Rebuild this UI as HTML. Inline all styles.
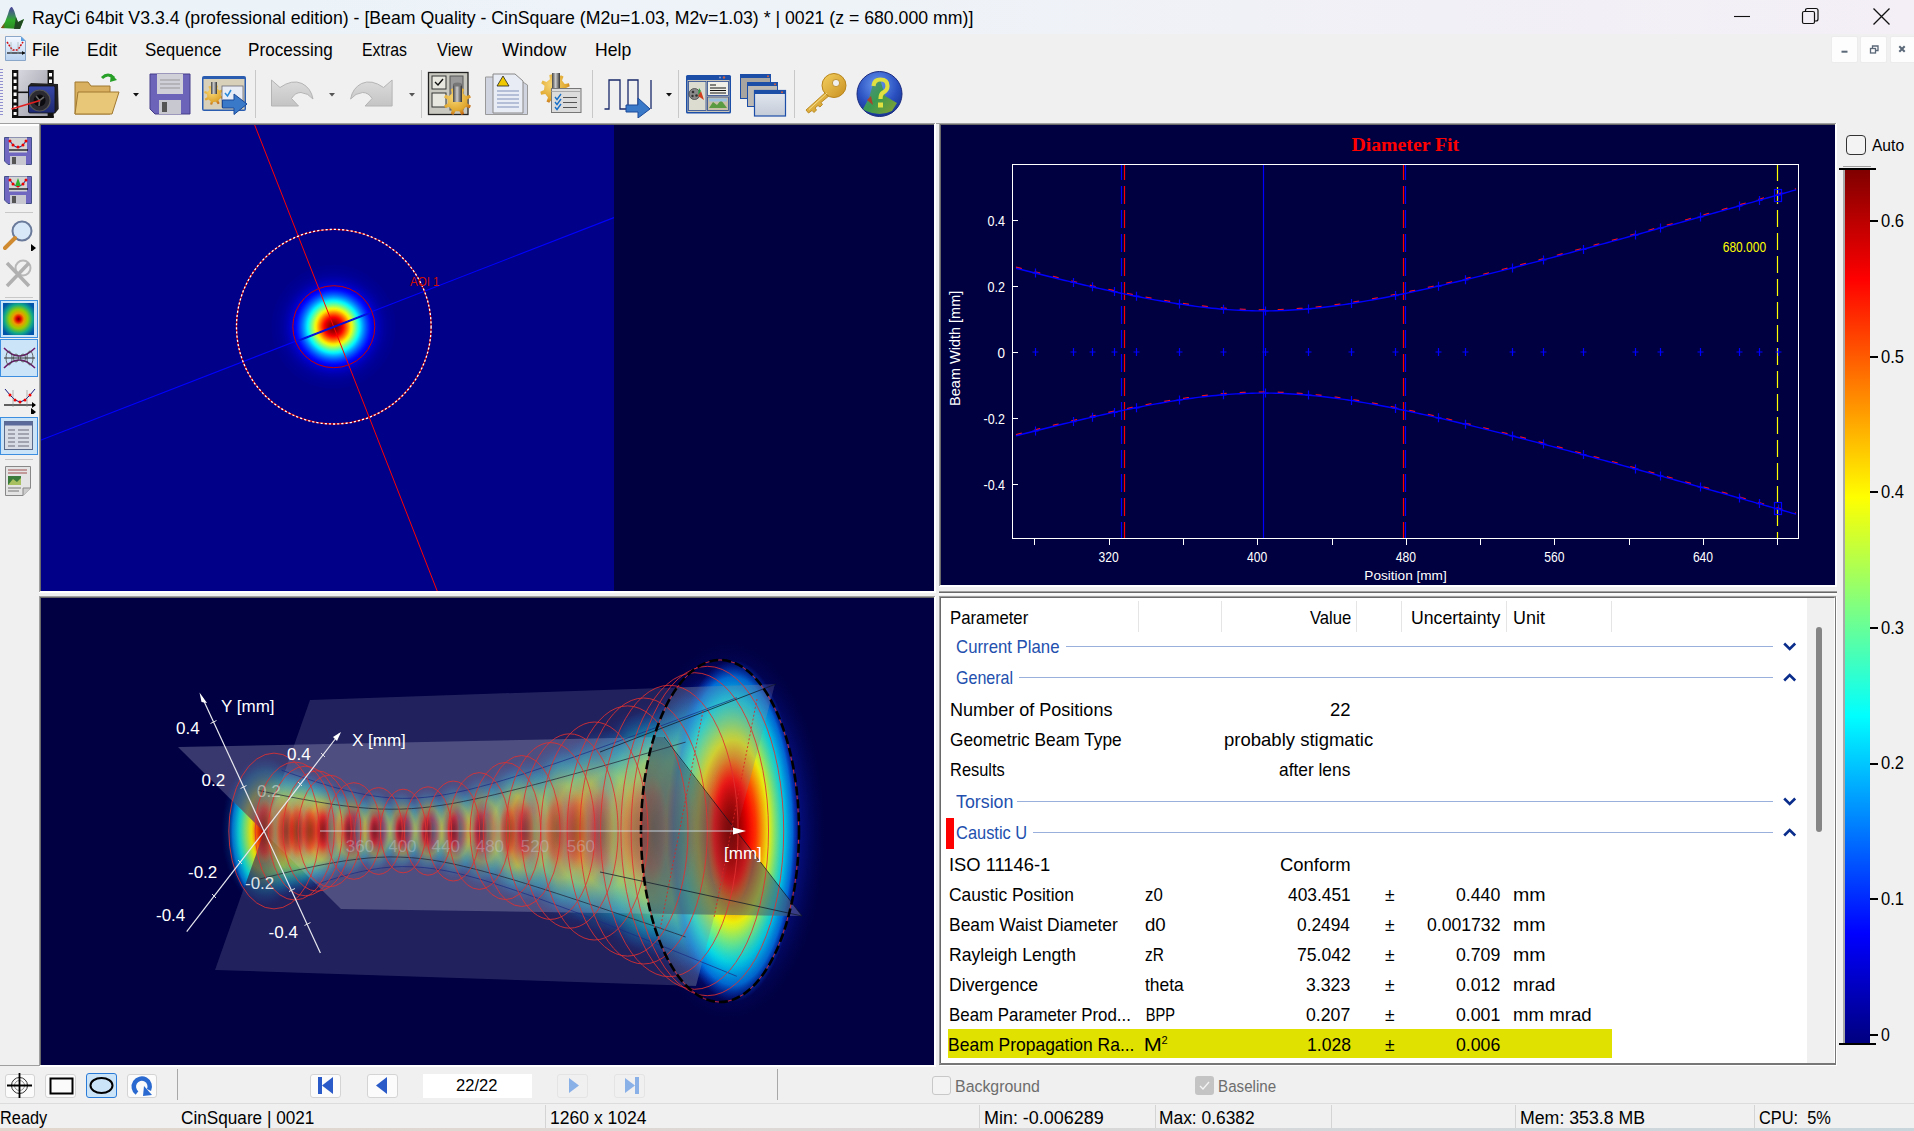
<!DOCTYPE html>
<html><head><meta charset="utf-8">
<style>
*{margin:0;padding:0;box-sizing:border-box}
html,body{width:1914px;height:1131px;overflow:hidden;background:#f0f0f0;font-family:"Liberation Sans",sans-serif;color:#000}
.a{position:absolute}
.t{position:absolute;white-space:nowrap}
svg{display:block}
</style></head><body>
<div class="a" style="left:0;top:0;width:1914px;height:34px;background:linear-gradient(90deg,#ebf3f8 0%,#eef3f8 45%,#f1f0f6 75%,#f4eff6 100%)"></div>
<svg class="a" style="left:0;top:5px" width="26" height="26" viewBox="0 0 26 26">
<defs><linearGradient id="lg1" x1="0" y1="0" x2="0" y2="1"><stop offset="0" stop-color="#4a3f9a"/><stop offset="0.35" stop-color="#3f7a6a"/><stop offset="0.6" stop-color="#2faa2a"/><stop offset="1" stop-color="#2a8a20"/></linearGradient>
<linearGradient id="lg2" x1="0" y1="0" x2="1" y2="0"><stop offset="0" stop-color="#c02010" stop-opacity="0.9"/><stop offset="0.4" stop-color="#c02010" stop-opacity="0"/></linearGradient></defs>
<path d="M1,23 L5,17 L8,9 Q10,1 12,2 Q14,4 16,12 L18,17 L24,14 L20,24 Z" fill="url(#lg1)"/>
<path d="M1,23 L5,17 L8,9 L12,20 L10,24 Z" fill="url(#lg2)"/>
<path d="M16,12 L18,17 L24,14 L20,24 L14,24 Z" fill="#1f3a20" opacity="0.85"/>
</svg>
<div class="t" style="left:32.00px;top:9.77px;font-size:17.75px;line-height:17.75px;color:#000;transform:scaleX(0.9968);transform-origin:1.00px 0;">RayCi 64bit V3.3.4 (professional edition) - [Beam Quality - CinSquare (M2u=1.03, M2v=1.03) * | 0021 (z = 680.000 mm)]</div>
<svg class="a" style="left:1720px;top:0" width="194" height="34">
<line x1="14" y1="16.5" x2="30" y2="16.5" stroke="#111" stroke-width="1.1"/>
<rect x="82.5" y="11.5" width="12" height="12" rx="1.5" fill="none" stroke="#111" stroke-width="1.2"/>
<path d="M85.5,11.5 V10.5 Q85.5,8.5 87.5,8.5 H96 Q98,8.5 98,10.5 V19 Q98,21 96,21 H94.5" fill="none" stroke="#111" stroke-width="1.2"/>
<path d="M153.5,8.5 L169.5,24.5 M169.5,8.5 L153.5,24.5" stroke="#111" stroke-width="1.3"/>
</svg>
<div class="a" style="left:0;top:34px;width:1914px;height:31px;background:#f0f0f0"></div>
<svg class="a" style="left:4px;top:35px" width="24" height="27" viewBox="0 0 24 27">
<defs><linearGradient id="dg" x1="0" y1="0" x2="0" y2="1"><stop offset="0" stop-color="#f4f8ff"/><stop offset="1" stop-color="#b9d2f0"/></linearGradient></defs>
<path d="M1.5,1.5 H17 L21.5,6 V25.5 H1.5 Z" fill="url(#dg)" stroke="#8aa6c8" stroke-width="1"/>
<path d="M17,1.5 V6 H21.5 Z" fill="#5aa0e0"/>
<path d="M3,18 H21" stroke="#111" stroke-width="1.2"/><path d="M18,16 L21,18 L18,20" fill="#111"/>
<path d="M3,7 L7,13 L9,15 L13,15 L15,13 L19,7" fill="none" stroke="#d01010" stroke-width="1.6" stroke-dasharray="2,1.2"/>
<path d="M7,7 V19 M14,7 V19" stroke="#9aa" stroke-width="0.6"/>
</svg>
<div class="t" style="left:32.00px;top:41.73px;font-size:17.8px;line-height:17.8px;color:#000;transform:scaleX(0.9519);transform-origin:1.00px 0;">File</div>
<div class="t" style="left:86.60px;top:41.73px;font-size:17.8px;line-height:17.8px;color:#000;transform:scaleX(0.9833);transform-origin:0.70px 0;">Edit</div>
<div class="t" style="left:144.79px;top:41.73px;font-size:17.8px;line-height:17.8px;color:#000;transform:scaleX(0.9532);transform-origin:0.61px 0;">Sequence</div>
<div class="t" style="left:248.39px;top:41.73px;font-size:17.8px;line-height:17.8px;color:#000;transform:scaleX(0.9632);transform-origin:0.81px 0;">Processing</div>
<div class="t" style="left:362.19px;top:41.73px;font-size:17.8px;line-height:17.8px;color:#000;transform:scaleX(0.8920);transform-origin:0.41px 0;">Extras</div>
<div class="t" style="left:436.60px;top:41.73px;font-size:17.8px;line-height:17.8px;color:#000;transform:scaleX(0.9256);transform-origin:-0.30px 0;">View</div>
<div class="t" style="left:502.00px;top:41.73px;font-size:17.8px;line-height:17.8px;color:#000;transform:scaleX(1.0188);transform-origin:-0.50px 0;">Window</div>
<div class="t" style="left:594.60px;top:41.73px;font-size:17.8px;line-height:17.8px;color:#000;transform:scaleX(0.9889);transform-origin:0.70px 0;">Help</div>
<div class="a" style="left:1831px;top:36px;width:27px;height:27px;background:#fdfdfd;border:1px solid #ececec;border-radius:2px"></div>
<div class="a" style="left:1860px;top:36px;width:27px;height:27px;background:#fdfdfd;border:1px solid #ececec;border-radius:2px"></div>
<div class="a" style="left:1890px;top:36px;width:26px;height:27px;background:#fdfdfd;border:1px solid #ececec;border-radius:2px"></div>
<svg class="a" style="left:1831px;top:36px" width="83" height="27">
<line x1="10.5" y1="15.7" x2="16.5" y2="15.7" stroke="#5a6878" stroke-width="2"/>
<rect x="39.5" y="12.5" width="5" height="4.5" fill="none" stroke="#5a6878" stroke-width="1.3"/><path d="M41.5,12.5 V10 H47 V14.5 H44.5" fill="none" stroke="#5a6878" stroke-width="1.3"/>
<path d="M68.3,10.3 L73.7,15.7 M73.7,10.3 L68.3,15.7" stroke="#5a6878" stroke-width="2"/>
</svg>
<svg class="a" style="left:0;top:68px" width="4" height="48"><rect x="0" y="1" width="3" height="1" fill="#9090d0"/><rect x="0" y="4" width="3" height="1" fill="#9090d0"/><rect x="0" y="7" width="3" height="1" fill="#9090d0"/><rect x="0" y="10" width="3" height="1" fill="#9090d0"/><rect x="0" y="13" width="3" height="1" fill="#9090d0"/><rect x="0" y="16" width="3" height="1" fill="#9090d0"/><rect x="0" y="19" width="3" height="1" fill="#9090d0"/><rect x="0" y="22" width="3" height="1" fill="#9090d0"/><rect x="0" y="25" width="3" height="1" fill="#9090d0"/><rect x="0" y="28" width="3" height="1" fill="#9090d0"/><rect x="0" y="31" width="3" height="1" fill="#9090d0"/><rect x="0" y="34" width="3" height="1" fill="#9090d0"/><rect x="0" y="37" width="3" height="1" fill="#9090d0"/><rect x="0" y="40" width="3" height="1" fill="#9090d0"/><rect x="0" y="43" width="3" height="1" fill="#9090d0"/><rect x="0" y="46" width="3" height="1" fill="#9090d0"/></svg>
<div class="a" style="left:255px;top:70px;width:1px;height:48px;background:#c8c8c8"></div>
<div class="a" style="left:421px;top:70px;width:1px;height:48px;background:#c8c8c8"></div>
<div class="a" style="left:592px;top:70px;width:1px;height:48px;background:#c8c8c8"></div>
<div class="a" style="left:678px;top:70px;width:1px;height:48px;background:#c8c8c8"></div>
<div class="a" style="left:794px;top:70px;width:1px;height:48px;background:#c8c8c8"></div>
<svg class="a" style="left:133px;top:93px" width="7" height="4"><path d="M0,0 H6 L3,3.5 Z" fill="#111"/></svg>
<svg class="a" style="left:329px;top:93px" width="7" height="4"><path d="M0,0 H6 L3,3.5 Z" fill="#555"/></svg>
<svg class="a" style="left:409px;top:93px" width="7" height="4"><path d="M0,0 H6 L3,3.5 Z" fill="#555"/></svg>
<svg class="a" style="left:666px;top:93px" width="7" height="4"><path d="M0,0 H6 L3,3.5 Z" fill="#111"/></svg>
<svg class="a" style="left:11px;top:69px" width="50" height="50" viewBox="11 69 50 50">
<defs><linearGradient id="filmg" x1="0" y1="0" x2="1" y2="1"><stop offset="0" stop-color="#d8d8e0"/><stop offset="1" stop-color="#9a9aa6"/></linearGradient>
<linearGradient id="camg" x1="0" y1="0" x2="0" y2="1"><stop offset="0" stop-color="#3848a8"/><stop offset="1" stop-color="#1c2870"/></linearGradient></defs>
<rect x="18" y="70" width="29.5" height="47.5" fill="url(#filmg)"/>
<rect x="12" y="70" width="6.3" height="47.5" fill="#111"/>
<rect x="47.5" y="70" width="6.2" height="47.5" fill="#111"/>
<rect x="12" y="116" width="41.7" height="2" fill="#111"/>
<rect x="18" y="91.5" width="16" height="1.6" fill="#111"/>
<g fill="#fff"><rect x="13.6" y="73" width="3" height="3.5"/><rect x="13.6" y="79.5" width="3" height="3.5"/><rect x="13.6" y="86" width="3" height="3.5"/><rect x="13.6" y="92.5" width="3" height="3.5"/><rect x="13.6" y="99" width="3" height="3.5"/><rect x="13.6" y="105.5" width="3" height="3.5"/><rect x="13.6" y="112" width="3" height="3"/>
<rect x="49" y="73" width="3" height="3.5"/><rect x="49" y="79.5" width="3" height="3.5"/></g>
<path d="M28,86 L31,83 L58,84 L58.7,109 L55,113.6 L28,112 Z" fill="#222"/>
<rect x="28.5" y="86" width="26.5" height="27" rx="1.5" fill="url(#camg)" stroke="#111" stroke-width="0.8"/>
<circle cx="39.6" cy="100.5" r="10.5" fill="#2a2a30" stroke="#555" stroke-width="1.2"/>
<circle cx="39.6" cy="100.5" r="6" fill="#0c0c10"/>
<path d="M36,96 L39.6,100.5 L44,97 M39.6,100.5 L39,106" stroke="#666" stroke-width="1.6"/>
<path d="M11.5,109 L40,100.5" stroke="#e02020" stroke-width="1.8"/>
</svg>
<svg class="a" style="left:74px;top:72px" width="46" height="44" viewBox="0 0 46 44">
<path d="M28,6 Q34,0 40,6" fill="none" stroke="#28a028" stroke-width="3"/><path d="M37,2 L43,8 L36,10 Z" fill="#28a028"/>
<path d="M1,10 H14 L17,14 H36 V42 H1 Z" fill="#d9b060" stroke="#a07830" stroke-width="1"/>
<path d="M4,20 H45 L38,42 H1 Z" fill="#e8c878" stroke="#a07830" stroke-width="1"/>
</svg>
<svg class="a" style="left:149px;top:73px" width="42" height="42" viewBox="0 0 42 42">
<path d="M1,1 H41 V41 H6 L1,36 Z" fill="#6c64b8" stroke="#443c88" stroke-width="1"/>
<rect x="8" y="1" width="26" height="20" fill="#d0d0d8"/>
<path d="M11,7 H31 M11,11 H31 M11,15 H31" stroke="#999" stroke-width="1"/>
<rect x="10" y="27" width="22" height="14" fill="#c8c8d0"/><rect x="13" y="29" width="5" height="10" fill="#555"/>
</svg>
<svg class="a" style="left:200px;top:73px" width="52" height="48" viewBox="200 73 52 48">
<rect x="202" y="76" width="44" height="35" rx="2" fill="#2a5cb0"/>
<rect x="203.5" y="79" width="41" height="30.5" fill="#d8d0b8"/>
<path d="M221.0,95.7 L223.8,96.9 L223.2,98.9 L220.2,98.3 L218.4,100.4 L219.6,103.3 L217.8,104.3 L216.0,101.7 L213.3,102.0 L212.1,104.8 L210.1,104.2 L210.7,101.2 L208.6,99.4 L205.7,100.6 L204.7,98.8 L207.3,97.0 L207.0,94.3 L204.2,93.1 L204.8,91.1 L207.8,91.7 L209.6,89.6 L208.4,86.7 L210.2,85.7 L212.0,88.3 L214.7,88.0 L215.9,85.2 L217.9,85.8 L217.3,88.8 L219.4,90.6 L222.3,89.4 L223.3,91.2 L220.7,93.0 Z" fill="url(#gearg)"/>
<rect x="211" y="82" width="6" height="12" fill="url(#cyl)"/>
<rect x="222" y="86" width="21" height="21" fill="#e8ecf4" stroke="#667" stroke-width="0.8"/>
<path d="M225,93 L227.5,96 L231,90" fill="none" stroke="#2a8ad8" stroke-width="1.5"/>
<path d="M222.5,100 H234 V94 L247,104 L234,114.5 V108 H222.5 Z" fill="#3a78c8" stroke="#1a4a98" stroke-width="1"/>
</svg>
<svg class="a" style="left:260px;top:70px" width="160" height="48" viewBox="260 70 160 48">
<defs><linearGradient id="ug" x1="0" y1="0" x2="0" y2="1"><stop offset="0" stop-color="#dcdcdc"/><stop offset="1" stop-color="#c4c4c4"/></linearGradient></defs>
<path d="M271.5,80 L280.0,87.5 Q292.0,79 302.0,83.5 Q311.0,88 313.0,99 Q308.0,93 301.0,92.5 Q295.0,92.5 291.5,98.5 L298.5,106 L271.5,106 Z" fill="url(#ug)" stroke="#b4b4b4" stroke-width="1"/>
<path d="M392.1,80 L383.6,87.5 Q371.6,79 361.6,83.5 Q352.6,88 350.6,99 Q355.6,93 362.6,92.5 Q368.6,92.5 372.1,98.5 L365.1,106 L392.1,106 Z" fill="url(#ug)" stroke="#b4b4b4" stroke-width="1"/>
</svg>
<svg class="a" style="left:426px;top:70px" width="52" height="50" viewBox="426 70 52 50">
<defs><linearGradient id="cyl" x1="0" y1="0" x2="1" y2="0"><stop offset="0" stop-color="#444"/><stop offset="0.45" stop-color="#ccc"/><stop offset="1" stop-color="#333"/></linearGradient>
<radialGradient id="gearg" cx="0.4" cy="0.35" r="0.7"><stop offset="0" stop-color="#f8d878"/><stop offset="0.7" stop-color="#e0a830"/><stop offset="1" stop-color="#c06010"/></radialGradient></defs>
<rect x="428.5" y="72.5" width="39.5" height="42" fill="#c8c8c0" stroke="#222" stroke-width="1.3"/>
<rect x="432" y="76" width="14" height="13" fill="#e8e8e0" stroke="#333" stroke-width="1"/><path d="M435,82 L438,85 L443,79" fill="none" stroke="#111" stroke-width="1.4"/>
<rect x="432" y="93" width="14" height="14" fill="#e8e8e0" stroke="#333" stroke-width="1"/>
<rect x="450" y="76" width="13" height="34" fill="#999" stroke="#555" stroke-width="1"/>
<path d="M467.3,103.5 L470.9,105.6 L469.8,108.2 L465.8,107.1 L463.0,109.8 L464.1,113.8 L461.5,114.9 L459.4,111.3 L455.5,111.3 L453.4,114.9 L450.8,113.8 L451.9,109.8 L449.2,107.0 L445.2,108.1 L444.1,105.5 L447.7,103.4 L447.7,99.5 L444.1,97.4 L445.2,94.8 L449.2,95.9 L452.0,93.2 L450.9,89.2 L453.5,88.1 L455.6,91.7 L459.5,91.7 L461.6,88.1 L464.2,89.2 L463.1,93.2 L465.8,96.0 L469.8,94.9 L470.9,97.5 L467.3,99.6 Z" fill="url(#gearg)"/>
<rect x="453" y="84" width="9" height="18" fill="url(#cyl)"/><ellipse cx="457.5" cy="84.5" rx="4.5" ry="2" fill="#777"/>
</svg>
<svg class="a" style="left:485px;top:73px" width="43" height="42" viewBox="0 0 43 42">
<path d="M0.5,4 H30 L42.5,12 V41.5 H0.5 Z" fill="#d0d4e0" stroke="#999" stroke-width="1"/>
<path d="M8,1 H30 L38,8 V40 H8 Z" fill="#e8ecf4" stroke="#888" stroke-width="1"/>
<path d="M18,3 L24,13 H12 Z" fill="#f0c800" stroke="#222" stroke-width="0.8"/>
<path d="M12,18 H34 M12,22 H34 M12,26 H34 M12,30 H34 M12,34 H34" stroke="#8090b8" stroke-width="1"/>
</svg>
<svg class="a" style="left:537px;top:71px" width="46" height="44" viewBox="537 71 46 44">
<path d="M565.5,92.3 L568.8,94.8 L567.4,97.5 L563.5,96.0 L560.1,98.7 L560.7,102.9 L557.8,103.7 L556.0,100.0 L551.7,99.5 L549.2,102.8 L546.5,101.4 L548.0,97.5 L545.3,94.1 L541.1,94.7 L540.3,91.8 L544.0,90.0 L544.5,85.7 L541.2,83.2 L542.6,80.5 L546.5,82.0 L549.9,79.3 L549.3,75.1 L552.2,74.3 L554.0,78.0 L558.3,78.5 L560.8,75.2 L563.5,76.6 L562.0,80.5 L564.7,83.9 L568.9,83.3 L569.7,86.2 L566.0,88.0 Z" fill="url(#gearg)"/>
<rect x="552" y="73" width="8" height="16" fill="url(#cyl)"/>
<rect x="551.5" y="88.5" width="29.5" height="24" fill="#dcdcdc" stroke="#777" stroke-width="1"/>
<path d="M551.5,91.5 H581" stroke="#aaa" stroke-width="1"/>
<path d="M555,97 L557,99.5 L561,94 M555,102 L557,104.5 L561,99 M555,107 L557,109.5 L561,104" fill="none" stroke="#1a70c8" stroke-width="1.4"/>
<path d="M563,97.5 H577 M563,102.5 H577 M563,107.5 H577" stroke="#555" stroke-width="1"/>
</svg>
<svg class="a" style="left:604px;top:77px" width="49" height="41" viewBox="0 0 49 41">
<path d="M0.5,32 H5 V3 H16 V32 H24 V3 H34 V32 M47,3 V32" fill="none" stroke="#1a2a6a" stroke-width="1.3"/>
<path d="M22,28 H34 V21 L46,32 L34,41 V35 H22 Z" fill="#3a78c8" stroke="#1a4a98" stroke-width="1"/>
</svg>
<svg class="a" style="left:685px;top:74px" width="48" height="41" viewBox="685 74 48 41">
<rect x="686" y="75" width="45" height="38.5" rx="1.5" fill="#1c4ea8"/>
<rect x="687.5" y="80" width="42" height="32" fill="#c8c4b8"/>
<circle cx="724" cy="77.5" r="1.2" fill="#d06040"/><circle cx="720" cy="77.5" r="1" fill="#8aa0d0"/>
<rect x="688.5" y="81.5" width="17.5" height="29" fill="#dcdcd0" stroke="#2a4a90" stroke-width="0.8"/>
<circle cx="694.5" cy="94" r="5.5" fill="#8a8a8a" stroke="#444" stroke-width="0.8"/>
<circle cx="693" cy="92" r="1.3" fill="#333"/><circle cx="696.5" cy="95.5" r="1.3" fill="#333"/><circle cx="692.5" cy="96" r="1.2" fill="#333"/>
<path d="M698,96 L704,100 L701,91 Z" fill="#d04020"/><path d="M698,95 L701,91 L699,88 Z" fill="#30a040"/>
<rect x="707.5" y="81.5" width="21" height="14" fill="#f0f0e8" stroke="#2a4a90" stroke-width="0.8"/>
<path d="M710,85 H716 M710,88 H726 M710,90.5 H726 M710,93 H726" stroke="#111" stroke-width="1.1"/>
<rect x="707.5" y="97" width="21" height="13.5" fill="#c8c0a8" stroke="#2a4a90" stroke-width="0.8"/>
<path d="M709,108 L713,102 L717,105 L721,100 L727,108 Z" fill="#5a9a40"/><rect x="709" y="98.5" width="18" height="3" fill="#9ac0e0"/>
</svg>
<svg class="a" style="left:739px;top:73px" width="50" height="45" viewBox="739 73 50 45">
<defs><linearGradient id="wg" x1="0" y1="0" x2="0" y2="1"><stop offset="0" stop-color="#e4e8f0"/><stop offset="1" stop-color="#c4ccd8"/></linearGradient></defs>
<rect x="740.5" y="74.5" width="30" height="24" fill="#a8a4a0" stroke="#1c4ea8" stroke-width="1"/><rect x="740.5" y="74.5" width="30" height="3.5" fill="#1c4ea8"/>
<rect x="747.5" y="82.5" width="30" height="24" fill="#bcb8b4" stroke="#1c4ea8" stroke-width="1"/><rect x="747.5" y="82.5" width="30" height="3.5" fill="#1c4ea8"/>
<rect x="754.5" y="90.5" width="31" height="25.5" fill="url(#wg)" stroke="#1c4ea8" stroke-width="1.2"/><rect x="754.5" y="90.5" width="31" height="3.5" fill="#1c4ea8"/>
<circle cx="782" cy="92.2" r="1" fill="#d06040"/><circle cx="775" cy="84.2" r="1" fill="#d06040"/><circle cx="768" cy="76.2" r="1" fill="#d06040"/>
</svg>
<svg class="a" style="left:802px;top:71px" width="46" height="44" viewBox="802 71 46 44">
<defs><linearGradient id="keyg" x1="0" y1="0" x2="1" y2="1"><stop offset="0" stop-color="#f4d060"/><stop offset="1" stop-color="#c89020"/></linearGradient></defs>
<path d="M826,92 L806,110 L808.5,113 L812,110.5 L814,112.5 L816.5,110 L815,108 L818,105.5 L820,107 L822.5,104.5 L821,102.5 L830,95 Z" fill="url(#keyg)" stroke="#b8841c" stroke-width="0.9"/>
<circle cx="834" cy="85.5" r="12" fill="url(#keyg)" stroke="#b8841c" stroke-width="1"/>
<circle cx="836" cy="83" r="3.6" fill="#f0f0f0" stroke="#b8841c" stroke-width="0.8"/>
<path d="M809,109.5 L827,93" stroke="#f8e8a0" stroke-width="1" opacity="0.8"/>
</svg>
<svg class="a" style="left:855px;top:70px" width="50" height="48" viewBox="855 70 50 48">
<defs><radialGradient id="hg" cx="0.45" cy="0.3" r="0.75"><stop offset="0" stop-color="#6a9af0"/><stop offset="0.6" stop-color="#2a50c0"/><stop offset="1" stop-color="#14308a"/></radialGradient>
<linearGradient id="mg" x1="0" y1="0" x2="1" y2="1"><stop offset="0" stop-color="#5a8aa0"/><stop offset="0.5" stop-color="#3a9a50"/><stop offset="1" stop-color="#8aa030"/></linearGradient></defs>
<circle cx="879.5" cy="94" r="22.5" fill="url(#hg)" stroke="#1a2a80" stroke-width="1"/>
<path d="M863,109 L869,98 L873,84 L877,77 L881,82 L885,96 L897,103 L892,111 Q880,117 866,111 Z" fill="url(#mg)"/>
<path d="M867,100 L871,96 L873,105 Z" fill="#c03020" opacity="0.8"/>
<path d="M873.5,86 Q874,79.5 880.5,79.5 Q887.5,79.5 887.5,86 Q887.5,90.5 882.5,93 Q880.5,94.5 880.5,99" fill="none" stroke="#e0e040" stroke-width="4.2"/>
<rect x="878" y="102.5" width="5" height="5" fill="#e0e040"/>
</svg>
<div class="a" style="left:0;top:123px;width:1837px;height:1px;background:#a0a0a0"></div>
<div class="a" style="left:0;top:124px;width:39px;height:2px;background:#fff"></div>
<div class="a" style="left:5px;top:212px;width:28px;height:1px;background:#c8c8c8"></div>
<div class="a" style="left:5px;top:297px;width:28px;height:1px;background:#c8c8c8"></div>
<div class="a" style="left:5px;top:459px;width:28px;height:1px;background:#c8c8c8"></div>
<div class="a" style="left:0;top:300px;width:38px;height:38px;background:#cce4f7;border:1px solid #3c8ee0"></div>
<div class="a" style="left:0;top:339px;width:38px;height:38px;background:#cce4f7;border:1px solid #3c8ee0"></div>
<div class="a" style="left:0;top:417px;width:38px;height:38px;background:#cce4f7;border:1px solid #3c8ee0"></div>
<svg class="a" style="left:4px;top:137px" width="28" height="28" viewBox="0 0 28 28">
<path d="M0.5,0.5 H27.5 V27.5 H4 L0.5,24 Z" fill="#7068c0" stroke="#44508a" stroke-width="1"/>
<rect x="5" y="0.5" width="18" height="15" fill="#d4d4d4"/>
<path d="M6,4 L9,8 L12,10 L16,10 L19,8 L22,4" fill="none" stroke="#1a1a80" stroke-width="1"/>
<circle cx="6" cy="4" r="1.5" fill="#e00"/><circle cx="9" cy="8" r="1.5" fill="#e00"/><circle cx="14" cy="10" r="1.5" fill="#e00"/><circle cx="19" cy="8" r="1.5" fill="#e00"/><circle cx="22" cy="4" r="1.5" fill="#e00"/>
<path d="M5,13 H24" stroke="#000" stroke-width="1.2"/>
<rect x="6" y="19" width="16" height="9" fill="#c8c8d0"/><rect x="8" y="20" width="4" height="7" fill="#555"/>
</svg>
<svg class="a" style="left:4px;top:176px" width="28" height="28" viewBox="0 0 28 28">
<path d="M0.5,0.5 H27.5 V27.5 H4 L0.5,24 Z" fill="#7068c0" stroke="#44508a" stroke-width="1"/>
<rect x="5" y="0.5" width="18" height="15" fill="#d4d4d4"/>
<path d="M6,4 L9,8 L12,10 L16,10 L19,8 L22,4" fill="none" stroke="#1a1a80" stroke-width="1"/>
<circle cx="6" cy="4" r="1.5" fill="#e00"/><circle cx="9" cy="8" r="1.5" fill="#e00"/><circle cx="14" cy="10" r="1.5" fill="#e00"/><circle cx="19" cy="8" r="1.5" fill="#e00"/><circle cx="22" cy="4" r="1.5" fill="#e00"/>
<path d="M5,13 H24" stroke="#000" stroke-width="1.2"/><path d="M14,2 L17,10 L11,10 Z" fill="#30b030"/>
<rect x="6" y="19" width="16" height="9" fill="#c8c8d0"/><rect x="8" y="20" width="4" height="7" fill="#555"/>
</svg>
<svg class="a" style="left:3px;top:219px" width="34" height="32" viewBox="0 0 34 32">
<circle cx="19" cy="12" r="9.5" fill="#d8e8f8" stroke="#6a7a9a" stroke-width="2"/>
<path d="M12,19 L2,29" stroke="#d08a30" stroke-width="4" stroke-linecap="round"/>
<path d="M28,25 L33,29 L28,33 Z" fill="#000"/>
</svg>
<svg class="a" style="left:3px;top:259px" width="32" height="30" viewBox="0 0 32 30">
<circle cx="20" cy="9" r="7.5" fill="none" stroke="#b8b8b8" stroke-width="2"/>
<path d="M4,4 L26,27 M26,4 L4,27" stroke="#b0b0b0" stroke-width="3.5"/>
</svg>
<svg class="a" style="left:3px;top:303px" width="31" height="32" viewBox="0 0 31 32">
<defs><radialGradient id="bi" cx="0.5" cy="0.5" r="0.6"><stop offset="0" stop-color="#700"/><stop offset="0.12" stop-color="#d00"/><stop offset="0.3" stop-color="#e90"/><stop offset="0.5" stop-color="#9c0"/><stop offset="0.75" stop-color="#1a8"/><stop offset="1" stop-color="#05a"/></radialGradient></defs>
<rect x="0" y="0" width="31" height="32" fill="url(#bi)"/>
</svg>
<svg class="a" style="left:3px;top:342px" width="33" height="32" viewBox="0 0 33 32">
<path d="M1,6 Q16,22 32,6 M1,26 Q16,10 32,26" fill="none" stroke="#6a1a6a" stroke-width="1.5"/>
<path d="M1,16 H32" stroke="#333" stroke-width="1"/>
<ellipse cx="6" cy="16" rx="3" ry="7" fill="none" stroke="#444" stroke-width="0.8"/><ellipse cx="13" cy="16" rx="2.5" ry="4" fill="none" stroke="#444" stroke-width="0.8"/><ellipse cx="20" cy="16" rx="2.5" ry="4" fill="none" stroke="#444" stroke-width="0.8"/><ellipse cx="27" cy="16" rx="3" ry="7" fill="none" stroke="#444" stroke-width="0.8"/>
</svg>
<svg class="a" style="left:3px;top:386px" width="34" height="28" viewBox="0 0 34 28">
<path d="M2,3 L7,9 L12,14 L17,16 L22,14 L27,9 L32,3" fill="none" stroke="#1a1a80" stroke-width="1"/>
<circle cx="7" cy="9" r="1.5" fill="#e00"/><circle cx="12" cy="14" r="1.5" fill="#e00"/><circle cx="17" cy="16" r="1.5" fill="#e00"/><circle cx="22" cy="14" r="1.5" fill="#e00"/><circle cx="27" cy="9" r="1.5" fill="#e00"/>
<path d="M1,19 H32" stroke="#000" stroke-width="1.2"/><path d="M29,16 L33,19 L29,22" fill="#000"/>
<path d="M10,4 V21 M24,4 V21" stroke="#888" stroke-width="0.6"/>
<path d="M28,22 L33,26 L28,30 Z" fill="#000"/>
</svg>
<svg class="a" style="left:4px;top:421px" width="29" height="29" viewBox="0 0 29 29">
<rect x="0.5" y="0.5" width="28" height="28" fill="#d8dce4" stroke="#5a6a8a" stroke-width="1"/>
<rect x="0.5" y="0.5" width="28" height="4" fill="#5a6a9a"/>
<path d="M4,9 H11 M14,9 H25 M4,13 H11 M14,13 H25 M4,17 H11 M14,17 H25 M4,21 H11 M14,21 H25 M4,25 H11 M14,25 H25" stroke="#6a6a7a" stroke-width="1.2"/>
</svg>
<svg class="a" style="left:5px;top:466px" width="26" height="30" viewBox="0 0 26 30">
<path d="M0.5,0.5 H25.5 V22 L18,29.5 H0.5 Z" fill="#e4e4e4" stroke="#888" stroke-width="1"/>
<path d="M18,29.5 V22 H25.5" fill="#ccc" stroke="#888" stroke-width="1"/>
<path d="M3,4 H22 M3,7 H22" stroke="#a05050" stroke-width="1"/>
<rect x="3" y="10" width="13" height="9" fill="#3a7a3a"/><path d="M3,19 L8,13 L12,16 L16,12 V19 Z" fill="#a8c060"/>
<path d="M3,22 H16 M3,25 H14" stroke="#777" stroke-width="1"/>
</svg>
<div class="a" style="left:0px;top:1065px;width:39px;height:1px;background:#a0a0a0"></div>
<div class="a" style="left:39px;top:123px;width:897px;height:470px;background:#fff"></div>
<div class="a" style="left:39px;top:123px;width:896px;height:1px;background:#a0a0a0"></div>
<div class="a" style="left:39px;top:123px;width:1px;height:469px;background:#a0a0a0"></div>
<div class="a" style="left:40px;top:124px;width:894px;height:1px;background:#696969"></div>
<div class="a" style="left:40px;top:124px;width:1px;height:467px;background:#696969"></div>
<div class="a" style="left:41px;top:125px;width:893px;height:466px;background:#000040"></div>
<div class="a" style="left:939px;top:123px;width:898px;height:464px;background:#fff"></div>
<div class="a" style="left:939px;top:123px;width:897px;height:1px;background:#a0a0a0"></div>
<div class="a" style="left:939px;top:123px;width:1px;height:463px;background:#a0a0a0"></div>
<div class="a" style="left:940px;top:124px;width:895px;height:1px;background:#696969"></div>
<div class="a" style="left:940px;top:124px;width:1px;height:461px;background:#696969"></div>
<div class="a" style="left:941px;top:125px;width:894px;height:460px;background:#000040"></div>
<div class="a" style="left:939px;top:591px;width:898px;height:1px;background:#a0a0a0"></div>
<div class="a" style="left:939px;top:592px;width:898px;height:1px;background:#696969"></div>
<div class="a" style="left:939px;top:593px;width:898px;height:2px;background:#fbfbfb"></div>
<div class="a" style="left:39px;top:596px;width:897px;height:471px;background:#fff"></div>
<div class="a" style="left:39px;top:596px;width:896px;height:1px;background:#a0a0a0"></div>
<div class="a" style="left:39px;top:596px;width:1px;height:470px;background:#a0a0a0"></div>
<div class="a" style="left:40px;top:597px;width:894px;height:1px;background:#696969"></div>
<div class="a" style="left:40px;top:597px;width:1px;height:468px;background:#696969"></div>
<div class="a" style="left:41px;top:598px;width:893px;height:467px;background:#000042"></div>
<svg class="a" style="left:41px;top:125px" width="893" height="466" viewBox="41 125 893 466">
<defs><radialGradient id="beam" gradientUnits="userSpaceOnUse" cx="333.5" cy="326.8" r="62.0"><stop offset="0.000" stop-color="#800000"/><stop offset="0.025" stop-color="#830000"/><stop offset="0.050" stop-color="#8e0000"/><stop offset="0.075" stop-color="#a00000"/><stop offset="0.100" stop-color="#b80000"/><stop offset="0.125" stop-color="#d70000"/><stop offset="0.150" stop-color="#fa0000"/><stop offset="0.175" stop-color="#ff2400"/><stop offset="0.200" stop-color="#ff5100"/><stop offset="0.225" stop-color="#ff8000"/><stop offset="0.250" stop-color="#ffb200"/><stop offset="0.275" stop-color="#ffe600"/><stop offset="0.300" stop-color="#e4ff1b"/><stop offset="0.325" stop-color="#b0ff4f"/><stop offset="0.350" stop-color="#7eff81"/><stop offset="0.375" stop-color="#4cffb3"/><stop offset="0.400" stop-color="#1dffe2"/><stop offset="0.425" stop-color="#00efff"/><stop offset="0.450" stop-color="#00c4ff"/><stop offset="0.475" stop-color="#009dff"/><stop offset="0.500" stop-color="#0079ff"/><stop offset="0.525" stop-color="#0058ff"/><stop offset="0.550" stop-color="#003bff"/><stop offset="0.575" stop-color="#0020ff"/><stop offset="0.600" stop-color="#0009ff"/><stop offset="0.625" stop-color="#0000f3"/><stop offset="0.650" stop-color="#0000e2"/><stop offset="0.675" stop-color="#0000d2"/><stop offset="0.700" stop-color="#0000c5"/><stop offset="0.725" stop-color="#0000ba"/><stop offset="0.750" stop-color="#0000b1"/><stop offset="0.775" stop-color="#0000a9"/><stop offset="0.800" stop-color="#0000a3"/><stop offset="0.825" stop-color="#00009d"/><stop offset="0.850" stop-color="#000099"/><stop offset="0.875" stop-color="#000096"/><stop offset="0.900" stop-color="#000093"/><stop offset="0.925" stop-color="#000091"/><stop offset="0.950" stop-color="#00008f"/><stop offset="0.975" stop-color="#00008e"/><stop offset="1.000" stop-color="#00008d"/></radialGradient>
<clipPath id="imgclip"><rect x="41" y="125" width="573" height="466"/></clipPath></defs>
<rect x="41" y="125" width="573" height="466" fill="#000089"/>
<circle cx="333.5" cy="326.8" r="62.0" fill="url(#beam)"/>
<g clip-path="url(#imgclip)">
<line x1="254.7" y1="125" x2="437.2" y2="591" stroke="#ff0000" stroke-width="1"/>
<line x1="41" y1="440" x2="614" y2="217.6" stroke="#0000ff" stroke-width="1.1"/>
<line x1="295.5" y1="342.1" x2="371.5" y2="312.6" stroke="#0018d0" stroke-width="1.3"/>
</g>
<circle cx="333.8" cy="326.7" r="41" fill="none" stroke="#c80000" stroke-width="1"/>
<circle cx="333.8" cy="326.7" r="97.3" fill="none" stroke="#d00000" stroke-width="1.3"/>
<circle cx="333.8" cy="326.7" r="97.3" fill="none" stroke="#ffffff" stroke-width="1.3" stroke-dasharray="2.2,2"/>
<text x="410" y="286" font-family="Liberation Sans" font-size="13.5" fill="#d01000" textLength="29.5" lengthAdjust="spacingAndGlyphs">AOI 1</text>
</svg>
<svg class="a" style="left:941px;top:125px" width="894" height="460" viewBox="941 125 894 460">
<rect x="941" y="125" width="894" height="460" fill="#000040"/>
<text x="1405.3" y="151" text-anchor="middle" font-family="Liberation Serif" font-weight="bold" font-size="19.8" fill="#ff0000">Diameter Fit</text>
<rect x="1012.5" y="164.5" width="786" height="374" fill="none" stroke="#ffffff" stroke-width="1"/>
<line x1="1012" y1="220.5" x2="1018" y2="220.5" stroke="#fff" stroke-width="1"/>
<text x="1005" y="226.0" text-anchor="end" font-family="Liberation Sans" font-size="14" fill="#fff" textLength="17.5" lengthAdjust="spacingAndGlyphs">0.4</text>
<line x1="1012" y1="286.5" x2="1018" y2="286.5" stroke="#fff" stroke-width="1"/>
<text x="1005" y="291.9" text-anchor="end" font-family="Liberation Sans" font-size="14" fill="#fff" textLength="17.5" lengthAdjust="spacingAndGlyphs">0.2</text>
<line x1="1012" y1="352.5" x2="1018" y2="352.5" stroke="#fff" stroke-width="1"/>
<text x="1005" y="357.8" text-anchor="end" font-family="Liberation Sans" font-size="14" fill="#fff" textLength="7.5" lengthAdjust="spacingAndGlyphs">0</text>
<line x1="1012" y1="418.5" x2="1018" y2="418.5" stroke="#fff" stroke-width="1"/>
<text x="1005" y="423.7" text-anchor="end" font-family="Liberation Sans" font-size="14" fill="#fff" textLength="21.5" lengthAdjust="spacingAndGlyphs">-0.2</text>
<line x1="1012" y1="484.5" x2="1018" y2="484.5" stroke="#fff" stroke-width="1"/>
<text x="1005" y="489.6" text-anchor="end" font-family="Liberation Sans" font-size="14" fill="#fff" textLength="21.5" lengthAdjust="spacingAndGlyphs">-0.4</text>
<line x1="1034.5" y1="538" x2="1034.5" y2="545" stroke="#fff" stroke-width="1"/>
<line x1="1109.5" y1="538" x2="1109.5" y2="545" stroke="#fff" stroke-width="1"/>
<line x1="1183.5" y1="538" x2="1183.5" y2="545" stroke="#fff" stroke-width="1"/>
<line x1="1257.5" y1="538" x2="1257.5" y2="545" stroke="#fff" stroke-width="1"/>
<line x1="1332.5" y1="538" x2="1332.5" y2="545" stroke="#fff" stroke-width="1"/>
<line x1="1406.5" y1="538" x2="1406.5" y2="545" stroke="#fff" stroke-width="1"/>
<line x1="1480.5" y1="538" x2="1480.5" y2="545" stroke="#fff" stroke-width="1"/>
<line x1="1554.5" y1="538" x2="1554.5" y2="545" stroke="#fff" stroke-width="1"/>
<line x1="1629.5" y1="538" x2="1629.5" y2="545" stroke="#fff" stroke-width="1"/>
<line x1="1703.5" y1="538" x2="1703.5" y2="545" stroke="#fff" stroke-width="1"/>
<line x1="1777.5" y1="538" x2="1777.5" y2="545" stroke="#fff" stroke-width="1"/>
<text x="1098.5" y="562" font-family="Liberation Sans" font-size="14" fill="#fff" textLength="20.2" lengthAdjust="spacingAndGlyphs">320</text>
<text x="1247.1" y="562" font-family="Liberation Sans" font-size="14" fill="#fff" textLength="20.2" lengthAdjust="spacingAndGlyphs">400</text>
<text x="1395.7" y="562" font-family="Liberation Sans" font-size="14" fill="#fff" textLength="20.2" lengthAdjust="spacingAndGlyphs">480</text>
<text x="1544.3" y="562" font-family="Liberation Sans" font-size="14" fill="#fff" textLength="20.2" lengthAdjust="spacingAndGlyphs">560</text>
<text x="1692.9" y="562" font-family="Liberation Sans" font-size="14" fill="#fff" textLength="20.2" lengthAdjust="spacingAndGlyphs">640</text>
<text x="1405.5" y="580" text-anchor="middle" font-family="Liberation Sans" font-size="13.6" fill="#fff">Position [mm]</text>
<text transform="translate(959.5,348.3) rotate(-90)" text-anchor="middle" font-family="Liberation Sans" font-size="14.5" fill="#fff">Beam Width [mm]</text>
<line x1="1121.5" y1="165" x2="1121.5" y2="538" stroke="#0000ff" stroke-width="1.2" stroke-dasharray="18,6" stroke-dashoffset="3"/>
<line x1="1124.5" y1="165" x2="1124.5" y2="538" stroke="#ff0000" stroke-width="1.2" stroke-dasharray="18,6" stroke-dashoffset="3"/>
<line x1="1403.5" y1="165" x2="1403.5" y2="538" stroke="#ff0000" stroke-width="1.2" stroke-dasharray="18,6" stroke-dashoffset="3"/>
<line x1="1405.5" y1="165" x2="1405.5" y2="538" stroke="#0000ff" stroke-width="1.2" stroke-dasharray="18,6" stroke-dashoffset="3"/>
<line x1="1263.5" y1="165" x2="1263.5" y2="538" stroke="#0000ff" stroke-width="1.2"/>
<line x1="1777.5" y1="165" x2="1777.5" y2="538" stroke="#ffff00" stroke-width="1.2" stroke-dasharray="17,6" stroke-dashoffset="1"/>
<text x="1722.8" y="252" font-family="Liberation Sans" font-size="14" fill="#ffff00" textLength="43.3" lengthAdjust="spacingAndGlyphs">680.000</text>
<polyline points="1016.0,268.21 1020.0,269.24 1024.0,270.26 1028.0,271.28 1032.0,272.29 1036.0,273.30 1040.0,274.30 1044.0,275.30 1048.0,276.29 1052.0,277.28 1056.0,278.26 1060.0,279.24 1064.0,280.21 1068.0,281.17 1072.0,282.13 1076.0,283.08 1080.0,284.02 1084.0,284.96 1088.0,285.89 1092.0,286.81 1096.0,287.72 1100.0,288.62 1104.0,289.51 1108.0,290.40 1112.0,291.27 1116.0,292.13 1120.0,292.98 1124.0,293.83 1128.0,294.65 1132.0,295.47 1136.0,296.27 1140.0,297.06 1144.0,297.84 1148.0,298.60 1152.0,299.34 1156.0,300.07 1160.0,300.79 1164.0,301.48 1168.0,302.16 1172.0,302.82 1176.0,303.45 1180.0,304.07 1184.0,304.67 1188.0,305.24 1192.0,305.79 1196.0,306.32 1200.0,306.82 1204.0,307.30 1208.0,307.75 1212.0,308.18 1216.0,308.57 1220.0,308.94 1224.0,309.28 1228.0,309.58 1232.0,309.86 1236.0,310.11 1240.0,310.32 1244.0,310.50 1248.0,310.65 1252.0,310.77 1256.0,310.85 1260.0,310.90 1264.0,310.91 1268.0,310.89 1272.0,310.84 1276.0,310.75 1280.0,310.63 1284.0,310.48 1288.0,310.29 1292.0,310.07 1296.0,309.82 1300.0,309.54 1304.0,309.23 1308.0,308.89 1312.0,308.52 1316.0,308.12 1320.0,307.69 1324.0,307.23 1328.0,306.75 1332.0,306.25 1336.0,305.71 1340.0,305.16 1344.0,304.58 1348.0,303.98 1352.0,303.36 1356.0,302.72 1360.0,302.06 1364.0,301.38 1368.0,300.68 1372.0,299.97 1376.0,299.24 1380.0,298.49 1384.0,297.73 1388.0,296.95 1392.0,296.16 1396.0,295.35 1400.0,294.53 1404.0,293.70 1408.0,292.86 1412.0,292.01 1416.0,291.14 1420.0,290.27 1424.0,289.38 1428.0,288.49 1432.0,287.59 1436.0,286.67 1440.0,285.75 1444.0,284.82 1448.0,283.89 1452.0,282.94 1456.0,281.99 1460.0,281.03 1464.0,280.07 1468.0,279.10 1472.0,278.12 1476.0,277.14 1480.0,276.15 1484.0,275.16 1488.0,274.16 1492.0,273.15 1496.0,272.15 1500.0,271.13 1504.0,270.11 1508.0,269.09 1512.0,268.07 1516.0,267.04 1520.0,266.00 1524.0,264.96 1528.0,263.92 1532.0,262.88 1536.0,261.83 1540.0,260.78 1544.0,259.72 1548.0,258.67 1552.0,257.61 1556.0,256.54 1560.0,255.48 1564.0,254.41 1568.0,253.34 1572.0,252.27 1576.0,251.19 1580.0,250.11 1584.0,249.03 1588.0,247.95 1592.0,246.87 1596.0,245.78 1600.0,244.69 1604.0,243.60 1608.0,242.51 1612.0,241.42 1616.0,240.32 1620.0,239.22 1624.0,238.12 1628.0,237.02 1632.0,235.92 1636.0,234.82 1640.0,233.71 1644.0,232.61 1648.0,231.50 1652.0,230.39 1656.0,229.28 1660.0,228.17 1664.0,227.06 1668.0,225.94 1672.0,224.83 1676.0,223.71 1680.0,222.59 1684.0,221.47 1688.0,220.35 1692.0,219.23 1696.0,218.11 1700.0,216.99 1704.0,215.87 1708.0,214.74 1712.0,213.62 1716.0,212.49 1720.0,211.36 1724.0,210.23 1728.0,209.10 1732.0,207.98 1736.0,206.84 1740.0,205.71 1744.0,204.58 1748.0,203.45 1752.0,202.32 1756.0,201.18 1760.0,200.05 1764.0,198.91 1768.0,197.77 1772.0,196.64 1776.0,195.50 1780.0,194.36 1784.0,193.22 1788.0,192.08 1792.0,190.94 1796.0,189.80" fill="none" stroke="#ff1010" stroke-width="1.4" stroke-dasharray="6,13" transform="translate(0,-1)"/>
<polyline points="1016.0,268.21 1020.0,269.24 1024.0,270.26 1028.0,271.28 1032.0,272.29 1036.0,273.30 1040.0,274.30 1044.0,275.30 1048.0,276.29 1052.0,277.28 1056.0,278.26 1060.0,279.24 1064.0,280.21 1068.0,281.17 1072.0,282.13 1076.0,283.08 1080.0,284.02 1084.0,284.96 1088.0,285.89 1092.0,286.81 1096.0,287.72 1100.0,288.62 1104.0,289.51 1108.0,290.40 1112.0,291.27 1116.0,292.13 1120.0,292.98 1124.0,293.83 1128.0,294.65 1132.0,295.47 1136.0,296.27 1140.0,297.06 1144.0,297.84 1148.0,298.60 1152.0,299.34 1156.0,300.07 1160.0,300.79 1164.0,301.48 1168.0,302.16 1172.0,302.82 1176.0,303.45 1180.0,304.07 1184.0,304.67 1188.0,305.24 1192.0,305.79 1196.0,306.32 1200.0,306.82 1204.0,307.30 1208.0,307.75 1212.0,308.18 1216.0,308.57 1220.0,308.94 1224.0,309.28 1228.0,309.58 1232.0,309.86 1236.0,310.11 1240.0,310.32 1244.0,310.50 1248.0,310.65 1252.0,310.77 1256.0,310.85 1260.0,310.90 1264.0,310.91 1268.0,310.89 1272.0,310.84 1276.0,310.75 1280.0,310.63 1284.0,310.48 1288.0,310.29 1292.0,310.07 1296.0,309.82 1300.0,309.54 1304.0,309.23 1308.0,308.89 1312.0,308.52 1316.0,308.12 1320.0,307.69 1324.0,307.23 1328.0,306.75 1332.0,306.25 1336.0,305.71 1340.0,305.16 1344.0,304.58 1348.0,303.98 1352.0,303.36 1356.0,302.72 1360.0,302.06 1364.0,301.38 1368.0,300.68 1372.0,299.97 1376.0,299.24 1380.0,298.49 1384.0,297.73 1388.0,296.95 1392.0,296.16 1396.0,295.35 1400.0,294.53 1404.0,293.70 1408.0,292.86 1412.0,292.01 1416.0,291.14 1420.0,290.27 1424.0,289.38 1428.0,288.49 1432.0,287.59 1436.0,286.67 1440.0,285.75 1444.0,284.82 1448.0,283.89 1452.0,282.94 1456.0,281.99 1460.0,281.03 1464.0,280.07 1468.0,279.10 1472.0,278.12 1476.0,277.14 1480.0,276.15 1484.0,275.16 1488.0,274.16 1492.0,273.15 1496.0,272.15 1500.0,271.13 1504.0,270.11 1508.0,269.09 1512.0,268.07 1516.0,267.04 1520.0,266.00 1524.0,264.96 1528.0,263.92 1532.0,262.88 1536.0,261.83 1540.0,260.78 1544.0,259.72 1548.0,258.67 1552.0,257.61 1556.0,256.54 1560.0,255.48 1564.0,254.41 1568.0,253.34 1572.0,252.27 1576.0,251.19 1580.0,250.11 1584.0,249.03 1588.0,247.95 1592.0,246.87 1596.0,245.78 1600.0,244.69 1604.0,243.60 1608.0,242.51 1612.0,241.42 1616.0,240.32 1620.0,239.22 1624.0,238.12 1628.0,237.02 1632.0,235.92 1636.0,234.82 1640.0,233.71 1644.0,232.61 1648.0,231.50 1652.0,230.39 1656.0,229.28 1660.0,228.17 1664.0,227.06 1668.0,225.94 1672.0,224.83 1676.0,223.71 1680.0,222.59 1684.0,221.47 1688.0,220.35 1692.0,219.23 1696.0,218.11 1700.0,216.99 1704.0,215.87 1708.0,214.74 1712.0,213.62 1716.0,212.49 1720.0,211.36 1724.0,210.23 1728.0,209.10 1732.0,207.98 1736.0,206.84 1740.0,205.71 1744.0,204.58 1748.0,203.45 1752.0,202.32 1756.0,201.18 1760.0,200.05 1764.0,198.91 1768.0,197.77 1772.0,196.64 1776.0,195.50 1780.0,194.36 1784.0,193.22 1788.0,192.08 1792.0,190.94 1796.0,189.80" fill="none" stroke="#0000ff" stroke-width="1.4"/>
<polyline points="1016.0,435.79 1020.0,434.76 1024.0,433.74 1028.0,432.72 1032.0,431.71 1036.0,430.70 1040.0,429.70 1044.0,428.70 1048.0,427.71 1052.0,426.72 1056.0,425.74 1060.0,424.76 1064.0,423.79 1068.0,422.83 1072.0,421.87 1076.0,420.92 1080.0,419.98 1084.0,419.04 1088.0,418.11 1092.0,417.19 1096.0,416.28 1100.0,415.38 1104.0,414.49 1108.0,413.60 1112.0,412.73 1116.0,411.87 1120.0,411.02 1124.0,410.17 1128.0,409.35 1132.0,408.53 1136.0,407.73 1140.0,406.94 1144.0,406.16 1148.0,405.40 1152.0,404.66 1156.0,403.93 1160.0,403.21 1164.0,402.52 1168.0,401.84 1172.0,401.18 1176.0,400.55 1180.0,399.93 1184.0,399.33 1188.0,398.76 1192.0,398.21 1196.0,397.68 1200.0,397.18 1204.0,396.70 1208.0,396.25 1212.0,395.82 1216.0,395.43 1220.0,395.06 1224.0,394.72 1228.0,394.42 1232.0,394.14 1236.0,393.89 1240.0,393.68 1244.0,393.50 1248.0,393.35 1252.0,393.23 1256.0,393.15 1260.0,393.10 1264.0,393.09 1268.0,393.11 1272.0,393.16 1276.0,393.25 1280.0,393.37 1284.0,393.52 1288.0,393.71 1292.0,393.93 1296.0,394.18 1300.0,394.46 1304.0,394.77 1308.0,395.11 1312.0,395.48 1316.0,395.88 1320.0,396.31 1324.0,396.77 1328.0,397.25 1332.0,397.75 1336.0,398.29 1340.0,398.84 1344.0,399.42 1348.0,400.02 1352.0,400.64 1356.0,401.28 1360.0,401.94 1364.0,402.62 1368.0,403.32 1372.0,404.03 1376.0,404.76 1380.0,405.51 1384.0,406.27 1388.0,407.05 1392.0,407.84 1396.0,408.65 1400.0,409.47 1404.0,410.30 1408.0,411.14 1412.0,411.99 1416.0,412.86 1420.0,413.73 1424.0,414.62 1428.0,415.51 1432.0,416.41 1436.0,417.33 1440.0,418.25 1444.0,419.18 1448.0,420.11 1452.0,421.06 1456.0,422.01 1460.0,422.97 1464.0,423.93 1468.0,424.90 1472.0,425.88 1476.0,426.86 1480.0,427.85 1484.0,428.84 1488.0,429.84 1492.0,430.85 1496.0,431.85 1500.0,432.87 1504.0,433.89 1508.0,434.91 1512.0,435.93 1516.0,436.96 1520.0,438.00 1524.0,439.04 1528.0,440.08 1532.0,441.12 1536.0,442.17 1540.0,443.22 1544.0,444.28 1548.0,445.33 1552.0,446.39 1556.0,447.46 1560.0,448.52 1564.0,449.59 1568.0,450.66 1572.0,451.73 1576.0,452.81 1580.0,453.89 1584.0,454.97 1588.0,456.05 1592.0,457.13 1596.0,458.22 1600.0,459.31 1604.0,460.40 1608.0,461.49 1612.0,462.58 1616.0,463.68 1620.0,464.78 1624.0,465.88 1628.0,466.98 1632.0,468.08 1636.0,469.18 1640.0,470.29 1644.0,471.39 1648.0,472.50 1652.0,473.61 1656.0,474.72 1660.0,475.83 1664.0,476.94 1668.0,478.06 1672.0,479.17 1676.0,480.29 1680.0,481.41 1684.0,482.53 1688.0,483.65 1692.0,484.77 1696.0,485.89 1700.0,487.01 1704.0,488.13 1708.0,489.26 1712.0,490.38 1716.0,491.51 1720.0,492.64 1724.0,493.77 1728.0,494.90 1732.0,496.02 1736.0,497.16 1740.0,498.29 1744.0,499.42 1748.0,500.55 1752.0,501.68 1756.0,502.82 1760.0,503.95 1764.0,505.09 1768.0,506.23 1772.0,507.36 1776.0,508.50 1780.0,509.64 1784.0,510.78 1788.0,511.92 1792.0,513.06 1796.0,514.20" fill="none" stroke="#ff1010" stroke-width="1.4" stroke-dasharray="6,13" transform="translate(0,-1)"/>
<polyline points="1016.0,435.79 1020.0,434.76 1024.0,433.74 1028.0,432.72 1032.0,431.71 1036.0,430.70 1040.0,429.70 1044.0,428.70 1048.0,427.71 1052.0,426.72 1056.0,425.74 1060.0,424.76 1064.0,423.79 1068.0,422.83 1072.0,421.87 1076.0,420.92 1080.0,419.98 1084.0,419.04 1088.0,418.11 1092.0,417.19 1096.0,416.28 1100.0,415.38 1104.0,414.49 1108.0,413.60 1112.0,412.73 1116.0,411.87 1120.0,411.02 1124.0,410.17 1128.0,409.35 1132.0,408.53 1136.0,407.73 1140.0,406.94 1144.0,406.16 1148.0,405.40 1152.0,404.66 1156.0,403.93 1160.0,403.21 1164.0,402.52 1168.0,401.84 1172.0,401.18 1176.0,400.55 1180.0,399.93 1184.0,399.33 1188.0,398.76 1192.0,398.21 1196.0,397.68 1200.0,397.18 1204.0,396.70 1208.0,396.25 1212.0,395.82 1216.0,395.43 1220.0,395.06 1224.0,394.72 1228.0,394.42 1232.0,394.14 1236.0,393.89 1240.0,393.68 1244.0,393.50 1248.0,393.35 1252.0,393.23 1256.0,393.15 1260.0,393.10 1264.0,393.09 1268.0,393.11 1272.0,393.16 1276.0,393.25 1280.0,393.37 1284.0,393.52 1288.0,393.71 1292.0,393.93 1296.0,394.18 1300.0,394.46 1304.0,394.77 1308.0,395.11 1312.0,395.48 1316.0,395.88 1320.0,396.31 1324.0,396.77 1328.0,397.25 1332.0,397.75 1336.0,398.29 1340.0,398.84 1344.0,399.42 1348.0,400.02 1352.0,400.64 1356.0,401.28 1360.0,401.94 1364.0,402.62 1368.0,403.32 1372.0,404.03 1376.0,404.76 1380.0,405.51 1384.0,406.27 1388.0,407.05 1392.0,407.84 1396.0,408.65 1400.0,409.47 1404.0,410.30 1408.0,411.14 1412.0,411.99 1416.0,412.86 1420.0,413.73 1424.0,414.62 1428.0,415.51 1432.0,416.41 1436.0,417.33 1440.0,418.25 1444.0,419.18 1448.0,420.11 1452.0,421.06 1456.0,422.01 1460.0,422.97 1464.0,423.93 1468.0,424.90 1472.0,425.88 1476.0,426.86 1480.0,427.85 1484.0,428.84 1488.0,429.84 1492.0,430.85 1496.0,431.85 1500.0,432.87 1504.0,433.89 1508.0,434.91 1512.0,435.93 1516.0,436.96 1520.0,438.00 1524.0,439.04 1528.0,440.08 1532.0,441.12 1536.0,442.17 1540.0,443.22 1544.0,444.28 1548.0,445.33 1552.0,446.39 1556.0,447.46 1560.0,448.52 1564.0,449.59 1568.0,450.66 1572.0,451.73 1576.0,452.81 1580.0,453.89 1584.0,454.97 1588.0,456.05 1592.0,457.13 1596.0,458.22 1600.0,459.31 1604.0,460.40 1608.0,461.49 1612.0,462.58 1616.0,463.68 1620.0,464.78 1624.0,465.88 1628.0,466.98 1632.0,468.08 1636.0,469.18 1640.0,470.29 1644.0,471.39 1648.0,472.50 1652.0,473.61 1656.0,474.72 1660.0,475.83 1664.0,476.94 1668.0,478.06 1672.0,479.17 1676.0,480.29 1680.0,481.41 1684.0,482.53 1688.0,483.65 1692.0,484.77 1696.0,485.89 1700.0,487.01 1704.0,488.13 1708.0,489.26 1712.0,490.38 1716.0,491.51 1720.0,492.64 1724.0,493.77 1728.0,494.90 1732.0,496.02 1736.0,497.16 1740.0,498.29 1744.0,499.42 1748.0,500.55 1752.0,501.68 1756.0,502.82 1760.0,503.95 1764.0,505.09 1768.0,506.23 1772.0,507.36 1776.0,508.50 1780.0,509.64 1784.0,510.78 1788.0,511.92 1792.0,513.06 1796.0,514.20" fill="none" stroke="#0000ff" stroke-width="1.4"/>
<path d="M1032.5,273.0 H1038.5 M1035.5,268.5 V277.5" stroke="#0000ff" stroke-width="1.2"/>
<path d="M1032.5,431.0 H1038.5 M1035.5,426.5 V435.5" stroke="#0000ff" stroke-width="1.2"/>
<path d="M1032.5,352.0 H1038.5 M1035.5,348.0 V356.0" stroke="#0000ff" stroke-width="1.2"/>
<path d="M1070.5,282.4 H1076.5 M1073.5,277.9 V286.9" stroke="#0000ff" stroke-width="1.2"/>
<path d="M1070.5,421.6 H1076.5 M1073.5,417.1 V426.1" stroke="#0000ff" stroke-width="1.2"/>
<path d="M1070.5,352.0 H1076.5 M1073.5,348.0 V356.0" stroke="#0000ff" stroke-width="1.2"/>
<path d="M1089.5,286.8 H1095.5 M1092.5,282.3 V291.3" stroke="#0000ff" stroke-width="1.2"/>
<path d="M1089.5,417.2 H1095.5 M1092.5,412.7 V421.7" stroke="#0000ff" stroke-width="1.2"/>
<path d="M1089.5,352.0 H1095.5 M1092.5,348.0 V356.0" stroke="#0000ff" stroke-width="1.2"/>
<path d="M1111.5,291.6 H1117.5 M1114.5,287.1 V296.1" stroke="#0000ff" stroke-width="1.2"/>
<path d="M1111.5,412.4 H1117.5 M1114.5,407.9 V416.9" stroke="#0000ff" stroke-width="1.2"/>
<path d="M1111.5,352.0 H1117.5 M1114.5,348.0 V356.0" stroke="#0000ff" stroke-width="1.2"/>
<path d="M1133.5,296.2 H1139.5 M1136.5,291.7 V300.7" stroke="#0000ff" stroke-width="1.2"/>
<path d="M1133.5,407.8 H1139.5 M1136.5,403.3 V412.3" stroke="#0000ff" stroke-width="1.2"/>
<path d="M1133.5,352.0 H1139.5 M1136.5,348.0 V356.0" stroke="#0000ff" stroke-width="1.2"/>
<path d="M1176.5,304.0 H1182.5 M1179.5,299.5 V308.5" stroke="#0000ff" stroke-width="1.2"/>
<path d="M1176.5,400.0 H1182.5 M1179.5,395.5 V404.5" stroke="#0000ff" stroke-width="1.2"/>
<path d="M1176.5,352.0 H1182.5 M1179.5,348.0 V356.0" stroke="#0000ff" stroke-width="1.2"/>
<path d="M1220.5,309.2 H1226.5 M1223.5,304.7 V313.7" stroke="#0000ff" stroke-width="1.2"/>
<path d="M1220.5,394.8 H1226.5 M1223.5,390.3 V399.3" stroke="#0000ff" stroke-width="1.2"/>
<path d="M1220.5,352.0 H1226.5 M1223.5,348.0 V356.0" stroke="#0000ff" stroke-width="1.2"/>
<path d="M1262.5,310.9 H1268.5 M1265.5,306.4 V315.4" stroke="#0000ff" stroke-width="1.2"/>
<path d="M1262.5,393.1 H1268.5 M1265.5,388.6 V397.6" stroke="#0000ff" stroke-width="1.2"/>
<path d="M1262.5,352.0 H1268.5 M1265.5,348.0 V356.0" stroke="#0000ff" stroke-width="1.2"/>
<path d="M1305.5,308.9 H1311.5 M1308.5,304.4 V313.4" stroke="#0000ff" stroke-width="1.2"/>
<path d="M1305.5,395.1 H1311.5 M1308.5,390.6 V399.6" stroke="#0000ff" stroke-width="1.2"/>
<path d="M1305.5,352.0 H1311.5 M1308.5,348.0 V356.0" stroke="#0000ff" stroke-width="1.2"/>
<path d="M1348.5,303.5 H1354.5 M1351.5,299.0 V308.0" stroke="#0000ff" stroke-width="1.2"/>
<path d="M1348.5,400.5 H1354.5 M1351.5,396.0 V405.0" stroke="#0000ff" stroke-width="1.2"/>
<path d="M1348.5,352.0 H1354.5 M1351.5,348.0 V356.0" stroke="#0000ff" stroke-width="1.2"/>
<path d="M1392.5,295.6 H1398.5 M1395.5,291.1 V300.1" stroke="#0000ff" stroke-width="1.2"/>
<path d="M1392.5,408.4 H1398.5 M1395.5,403.9 V412.9" stroke="#0000ff" stroke-width="1.2"/>
<path d="M1392.5,352.0 H1398.5 M1395.5,348.0 V356.0" stroke="#0000ff" stroke-width="1.2"/>
<path d="M1435.5,286.2 H1441.5 M1438.5,281.7 V290.7" stroke="#0000ff" stroke-width="1.2"/>
<path d="M1435.5,417.8 H1441.5 M1438.5,413.3 V422.3" stroke="#0000ff" stroke-width="1.2"/>
<path d="M1435.5,352.0 H1441.5 M1438.5,348.0 V356.0" stroke="#0000ff" stroke-width="1.2"/>
<path d="M1462.5,279.8 H1468.5 M1465.5,275.3 V284.3" stroke="#0000ff" stroke-width="1.2"/>
<path d="M1462.5,424.2 H1468.5 M1465.5,419.7 V428.7" stroke="#0000ff" stroke-width="1.2"/>
<path d="M1462.5,352.0 H1468.5 M1465.5,348.0 V356.0" stroke="#0000ff" stroke-width="1.2"/>
<path d="M1509.5,268.0 H1515.5 M1512.5,263.5 V272.5" stroke="#0000ff" stroke-width="1.2"/>
<path d="M1509.5,436.0 H1515.5 M1512.5,431.5 V440.5" stroke="#0000ff" stroke-width="1.2"/>
<path d="M1509.5,352.0 H1515.5 M1512.5,348.0 V356.0" stroke="#0000ff" stroke-width="1.2"/>
<path d="M1540.5,260.0 H1546.5 M1543.5,255.5 V264.5" stroke="#0000ff" stroke-width="1.2"/>
<path d="M1540.5,444.0 H1546.5 M1543.5,439.5 V448.5" stroke="#0000ff" stroke-width="1.2"/>
<path d="M1540.5,352.0 H1546.5 M1543.5,348.0 V356.0" stroke="#0000ff" stroke-width="1.2"/>
<path d="M1580.5,249.4 H1586.5 M1583.5,244.9 V253.9" stroke="#0000ff" stroke-width="1.2"/>
<path d="M1580.5,454.6 H1586.5 M1583.5,450.1 V459.1" stroke="#0000ff" stroke-width="1.2"/>
<path d="M1580.5,352.0 H1586.5 M1583.5,348.0 V356.0" stroke="#0000ff" stroke-width="1.2"/>
<path d="M1632.5,235.1 H1638.5 M1635.5,230.6 V239.6" stroke="#0000ff" stroke-width="1.2"/>
<path d="M1632.5,468.9 H1638.5 M1635.5,464.4 V473.4" stroke="#0000ff" stroke-width="1.2"/>
<path d="M1632.5,352.0 H1638.5 M1635.5,348.0 V356.0" stroke="#0000ff" stroke-width="1.2"/>
<path d="M1657.5,228.1 H1663.5 M1660.5,223.6 V232.6" stroke="#0000ff" stroke-width="1.2"/>
<path d="M1657.5,475.9 H1663.5 M1660.5,471.4 V480.4" stroke="#0000ff" stroke-width="1.2"/>
<path d="M1657.5,352.0 H1663.5 M1660.5,348.0 V356.0" stroke="#0000ff" stroke-width="1.2"/>
<path d="M1697.5,217.0 H1703.5 M1700.5,212.5 V221.5" stroke="#0000ff" stroke-width="1.2"/>
<path d="M1697.5,487.0 H1703.5 M1700.5,482.5 V491.5" stroke="#0000ff" stroke-width="1.2"/>
<path d="M1697.5,352.0 H1703.5 M1700.5,348.0 V356.0" stroke="#0000ff" stroke-width="1.2"/>
<path d="M1736.5,206.0 H1742.5 M1739.5,201.5 V210.5" stroke="#0000ff" stroke-width="1.2"/>
<path d="M1736.5,498.0 H1742.5 M1739.5,493.5 V502.5" stroke="#0000ff" stroke-width="1.2"/>
<path d="M1736.5,352.0 H1742.5 M1739.5,348.0 V356.0" stroke="#0000ff" stroke-width="1.2"/>
<path d="M1756.5,200.4 H1762.5 M1759.5,195.9 V204.9" stroke="#0000ff" stroke-width="1.2"/>
<path d="M1756.5,503.6 H1762.5 M1759.5,499.1 V508.1" stroke="#0000ff" stroke-width="1.2"/>
<path d="M1756.5,352.0 H1762.5 M1759.5,348.0 V356.0" stroke="#0000ff" stroke-width="1.2"/>
<path d="M1775.5,195.0 H1781.5 M1778.5,190.5 V199.5" stroke="#0000ff" stroke-width="1.2"/>
<path d="M1775.5,509.0 H1781.5 M1778.5,504.5 V513.5" stroke="#0000ff" stroke-width="1.2"/>
<path d="M1775.5,352.0 H1781.5 M1778.5,348.0 V356.0" stroke="#0000ff" stroke-width="1.2"/>
<rect x="1774.5" y="189.5" width="7" height="12" fill="none" stroke="#0000ff" stroke-width="1.2"/>
<rect x="1774.5" y="502.5" width="7" height="12" fill="none" stroke="#0000ff" stroke-width="1.2"/>
</svg>
<svg class="a" style="left:41px;top:598px" width="893" height="467" viewBox="41 598 893 467">
<defs>
<radialGradient id="pg0" cx="0.5" cy="0.5" r="0.5" fx="0.62" fy="0.5"><stop offset="0.000" stop-color="#800000" stop-opacity="0.576"/><stop offset="0.033" stop-color="#810000" stop-opacity="0.576"/><stop offset="0.067" stop-color="#870000" stop-opacity="0.576"/><stop offset="0.100" stop-color="#900000" stop-opacity="0.576"/><stop offset="0.133" stop-color="#9c0000" stop-opacity="0.576"/><stop offset="0.167" stop-color="#ac0000" stop-opacity="0.573"/><stop offset="0.200" stop-color="#c00000" stop-opacity="0.561"/><stop offset="0.233" stop-color="#d60000" stop-opacity="0.547"/><stop offset="0.267" stop-color="#ee0000" stop-opacity="0.532"/><stop offset="0.300" stop-color="#ff0b00" stop-opacity="0.515"/><stop offset="0.333" stop-color="#ff2900" stop-opacity="0.496"/><stop offset="0.367" stop-color="#ff4800" stop-opacity="0.476"/><stop offset="0.400" stop-color="#ff6900" stop-opacity="0.455"/><stop offset="0.433" stop-color="#ff8c00" stop-opacity="0.432"/><stop offset="0.467" stop-color="#ffb000" stop-opacity="0.409"/><stop offset="0.500" stop-color="#ffd400" stop-opacity="0.384"/><stop offset="0.533" stop-color="#fff900" stop-opacity="0.359"/><stop offset="0.567" stop-color="#e0ff1f" stop-opacity="0.334"/><stop offset="0.600" stop-color="#bbff44" stop-opacity="0.307"/><stop offset="0.633" stop-color="#96ff69" stop-opacity="0.281"/><stop offset="0.667" stop-color="#72ff8d" stop-opacity="0.254"/><stop offset="0.700" stop-color="#4fffb0" stop-opacity="0.228"/><stop offset="0.733" stop-color="#2cffd3" stop-opacity="0.201"/><stop offset="0.767" stop-color="#0bfff4" stop-opacity="0.174"/><stop offset="0.800" stop-color="#00eaff" stop-opacity="0.147"/><stop offset="0.833" stop-color="#00ccff" stop-opacity="0.120"/><stop offset="0.867" stop-color="#00afff" stop-opacity="0.093"/><stop offset="0.900" stop-color="#0093ff" stop-opacity="0.066"/><stop offset="0.933" stop-color="#0079ff" stop-opacity="0.025"/><stop offset="0.967" stop-color="#0061ff" stop-opacity="0.000"/><stop offset="1.000" stop-color="#004aff" stop-opacity="0.000"/></radialGradient>
<radialGradient id="pg1" cx="0.5" cy="0.5" r="0.5" fx="0.62" fy="0.5"><stop offset="0.000" stop-color="#800000" stop-opacity="0.577"/><stop offset="0.033" stop-color="#810000" stop-opacity="0.577"/><stop offset="0.067" stop-color="#870000" stop-opacity="0.577"/><stop offset="0.100" stop-color="#900000" stop-opacity="0.577"/><stop offset="0.133" stop-color="#9c0000" stop-opacity="0.577"/><stop offset="0.167" stop-color="#ac0000" stop-opacity="0.573"/><stop offset="0.200" stop-color="#c00000" stop-opacity="0.562"/><stop offset="0.233" stop-color="#d60000" stop-opacity="0.548"/><stop offset="0.267" stop-color="#ee0000" stop-opacity="0.533"/><stop offset="0.300" stop-color="#ff0b00" stop-opacity="0.516"/><stop offset="0.333" stop-color="#ff2900" stop-opacity="0.497"/><stop offset="0.367" stop-color="#ff4800" stop-opacity="0.477"/><stop offset="0.400" stop-color="#ff6900" stop-opacity="0.455"/><stop offset="0.433" stop-color="#ff8c00" stop-opacity="0.433"/><stop offset="0.467" stop-color="#ffb000" stop-opacity="0.409"/><stop offset="0.500" stop-color="#ffd400" stop-opacity="0.385"/><stop offset="0.533" stop-color="#fff900" stop-opacity="0.360"/><stop offset="0.567" stop-color="#e0ff1f" stop-opacity="0.334"/><stop offset="0.600" stop-color="#bbff44" stop-opacity="0.308"/><stop offset="0.633" stop-color="#96ff69" stop-opacity="0.281"/><stop offset="0.667" stop-color="#72ff8d" stop-opacity="0.255"/><stop offset="0.700" stop-color="#4fffb0" stop-opacity="0.228"/><stop offset="0.733" stop-color="#2cffd3" stop-opacity="0.201"/><stop offset="0.767" stop-color="#0bfff4" stop-opacity="0.174"/><stop offset="0.800" stop-color="#00eaff" stop-opacity="0.147"/><stop offset="0.833" stop-color="#00ccff" stop-opacity="0.120"/><stop offset="0.867" stop-color="#00afff" stop-opacity="0.093"/><stop offset="0.900" stop-color="#0093ff" stop-opacity="0.066"/><stop offset="0.933" stop-color="#0079ff" stop-opacity="0.025"/><stop offset="0.967" stop-color="#0061ff" stop-opacity="0.000"/><stop offset="1.000" stop-color="#004aff" stop-opacity="0.000"/></radialGradient>
<radialGradient id="pg2" cx="0.5" cy="0.5" r="0.5" fx="0.62" fy="0.5"><stop offset="0.000" stop-color="#800000" stop-opacity="0.577"/><stop offset="0.033" stop-color="#810000" stop-opacity="0.577"/><stop offset="0.067" stop-color="#870000" stop-opacity="0.577"/><stop offset="0.100" stop-color="#900000" stop-opacity="0.577"/><stop offset="0.133" stop-color="#9c0000" stop-opacity="0.577"/><stop offset="0.167" stop-color="#ac0000" stop-opacity="0.574"/><stop offset="0.200" stop-color="#c00000" stop-opacity="0.562"/><stop offset="0.233" stop-color="#d60000" stop-opacity="0.549"/><stop offset="0.267" stop-color="#ee0000" stop-opacity="0.533"/><stop offset="0.300" stop-color="#ff0b00" stop-opacity="0.516"/><stop offset="0.333" stop-color="#ff2900" stop-opacity="0.498"/><stop offset="0.367" stop-color="#ff4800" stop-opacity="0.477"/><stop offset="0.400" stop-color="#ff6900" stop-opacity="0.456"/><stop offset="0.433" stop-color="#ff8c00" stop-opacity="0.433"/><stop offset="0.467" stop-color="#ffb000" stop-opacity="0.410"/><stop offset="0.500" stop-color="#ffd400" stop-opacity="0.385"/><stop offset="0.533" stop-color="#fff900" stop-opacity="0.360"/><stop offset="0.567" stop-color="#e0ff1f" stop-opacity="0.334"/><stop offset="0.600" stop-color="#bbff44" stop-opacity="0.308"/><stop offset="0.633" stop-color="#96ff69" stop-opacity="0.282"/><stop offset="0.667" stop-color="#72ff8d" stop-opacity="0.255"/><stop offset="0.700" stop-color="#4fffb0" stop-opacity="0.228"/><stop offset="0.733" stop-color="#2cffd3" stop-opacity="0.201"/><stop offset="0.767" stop-color="#0bfff4" stop-opacity="0.174"/><stop offset="0.800" stop-color="#00eaff" stop-opacity="0.147"/><stop offset="0.833" stop-color="#00ccff" stop-opacity="0.121"/><stop offset="0.867" stop-color="#00afff" stop-opacity="0.094"/><stop offset="0.900" stop-color="#0093ff" stop-opacity="0.066"/><stop offset="0.933" stop-color="#0079ff" stop-opacity="0.025"/><stop offset="0.967" stop-color="#0061ff" stop-opacity="0.000"/><stop offset="1.000" stop-color="#004aff" stop-opacity="0.000"/></radialGradient>
<radialGradient id="pg3" cx="0.5" cy="0.5" r="0.5" fx="0.62" fy="0.5"><stop offset="0.000" stop-color="#800000" stop-opacity="0.579"/><stop offset="0.033" stop-color="#810000" stop-opacity="0.579"/><stop offset="0.067" stop-color="#870000" stop-opacity="0.579"/><stop offset="0.100" stop-color="#900000" stop-opacity="0.579"/><stop offset="0.133" stop-color="#9c0000" stop-opacity="0.579"/><stop offset="0.167" stop-color="#ac0000" stop-opacity="0.575"/><stop offset="0.200" stop-color="#c00000" stop-opacity="0.564"/><stop offset="0.233" stop-color="#d60000" stop-opacity="0.550"/><stop offset="0.267" stop-color="#ee0000" stop-opacity="0.535"/><stop offset="0.300" stop-color="#ff0b00" stop-opacity="0.517"/><stop offset="0.333" stop-color="#ff2900" stop-opacity="0.499"/><stop offset="0.367" stop-color="#ff4800" stop-opacity="0.478"/><stop offset="0.400" stop-color="#ff6900" stop-opacity="0.457"/><stop offset="0.433" stop-color="#ff8c00" stop-opacity="0.434"/><stop offset="0.467" stop-color="#ffb000" stop-opacity="0.411"/><stop offset="0.500" stop-color="#ffd400" stop-opacity="0.386"/><stop offset="0.533" stop-color="#fff900" stop-opacity="0.361"/><stop offset="0.567" stop-color="#e0ff1f" stop-opacity="0.335"/><stop offset="0.600" stop-color="#bbff44" stop-opacity="0.309"/><stop offset="0.633" stop-color="#96ff69" stop-opacity="0.282"/><stop offset="0.667" stop-color="#72ff8d" stop-opacity="0.256"/><stop offset="0.700" stop-color="#4fffb0" stop-opacity="0.229"/><stop offset="0.733" stop-color="#2cffd3" stop-opacity="0.202"/><stop offset="0.767" stop-color="#0bfff4" stop-opacity="0.175"/><stop offset="0.800" stop-color="#00eaff" stop-opacity="0.148"/><stop offset="0.833" stop-color="#00ccff" stop-opacity="0.121"/><stop offset="0.867" stop-color="#00afff" stop-opacity="0.094"/><stop offset="0.900" stop-color="#0093ff" stop-opacity="0.066"/><stop offset="0.933" stop-color="#0079ff" stop-opacity="0.025"/><stop offset="0.967" stop-color="#0061ff" stop-opacity="0.000"/><stop offset="1.000" stop-color="#004aff" stop-opacity="0.000"/></radialGradient>
<radialGradient id="pg4" cx="0.5" cy="0.5" r="0.5" fx="0.62" fy="0.5"><stop offset="0.000" stop-color="#800000" stop-opacity="0.580"/><stop offset="0.033" stop-color="#810000" stop-opacity="0.580"/><stop offset="0.067" stop-color="#870000" stop-opacity="0.580"/><stop offset="0.100" stop-color="#900000" stop-opacity="0.580"/><stop offset="0.133" stop-color="#9c0000" stop-opacity="0.580"/><stop offset="0.167" stop-color="#ac0000" stop-opacity="0.577"/><stop offset="0.200" stop-color="#c00000" stop-opacity="0.565"/><stop offset="0.233" stop-color="#d60000" stop-opacity="0.552"/><stop offset="0.267" stop-color="#ee0000" stop-opacity="0.536"/><stop offset="0.300" stop-color="#ff0b00" stop-opacity="0.519"/><stop offset="0.333" stop-color="#ff2900" stop-opacity="0.500"/><stop offset="0.367" stop-color="#ff4800" stop-opacity="0.480"/><stop offset="0.400" stop-color="#ff6900" stop-opacity="0.458"/><stop offset="0.433" stop-color="#ff8c00" stop-opacity="0.436"/><stop offset="0.467" stop-color="#ffb000" stop-opacity="0.412"/><stop offset="0.500" stop-color="#ffd400" stop-opacity="0.387"/><stop offset="0.533" stop-color="#fff900" stop-opacity="0.362"/><stop offset="0.567" stop-color="#e0ff1f" stop-opacity="0.336"/><stop offset="0.600" stop-color="#bbff44" stop-opacity="0.310"/><stop offset="0.633" stop-color="#96ff69" stop-opacity="0.283"/><stop offset="0.667" stop-color="#72ff8d" stop-opacity="0.256"/><stop offset="0.700" stop-color="#4fffb0" stop-opacity="0.229"/><stop offset="0.733" stop-color="#2cffd3" stop-opacity="0.202"/><stop offset="0.767" stop-color="#0bfff4" stop-opacity="0.175"/><stop offset="0.800" stop-color="#00eaff" stop-opacity="0.148"/><stop offset="0.833" stop-color="#00ccff" stop-opacity="0.121"/><stop offset="0.867" stop-color="#00afff" stop-opacity="0.094"/><stop offset="0.900" stop-color="#0093ff" stop-opacity="0.066"/><stop offset="0.933" stop-color="#0079ff" stop-opacity="0.025"/><stop offset="0.967" stop-color="#0061ff" stop-opacity="0.000"/><stop offset="1.000" stop-color="#004aff" stop-opacity="0.000"/></radialGradient>
<radialGradient id="pg5" cx="0.5" cy="0.5" r="0.5" fx="0.62" fy="0.5"><stop offset="0.000" stop-color="#800000" stop-opacity="0.585"/><stop offset="0.033" stop-color="#810000" stop-opacity="0.585"/><stop offset="0.067" stop-color="#870000" stop-opacity="0.585"/><stop offset="0.100" stop-color="#900000" stop-opacity="0.585"/><stop offset="0.133" stop-color="#9c0000" stop-opacity="0.585"/><stop offset="0.167" stop-color="#ac0000" stop-opacity="0.582"/><stop offset="0.200" stop-color="#c00000" stop-opacity="0.570"/><stop offset="0.233" stop-color="#d60000" stop-opacity="0.556"/><stop offset="0.267" stop-color="#ee0000" stop-opacity="0.540"/><stop offset="0.300" stop-color="#ff0b00" stop-opacity="0.523"/><stop offset="0.333" stop-color="#ff2900" stop-opacity="0.504"/><stop offset="0.367" stop-color="#ff4800" stop-opacity="0.484"/><stop offset="0.400" stop-color="#ff6900" stop-opacity="0.462"/><stop offset="0.433" stop-color="#ff8c00" stop-opacity="0.439"/><stop offset="0.467" stop-color="#ffb000" stop-opacity="0.415"/><stop offset="0.500" stop-color="#ffd400" stop-opacity="0.390"/><stop offset="0.533" stop-color="#fff900" stop-opacity="0.365"/><stop offset="0.567" stop-color="#e0ff1f" stop-opacity="0.339"/><stop offset="0.600" stop-color="#bbff44" stop-opacity="0.312"/><stop offset="0.633" stop-color="#96ff69" stop-opacity="0.285"/><stop offset="0.667" stop-color="#72ff8d" stop-opacity="0.258"/><stop offset="0.700" stop-color="#4fffb0" stop-opacity="0.231"/><stop offset="0.733" stop-color="#2cffd3" stop-opacity="0.204"/><stop offset="0.767" stop-color="#0bfff4" stop-opacity="0.177"/><stop offset="0.800" stop-color="#00eaff" stop-opacity="0.149"/><stop offset="0.833" stop-color="#00ccff" stop-opacity="0.122"/><stop offset="0.867" stop-color="#00afff" stop-opacity="0.095"/><stop offset="0.900" stop-color="#0093ff" stop-opacity="0.067"/><stop offset="0.933" stop-color="#0079ff" stop-opacity="0.025"/><stop offset="0.967" stop-color="#0061ff" stop-opacity="0.000"/><stop offset="1.000" stop-color="#004aff" stop-opacity="0.000"/></radialGradient>
<radialGradient id="pg6" cx="0.5" cy="0.5" r="0.5" fx="0.62" fy="0.5"><stop offset="0.000" stop-color="#800000" stop-opacity="0.591"/><stop offset="0.033" stop-color="#810000" stop-opacity="0.591"/><stop offset="0.067" stop-color="#870000" stop-opacity="0.591"/><stop offset="0.100" stop-color="#900000" stop-opacity="0.591"/><stop offset="0.133" stop-color="#9c0000" stop-opacity="0.591"/><stop offset="0.167" stop-color="#ac0000" stop-opacity="0.588"/><stop offset="0.200" stop-color="#c00000" stop-opacity="0.576"/><stop offset="0.233" stop-color="#d60000" stop-opacity="0.562"/><stop offset="0.267" stop-color="#ee0000" stop-opacity="0.546"/><stop offset="0.300" stop-color="#ff0b00" stop-opacity="0.529"/><stop offset="0.333" stop-color="#ff2900" stop-opacity="0.510"/><stop offset="0.367" stop-color="#ff4800" stop-opacity="0.489"/><stop offset="0.400" stop-color="#ff6900" stop-opacity="0.467"/><stop offset="0.433" stop-color="#ff8c00" stop-opacity="0.444"/><stop offset="0.467" stop-color="#ffb000" stop-opacity="0.420"/><stop offset="0.500" stop-color="#ffd400" stop-opacity="0.395"/><stop offset="0.533" stop-color="#fff900" stop-opacity="0.369"/><stop offset="0.567" stop-color="#e0ff1f" stop-opacity="0.342"/><stop offset="0.600" stop-color="#bbff44" stop-opacity="0.316"/><stop offset="0.633" stop-color="#96ff69" stop-opacity="0.288"/><stop offset="0.667" stop-color="#72ff8d" stop-opacity="0.261"/><stop offset="0.700" stop-color="#4fffb0" stop-opacity="0.234"/><stop offset="0.733" stop-color="#2cffd3" stop-opacity="0.206"/><stop offset="0.767" stop-color="#0bfff4" stop-opacity="0.179"/><stop offset="0.800" stop-color="#00eaff" stop-opacity="0.151"/><stop offset="0.833" stop-color="#00ccff" stop-opacity="0.124"/><stop offset="0.867" stop-color="#00afff" stop-opacity="0.096"/><stop offset="0.900" stop-color="#0093ff" stop-opacity="0.068"/><stop offset="0.933" stop-color="#0079ff" stop-opacity="0.025"/><stop offset="0.967" stop-color="#0061ff" stop-opacity="0.000"/><stop offset="1.000" stop-color="#004aff" stop-opacity="0.000"/></radialGradient>
<radialGradient id="pg7" cx="0.5" cy="0.5" r="0.5" fx="0.62" fy="0.5"><stop offset="0.000" stop-color="#800000" stop-opacity="0.599"/><stop offset="0.033" stop-color="#810000" stop-opacity="0.599"/><stop offset="0.067" stop-color="#870000" stop-opacity="0.599"/><stop offset="0.100" stop-color="#900000" stop-opacity="0.599"/><stop offset="0.133" stop-color="#9c0000" stop-opacity="0.599"/><stop offset="0.167" stop-color="#ac0000" stop-opacity="0.596"/><stop offset="0.200" stop-color="#c00000" stop-opacity="0.584"/><stop offset="0.233" stop-color="#d60000" stop-opacity="0.570"/><stop offset="0.267" stop-color="#ee0000" stop-opacity="0.553"/><stop offset="0.300" stop-color="#ff0b00" stop-opacity="0.536"/><stop offset="0.333" stop-color="#ff2900" stop-opacity="0.516"/><stop offset="0.367" stop-color="#ff4800" stop-opacity="0.495"/><stop offset="0.400" stop-color="#ff6900" stop-opacity="0.473"/><stop offset="0.433" stop-color="#ff8c00" stop-opacity="0.450"/><stop offset="0.467" stop-color="#ffb000" stop-opacity="0.425"/><stop offset="0.500" stop-color="#ffd400" stop-opacity="0.400"/><stop offset="0.533" stop-color="#fff900" stop-opacity="0.374"/><stop offset="0.567" stop-color="#e0ff1f" stop-opacity="0.347"/><stop offset="0.600" stop-color="#bbff44" stop-opacity="0.320"/><stop offset="0.633" stop-color="#96ff69" stop-opacity="0.292"/><stop offset="0.667" stop-color="#72ff8d" stop-opacity="0.265"/><stop offset="0.700" stop-color="#4fffb0" stop-opacity="0.237"/><stop offset="0.733" stop-color="#2cffd3" stop-opacity="0.209"/><stop offset="0.767" stop-color="#0bfff4" stop-opacity="0.181"/><stop offset="0.800" stop-color="#00eaff" stop-opacity="0.153"/><stop offset="0.833" stop-color="#00ccff" stop-opacity="0.125"/><stop offset="0.867" stop-color="#00afff" stop-opacity="0.097"/><stop offset="0.900" stop-color="#0093ff" stop-opacity="0.068"/><stop offset="0.933" stop-color="#0079ff" stop-opacity="0.026"/><stop offset="0.967" stop-color="#0061ff" stop-opacity="0.000"/><stop offset="1.000" stop-color="#004aff" stop-opacity="0.000"/></radialGradient>
<radialGradient id="pg8" cx="0.5" cy="0.5" r="0.5" fx="0.62" fy="0.5"><stop offset="0.000" stop-color="#800000" stop-opacity="0.608"/><stop offset="0.033" stop-color="#810000" stop-opacity="0.608"/><stop offset="0.067" stop-color="#870000" stop-opacity="0.608"/><stop offset="0.100" stop-color="#900000" stop-opacity="0.608"/><stop offset="0.133" stop-color="#9c0000" stop-opacity="0.608"/><stop offset="0.167" stop-color="#ac0000" stop-opacity="0.605"/><stop offset="0.200" stop-color="#c00000" stop-opacity="0.593"/><stop offset="0.233" stop-color="#d60000" stop-opacity="0.578"/><stop offset="0.267" stop-color="#ee0000" stop-opacity="0.562"/><stop offset="0.300" stop-color="#ff0b00" stop-opacity="0.544"/><stop offset="0.333" stop-color="#ff2900" stop-opacity="0.524"/><stop offset="0.367" stop-color="#ff4800" stop-opacity="0.503"/><stop offset="0.400" stop-color="#ff6900" stop-opacity="0.481"/><stop offset="0.433" stop-color="#ff8c00" stop-opacity="0.457"/><stop offset="0.467" stop-color="#ffb000" stop-opacity="0.432"/><stop offset="0.500" stop-color="#ffd400" stop-opacity="0.406"/><stop offset="0.533" stop-color="#fff900" stop-opacity="0.380"/><stop offset="0.567" stop-color="#e0ff1f" stop-opacity="0.352"/><stop offset="0.600" stop-color="#bbff44" stop-opacity="0.325"/><stop offset="0.633" stop-color="#96ff69" stop-opacity="0.297"/><stop offset="0.667" stop-color="#72ff8d" stop-opacity="0.269"/><stop offset="0.700" stop-color="#4fffb0" stop-opacity="0.240"/><stop offset="0.733" stop-color="#2cffd3" stop-opacity="0.212"/><stop offset="0.767" stop-color="#0bfff4" stop-opacity="0.184"/><stop offset="0.800" stop-color="#00eaff" stop-opacity="0.155"/><stop offset="0.833" stop-color="#00ccff" stop-opacity="0.127"/><stop offset="0.867" stop-color="#00afff" stop-opacity="0.099"/><stop offset="0.900" stop-color="#0093ff" stop-opacity="0.070"/><stop offset="0.933" stop-color="#0079ff" stop-opacity="0.026"/><stop offset="0.967" stop-color="#0061ff" stop-opacity="0.000"/><stop offset="1.000" stop-color="#004aff" stop-opacity="0.000"/></radialGradient>
<radialGradient id="pg9" cx="0.5" cy="0.5" r="0.5" fx="0.62" fy="0.5"><stop offset="0.000" stop-color="#800000" stop-opacity="0.619"/><stop offset="0.033" stop-color="#810000" stop-opacity="0.619"/><stop offset="0.067" stop-color="#870000" stop-opacity="0.619"/><stop offset="0.100" stop-color="#900000" stop-opacity="0.619"/><stop offset="0.133" stop-color="#9c0000" stop-opacity="0.619"/><stop offset="0.167" stop-color="#ac0000" stop-opacity="0.616"/><stop offset="0.200" stop-color="#c00000" stop-opacity="0.604"/><stop offset="0.233" stop-color="#d60000" stop-opacity="0.589"/><stop offset="0.267" stop-color="#ee0000" stop-opacity="0.572"/><stop offset="0.300" stop-color="#ff0b00" stop-opacity="0.554"/><stop offset="0.333" stop-color="#ff2900" stop-opacity="0.534"/><stop offset="0.367" stop-color="#ff4800" stop-opacity="0.512"/><stop offset="0.400" stop-color="#ff6900" stop-opacity="0.489"/><stop offset="0.433" stop-color="#ff8c00" stop-opacity="0.465"/><stop offset="0.467" stop-color="#ffb000" stop-opacity="0.440"/><stop offset="0.500" stop-color="#ffd400" stop-opacity="0.413"/><stop offset="0.533" stop-color="#fff900" stop-opacity="0.386"/><stop offset="0.567" stop-color="#e0ff1f" stop-opacity="0.359"/><stop offset="0.600" stop-color="#bbff44" stop-opacity="0.331"/><stop offset="0.633" stop-color="#96ff69" stop-opacity="0.302"/><stop offset="0.667" stop-color="#72ff8d" stop-opacity="0.274"/><stop offset="0.700" stop-color="#4fffb0" stop-opacity="0.245"/><stop offset="0.733" stop-color="#2cffd3" stop-opacity="0.216"/><stop offset="0.767" stop-color="#0bfff4" stop-opacity="0.187"/><stop offset="0.800" stop-color="#00eaff" stop-opacity="0.158"/><stop offset="0.833" stop-color="#00ccff" stop-opacity="0.129"/><stop offset="0.867" stop-color="#00afff" stop-opacity="0.100"/><stop offset="0.900" stop-color="#0093ff" stop-opacity="0.071"/><stop offset="0.933" stop-color="#0079ff" stop-opacity="0.026"/><stop offset="0.967" stop-color="#0061ff" stop-opacity="0.000"/><stop offset="1.000" stop-color="#004aff" stop-opacity="0.000"/></radialGradient>
<radialGradient id="pg10" cx="0.5" cy="0.5" r="0.5" fx="0.62" fy="0.5"><stop offset="0.000" stop-color="#800000" stop-opacity="0.632"/><stop offset="0.033" stop-color="#810000" stop-opacity="0.632"/><stop offset="0.067" stop-color="#870000" stop-opacity="0.632"/><stop offset="0.100" stop-color="#900000" stop-opacity="0.632"/><stop offset="0.133" stop-color="#9c0000" stop-opacity="0.632"/><stop offset="0.167" stop-color="#ac0000" stop-opacity="0.629"/><stop offset="0.200" stop-color="#c00000" stop-opacity="0.616"/><stop offset="0.233" stop-color="#d60000" stop-opacity="0.601"/><stop offset="0.267" stop-color="#ee0000" stop-opacity="0.584"/><stop offset="0.300" stop-color="#ff0b00" stop-opacity="0.565"/><stop offset="0.333" stop-color="#ff2900" stop-opacity="0.545"/><stop offset="0.367" stop-color="#ff4800" stop-opacity="0.523"/><stop offset="0.400" stop-color="#ff6900" stop-opacity="0.499"/><stop offset="0.433" stop-color="#ff8c00" stop-opacity="0.475"/><stop offset="0.467" stop-color="#ffb000" stop-opacity="0.449"/><stop offset="0.500" stop-color="#ffd400" stop-opacity="0.422"/><stop offset="0.533" stop-color="#fff900" stop-opacity="0.394"/><stop offset="0.567" stop-color="#e0ff1f" stop-opacity="0.366"/><stop offset="0.600" stop-color="#bbff44" stop-opacity="0.338"/><stop offset="0.633" stop-color="#96ff69" stop-opacity="0.309"/><stop offset="0.667" stop-color="#72ff8d" stop-opacity="0.279"/><stop offset="0.700" stop-color="#4fffb0" stop-opacity="0.250"/><stop offset="0.733" stop-color="#2cffd3" stop-opacity="0.220"/><stop offset="0.767" stop-color="#0bfff4" stop-opacity="0.191"/><stop offset="0.800" stop-color="#00eaff" stop-opacity="0.162"/><stop offset="0.833" stop-color="#00ccff" stop-opacity="0.132"/><stop offset="0.867" stop-color="#00afff" stop-opacity="0.102"/><stop offset="0.900" stop-color="#0093ff" stop-opacity="0.072"/><stop offset="0.933" stop-color="#0079ff" stop-opacity="0.027"/><stop offset="0.967" stop-color="#0061ff" stop-opacity="0.000"/><stop offset="1.000" stop-color="#004aff" stop-opacity="0.000"/></radialGradient>
<radialGradient id="pg11" cx="0.5" cy="0.5" r="0.5" fx="0.62" fy="0.5"><stop offset="0.000" stop-color="#800000" stop-opacity="0.647"/><stop offset="0.033" stop-color="#810000" stop-opacity="0.647"/><stop offset="0.067" stop-color="#870000" stop-opacity="0.647"/><stop offset="0.100" stop-color="#900000" stop-opacity="0.647"/><stop offset="0.133" stop-color="#9c0000" stop-opacity="0.647"/><stop offset="0.167" stop-color="#ac0000" stop-opacity="0.643"/><stop offset="0.200" stop-color="#c00000" stop-opacity="0.630"/><stop offset="0.233" stop-color="#d60000" stop-opacity="0.615"/><stop offset="0.267" stop-color="#ee0000" stop-opacity="0.598"/><stop offset="0.300" stop-color="#ff0b00" stop-opacity="0.578"/><stop offset="0.333" stop-color="#ff2900" stop-opacity="0.557"/><stop offset="0.367" stop-color="#ff4800" stop-opacity="0.535"/><stop offset="0.400" stop-color="#ff6900" stop-opacity="0.511"/><stop offset="0.433" stop-color="#ff8c00" stop-opacity="0.485"/><stop offset="0.467" stop-color="#ffb000" stop-opacity="0.459"/><stop offset="0.500" stop-color="#ffd400" stop-opacity="0.432"/><stop offset="0.533" stop-color="#fff900" stop-opacity="0.403"/><stop offset="0.567" stop-color="#e0ff1f" stop-opacity="0.375"/><stop offset="0.600" stop-color="#bbff44" stop-opacity="0.345"/><stop offset="0.633" stop-color="#96ff69" stop-opacity="0.316"/><stop offset="0.667" stop-color="#72ff8d" stop-opacity="0.286"/><stop offset="0.700" stop-color="#4fffb0" stop-opacity="0.256"/><stop offset="0.733" stop-color="#2cffd3" stop-opacity="0.225"/><stop offset="0.767" stop-color="#0bfff4" stop-opacity="0.195"/><stop offset="0.800" stop-color="#00eaff" stop-opacity="0.165"/><stop offset="0.833" stop-color="#00ccff" stop-opacity="0.135"/><stop offset="0.867" stop-color="#00afff" stop-opacity="0.105"/><stop offset="0.900" stop-color="#0093ff" stop-opacity="0.074"/><stop offset="0.933" stop-color="#0079ff" stop-opacity="0.028"/><stop offset="0.967" stop-color="#0061ff" stop-opacity="0.000"/><stop offset="1.000" stop-color="#004aff" stop-opacity="0.000"/></radialGradient>
<radialGradient id="pg12" cx="0.5" cy="0.5" r="0.5" fx="0.62" fy="0.5"><stop offset="0.000" stop-color="#800000" stop-opacity="0.656"/><stop offset="0.033" stop-color="#810000" stop-opacity="0.656"/><stop offset="0.067" stop-color="#870000" stop-opacity="0.656"/><stop offset="0.100" stop-color="#900000" stop-opacity="0.656"/><stop offset="0.133" stop-color="#9c0000" stop-opacity="0.656"/><stop offset="0.167" stop-color="#ac0000" stop-opacity="0.653"/><stop offset="0.200" stop-color="#c00000" stop-opacity="0.640"/><stop offset="0.233" stop-color="#d60000" stop-opacity="0.624"/><stop offset="0.267" stop-color="#ee0000" stop-opacity="0.606"/><stop offset="0.300" stop-color="#ff0b00" stop-opacity="0.587"/><stop offset="0.333" stop-color="#ff2900" stop-opacity="0.566"/><stop offset="0.367" stop-color="#ff4800" stop-opacity="0.543"/><stop offset="0.400" stop-color="#ff6900" stop-opacity="0.518"/><stop offset="0.433" stop-color="#ff8c00" stop-opacity="0.493"/><stop offset="0.467" stop-color="#ffb000" stop-opacity="0.466"/><stop offset="0.500" stop-color="#ffd400" stop-opacity="0.438"/><stop offset="0.533" stop-color="#fff900" stop-opacity="0.409"/><stop offset="0.567" stop-color="#e0ff1f" stop-opacity="0.380"/><stop offset="0.600" stop-color="#bbff44" stop-opacity="0.350"/><stop offset="0.633" stop-color="#96ff69" stop-opacity="0.320"/><stop offset="0.667" stop-color="#72ff8d" stop-opacity="0.290"/><stop offset="0.700" stop-color="#4fffb0" stop-opacity="0.259"/><stop offset="0.733" stop-color="#2cffd3" stop-opacity="0.229"/><stop offset="0.767" stop-color="#0bfff4" stop-opacity="0.198"/><stop offset="0.800" stop-color="#00eaff" stop-opacity="0.168"/><stop offset="0.833" stop-color="#00ccff" stop-opacity="0.137"/><stop offset="0.867" stop-color="#00afff" stop-opacity="0.106"/><stop offset="0.900" stop-color="#0093ff" stop-opacity="0.075"/><stop offset="0.933" stop-color="#0079ff" stop-opacity="0.028"/><stop offset="0.967" stop-color="#0061ff" stop-opacity="0.000"/><stop offset="1.000" stop-color="#004aff" stop-opacity="0.000"/></radialGradient>
<radialGradient id="pg13" cx="0.5" cy="0.5" r="0.5" fx="0.62" fy="0.5"><stop offset="0.000" stop-color="#800000" stop-opacity="0.675"/><stop offset="0.033" stop-color="#810000" stop-opacity="0.675"/><stop offset="0.067" stop-color="#870000" stop-opacity="0.675"/><stop offset="0.100" stop-color="#900000" stop-opacity="0.675"/><stop offset="0.133" stop-color="#9c0000" stop-opacity="0.675"/><stop offset="0.167" stop-color="#ac0000" stop-opacity="0.671"/><stop offset="0.200" stop-color="#c00000" stop-opacity="0.658"/><stop offset="0.233" stop-color="#d60000" stop-opacity="0.642"/><stop offset="0.267" stop-color="#ee0000" stop-opacity="0.624"/><stop offset="0.300" stop-color="#ff0b00" stop-opacity="0.604"/><stop offset="0.333" stop-color="#ff2900" stop-opacity="0.582"/><stop offset="0.367" stop-color="#ff4800" stop-opacity="0.558"/><stop offset="0.400" stop-color="#ff6900" stop-opacity="0.533"/><stop offset="0.433" stop-color="#ff8c00" stop-opacity="0.507"/><stop offset="0.467" stop-color="#ffb000" stop-opacity="0.479"/><stop offset="0.500" stop-color="#ffd400" stop-opacity="0.451"/><stop offset="0.533" stop-color="#fff900" stop-opacity="0.421"/><stop offset="0.567" stop-color="#e0ff1f" stop-opacity="0.391"/><stop offset="0.600" stop-color="#bbff44" stop-opacity="0.360"/><stop offset="0.633" stop-color="#96ff69" stop-opacity="0.329"/><stop offset="0.667" stop-color="#72ff8d" stop-opacity="0.298"/><stop offset="0.700" stop-color="#4fffb0" stop-opacity="0.267"/><stop offset="0.733" stop-color="#2cffd3" stop-opacity="0.235"/><stop offset="0.767" stop-color="#0bfff4" stop-opacity="0.204"/><stop offset="0.800" stop-color="#00eaff" stop-opacity="0.172"/><stop offset="0.833" stop-color="#00ccff" stop-opacity="0.141"/><stop offset="0.867" stop-color="#00afff" stop-opacity="0.109"/><stop offset="0.900" stop-color="#0093ff" stop-opacity="0.077"/><stop offset="0.933" stop-color="#0079ff" stop-opacity="0.029"/><stop offset="0.967" stop-color="#0061ff" stop-opacity="0.000"/><stop offset="1.000" stop-color="#004aff" stop-opacity="0.000"/></radialGradient>
<radialGradient id="pg14" cx="0.5" cy="0.5" r="0.5" fx="0.62" fy="0.5"><stop offset="0.000" stop-color="#800000" stop-opacity="0.688"/><stop offset="0.033" stop-color="#810000" stop-opacity="0.688"/><stop offset="0.067" stop-color="#870000" stop-opacity="0.688"/><stop offset="0.100" stop-color="#900000" stop-opacity="0.688"/><stop offset="0.133" stop-color="#9c0000" stop-opacity="0.688"/><stop offset="0.167" stop-color="#ac0000" stop-opacity="0.685"/><stop offset="0.200" stop-color="#c00000" stop-opacity="0.671"/><stop offset="0.233" stop-color="#d60000" stop-opacity="0.654"/><stop offset="0.267" stop-color="#ee0000" stop-opacity="0.636"/><stop offset="0.300" stop-color="#ff0b00" stop-opacity="0.615"/><stop offset="0.333" stop-color="#ff2900" stop-opacity="0.593"/><stop offset="0.367" stop-color="#ff4800" stop-opacity="0.569"/><stop offset="0.400" stop-color="#ff6900" stop-opacity="0.544"/><stop offset="0.433" stop-color="#ff8c00" stop-opacity="0.517"/><stop offset="0.467" stop-color="#ffb000" stop-opacity="0.489"/><stop offset="0.500" stop-color="#ffd400" stop-opacity="0.459"/><stop offset="0.533" stop-color="#fff900" stop-opacity="0.429"/><stop offset="0.567" stop-color="#e0ff1f" stop-opacity="0.399"/><stop offset="0.600" stop-color="#bbff44" stop-opacity="0.367"/><stop offset="0.633" stop-color="#96ff69" stop-opacity="0.336"/><stop offset="0.667" stop-color="#72ff8d" stop-opacity="0.304"/><stop offset="0.700" stop-color="#4fffb0" stop-opacity="0.272"/><stop offset="0.733" stop-color="#2cffd3" stop-opacity="0.240"/><stop offset="0.767" stop-color="#0bfff4" stop-opacity="0.208"/><stop offset="0.800" stop-color="#00eaff" stop-opacity="0.176"/><stop offset="0.833" stop-color="#00ccff" stop-opacity="0.144"/><stop offset="0.867" stop-color="#00afff" stop-opacity="0.112"/><stop offset="0.900" stop-color="#0093ff" stop-opacity="0.079"/><stop offset="0.933" stop-color="#0079ff" stop-opacity="0.029"/><stop offset="0.967" stop-color="#0061ff" stop-opacity="0.000"/><stop offset="1.000" stop-color="#004aff" stop-opacity="0.000"/></radialGradient>
<radialGradient id="pg15" cx="0.5" cy="0.5" r="0.5" fx="0.62" fy="0.5"><stop offset="0.000" stop-color="#800000" stop-opacity="0.706"/><stop offset="0.033" stop-color="#810000" stop-opacity="0.706"/><stop offset="0.067" stop-color="#870000" stop-opacity="0.706"/><stop offset="0.100" stop-color="#900000" stop-opacity="0.706"/><stop offset="0.133" stop-color="#9c0000" stop-opacity="0.706"/><stop offset="0.167" stop-color="#ac0000" stop-opacity="0.703"/><stop offset="0.200" stop-color="#c00000" stop-opacity="0.688"/><stop offset="0.233" stop-color="#d60000" stop-opacity="0.672"/><stop offset="0.267" stop-color="#ee0000" stop-opacity="0.653"/><stop offset="0.300" stop-color="#ff0b00" stop-opacity="0.632"/><stop offset="0.333" stop-color="#ff2900" stop-opacity="0.609"/><stop offset="0.367" stop-color="#ff4800" stop-opacity="0.584"/><stop offset="0.400" stop-color="#ff6900" stop-opacity="0.558"/><stop offset="0.433" stop-color="#ff8c00" stop-opacity="0.530"/><stop offset="0.467" stop-color="#ffb000" stop-opacity="0.501"/><stop offset="0.500" stop-color="#ffd400" stop-opacity="0.471"/><stop offset="0.533" stop-color="#fff900" stop-opacity="0.441"/><stop offset="0.567" stop-color="#e0ff1f" stop-opacity="0.409"/><stop offset="0.600" stop-color="#bbff44" stop-opacity="0.377"/><stop offset="0.633" stop-color="#96ff69" stop-opacity="0.345"/><stop offset="0.667" stop-color="#72ff8d" stop-opacity="0.312"/><stop offset="0.700" stop-color="#4fffb0" stop-opacity="0.279"/><stop offset="0.733" stop-color="#2cffd3" stop-opacity="0.246"/><stop offset="0.767" stop-color="#0bfff4" stop-opacity="0.213"/><stop offset="0.800" stop-color="#00eaff" stop-opacity="0.180"/><stop offset="0.833" stop-color="#00ccff" stop-opacity="0.148"/><stop offset="0.867" stop-color="#00afff" stop-opacity="0.114"/><stop offset="0.900" stop-color="#0093ff" stop-opacity="0.081"/><stop offset="0.933" stop-color="#0079ff" stop-opacity="0.030"/><stop offset="0.967" stop-color="#0061ff" stop-opacity="0.000"/><stop offset="1.000" stop-color="#004aff" stop-opacity="0.000"/></radialGradient>
<radialGradient id="pg16" cx="0.5" cy="0.5" r="0.5" fx="0.62" fy="0.5"><stop offset="0.000" stop-color="#800000" stop-opacity="0.733"/><stop offset="0.033" stop-color="#810000" stop-opacity="0.733"/><stop offset="0.067" stop-color="#870000" stop-opacity="0.733"/><stop offset="0.100" stop-color="#900000" stop-opacity="0.733"/><stop offset="0.133" stop-color="#9c0000" stop-opacity="0.733"/><stop offset="0.167" stop-color="#ac0000" stop-opacity="0.729"/><stop offset="0.200" stop-color="#c00000" stop-opacity="0.714"/><stop offset="0.233" stop-color="#d60000" stop-opacity="0.697"/><stop offset="0.267" stop-color="#ee0000" stop-opacity="0.677"/><stop offset="0.300" stop-color="#ff0b00" stop-opacity="0.655"/><stop offset="0.333" stop-color="#ff2900" stop-opacity="0.631"/><stop offset="0.367" stop-color="#ff4800" stop-opacity="0.606"/><stop offset="0.400" stop-color="#ff6900" stop-opacity="0.579"/><stop offset="0.433" stop-color="#ff8c00" stop-opacity="0.550"/><stop offset="0.467" stop-color="#ffb000" stop-opacity="0.520"/><stop offset="0.500" stop-color="#ffd400" stop-opacity="0.489"/><stop offset="0.533" stop-color="#fff900" stop-opacity="0.457"/><stop offset="0.567" stop-color="#e0ff1f" stop-opacity="0.424"/><stop offset="0.600" stop-color="#bbff44" stop-opacity="0.391"/><stop offset="0.633" stop-color="#96ff69" stop-opacity="0.357"/><stop offset="0.667" stop-color="#72ff8d" stop-opacity="0.324"/><stop offset="0.700" stop-color="#4fffb0" stop-opacity="0.290"/><stop offset="0.733" stop-color="#2cffd3" stop-opacity="0.255"/><stop offset="0.767" stop-color="#0bfff4" stop-opacity="0.221"/><stop offset="0.800" stop-color="#00eaff" stop-opacity="0.187"/><stop offset="0.833" stop-color="#00ccff" stop-opacity="0.153"/><stop offset="0.867" stop-color="#00afff" stop-opacity="0.119"/><stop offset="0.900" stop-color="#0093ff" stop-opacity="0.084"/><stop offset="0.933" stop-color="#0079ff" stop-opacity="0.031"/><stop offset="0.967" stop-color="#0061ff" stop-opacity="0.000"/><stop offset="1.000" stop-color="#004aff" stop-opacity="0.000"/></radialGradient>
<radialGradient id="pg17" cx="0.5" cy="0.5" r="0.5" fx="0.62" fy="0.5"><stop offset="0.000" stop-color="#800000" stop-opacity="0.746"/><stop offset="0.033" stop-color="#810000" stop-opacity="0.746"/><stop offset="0.067" stop-color="#870000" stop-opacity="0.746"/><stop offset="0.100" stop-color="#900000" stop-opacity="0.746"/><stop offset="0.133" stop-color="#9c0000" stop-opacity="0.746"/><stop offset="0.167" stop-color="#ac0000" stop-opacity="0.742"/><stop offset="0.200" stop-color="#c00000" stop-opacity="0.727"/><stop offset="0.233" stop-color="#d60000" stop-opacity="0.709"/><stop offset="0.267" stop-color="#ee0000" stop-opacity="0.689"/><stop offset="0.300" stop-color="#ff0b00" stop-opacity="0.667"/><stop offset="0.333" stop-color="#ff2900" stop-opacity="0.643"/><stop offset="0.367" stop-color="#ff4800" stop-opacity="0.617"/><stop offset="0.400" stop-color="#ff6900" stop-opacity="0.589"/><stop offset="0.433" stop-color="#ff8c00" stop-opacity="0.560"/><stop offset="0.467" stop-color="#ffb000" stop-opacity="0.530"/><stop offset="0.500" stop-color="#ffd400" stop-opacity="0.498"/><stop offset="0.533" stop-color="#fff900" stop-opacity="0.465"/><stop offset="0.567" stop-color="#e0ff1f" stop-opacity="0.432"/><stop offset="0.600" stop-color="#bbff44" stop-opacity="0.398"/><stop offset="0.633" stop-color="#96ff69" stop-opacity="0.364"/><stop offset="0.667" stop-color="#72ff8d" stop-opacity="0.329"/><stop offset="0.700" stop-color="#4fffb0" stop-opacity="0.295"/><stop offset="0.733" stop-color="#2cffd3" stop-opacity="0.260"/><stop offset="0.767" stop-color="#0bfff4" stop-opacity="0.225"/><stop offset="0.800" stop-color="#00eaff" stop-opacity="0.191"/><stop offset="0.833" stop-color="#00ccff" stop-opacity="0.156"/><stop offset="0.867" stop-color="#00afff" stop-opacity="0.121"/><stop offset="0.900" stop-color="#0093ff" stop-opacity="0.085"/><stop offset="0.933" stop-color="#0079ff" stop-opacity="0.032"/><stop offset="0.967" stop-color="#0061ff" stop-opacity="0.000"/><stop offset="1.000" stop-color="#004aff" stop-opacity="0.000"/></radialGradient>
<radialGradient id="pg18" cx="0.5" cy="0.5" r="0.5" fx="0.62" fy="0.5"><stop offset="0.000" stop-color="#800000" stop-opacity="0.769"/><stop offset="0.033" stop-color="#810000" stop-opacity="0.769"/><stop offset="0.067" stop-color="#870000" stop-opacity="0.769"/><stop offset="0.100" stop-color="#900000" stop-opacity="0.769"/><stop offset="0.133" stop-color="#9c0000" stop-opacity="0.769"/><stop offset="0.167" stop-color="#ac0000" stop-opacity="0.764"/><stop offset="0.200" stop-color="#c00000" stop-opacity="0.749"/><stop offset="0.233" stop-color="#d60000" stop-opacity="0.731"/><stop offset="0.267" stop-color="#ee0000" stop-opacity="0.710"/><stop offset="0.300" stop-color="#ff0b00" stop-opacity="0.687"/><stop offset="0.333" stop-color="#ff2900" stop-opacity="0.662"/><stop offset="0.367" stop-color="#ff4800" stop-opacity="0.635"/><stop offset="0.400" stop-color="#ff6900" stop-opacity="0.607"/><stop offset="0.433" stop-color="#ff8c00" stop-opacity="0.577"/><stop offset="0.467" stop-color="#ffb000" stop-opacity="0.545"/><stop offset="0.500" stop-color="#ffd400" stop-opacity="0.513"/><stop offset="0.533" stop-color="#fff900" stop-opacity="0.479"/><stop offset="0.567" stop-color="#e0ff1f" stop-opacity="0.445"/><stop offset="0.600" stop-color="#bbff44" stop-opacity="0.410"/><stop offset="0.633" stop-color="#96ff69" stop-opacity="0.375"/><stop offset="0.667" stop-color="#72ff8d" stop-opacity="0.339"/><stop offset="0.700" stop-color="#4fffb0" stop-opacity="0.304"/><stop offset="0.733" stop-color="#2cffd3" stop-opacity="0.268"/><stop offset="0.767" stop-color="#0bfff4" stop-opacity="0.232"/><stop offset="0.800" stop-color="#00eaff" stop-opacity="0.196"/><stop offset="0.833" stop-color="#00ccff" stop-opacity="0.161"/><stop offset="0.867" stop-color="#00afff" stop-opacity="0.125"/><stop offset="0.900" stop-color="#0093ff" stop-opacity="0.088"/><stop offset="0.933" stop-color="#0079ff" stop-opacity="0.033"/><stop offset="0.967" stop-color="#0061ff" stop-opacity="0.000"/><stop offset="1.000" stop-color="#004aff" stop-opacity="0.000"/></radialGradient>
<radialGradient id="pg19" cx="0.5" cy="0.5" r="0.5" fx="0.62" fy="0.5"><stop offset="0.000" stop-color="#800000" stop-opacity="0.792"/><stop offset="0.033" stop-color="#810000" stop-opacity="0.792"/><stop offset="0.067" stop-color="#870000" stop-opacity="0.792"/><stop offset="0.100" stop-color="#900000" stop-opacity="0.792"/><stop offset="0.133" stop-color="#9c0000" stop-opacity="0.792"/><stop offset="0.167" stop-color="#ac0000" stop-opacity="0.787"/><stop offset="0.200" stop-color="#c00000" stop-opacity="0.771"/><stop offset="0.233" stop-color="#d60000" stop-opacity="0.753"/><stop offset="0.267" stop-color="#ee0000" stop-opacity="0.731"/><stop offset="0.300" stop-color="#ff0b00" stop-opacity="0.708"/><stop offset="0.333" stop-color="#ff2900" stop-opacity="0.682"/><stop offset="0.367" stop-color="#ff4800" stop-opacity="0.655"/><stop offset="0.400" stop-color="#ff6900" stop-opacity="0.625"/><stop offset="0.433" stop-color="#ff8c00" stop-opacity="0.594"/><stop offset="0.467" stop-color="#ffb000" stop-opacity="0.562"/><stop offset="0.500" stop-color="#ffd400" stop-opacity="0.528"/><stop offset="0.533" stop-color="#fff900" stop-opacity="0.494"/><stop offset="0.567" stop-color="#e0ff1f" stop-opacity="0.459"/><stop offset="0.600" stop-color="#bbff44" stop-opacity="0.423"/><stop offset="0.633" stop-color="#96ff69" stop-opacity="0.386"/><stop offset="0.667" stop-color="#72ff8d" stop-opacity="0.350"/><stop offset="0.700" stop-color="#4fffb0" stop-opacity="0.313"/><stop offset="0.733" stop-color="#2cffd3" stop-opacity="0.276"/><stop offset="0.767" stop-color="#0bfff4" stop-opacity="0.239"/><stop offset="0.800" stop-color="#00eaff" stop-opacity="0.202"/><stop offset="0.833" stop-color="#00ccff" stop-opacity="0.165"/><stop offset="0.867" stop-color="#00afff" stop-opacity="0.128"/><stop offset="0.900" stop-color="#0093ff" stop-opacity="0.090"/><stop offset="0.933" stop-color="#0079ff" stop-opacity="0.034"/><stop offset="0.967" stop-color="#0061ff" stop-opacity="0.000"/><stop offset="1.000" stop-color="#004aff" stop-opacity="0.000"/></radialGradient>
<radialGradient id="pg20" cx="0.5" cy="0.5" r="0.5" fx="0.62" fy="0.5"><stop offset="0.000" stop-color="#800000" stop-opacity="0.804"/><stop offset="0.033" stop-color="#810000" stop-opacity="0.804"/><stop offset="0.067" stop-color="#870000" stop-opacity="0.804"/><stop offset="0.100" stop-color="#900000" stop-opacity="0.804"/><stop offset="0.133" stop-color="#9c0000" stop-opacity="0.804"/><stop offset="0.167" stop-color="#ac0000" stop-opacity="0.800"/><stop offset="0.200" stop-color="#c00000" stop-opacity="0.783"/><stop offset="0.233" stop-color="#d60000" stop-opacity="0.764"/><stop offset="0.267" stop-color="#ee0000" stop-opacity="0.743"/><stop offset="0.300" stop-color="#ff0b00" stop-opacity="0.719"/><stop offset="0.333" stop-color="#ff2900" stop-opacity="0.693"/><stop offset="0.367" stop-color="#ff4800" stop-opacity="0.665"/><stop offset="0.400" stop-color="#ff6900" stop-opacity="0.635"/><stop offset="0.433" stop-color="#ff8c00" stop-opacity="0.603"/><stop offset="0.467" stop-color="#ffb000" stop-opacity="0.571"/><stop offset="0.500" stop-color="#ffd400" stop-opacity="0.536"/><stop offset="0.533" stop-color="#fff900" stop-opacity="0.501"/><stop offset="0.567" stop-color="#e0ff1f" stop-opacity="0.466"/><stop offset="0.600" stop-color="#bbff44" stop-opacity="0.429"/><stop offset="0.633" stop-color="#96ff69" stop-opacity="0.392"/><stop offset="0.667" stop-color="#72ff8d" stop-opacity="0.355"/><stop offset="0.700" stop-color="#4fffb0" stop-opacity="0.318"/><stop offset="0.733" stop-color="#2cffd3" stop-opacity="0.280"/><stop offset="0.767" stop-color="#0bfff4" stop-opacity="0.243"/><stop offset="0.800" stop-color="#00eaff" stop-opacity="0.205"/><stop offset="0.833" stop-color="#00ccff" stop-opacity="0.168"/><stop offset="0.867" stop-color="#00afff" stop-opacity="0.130"/><stop offset="0.900" stop-color="#0093ff" stop-opacity="0.092"/><stop offset="0.933" stop-color="#0079ff" stop-opacity="0.034"/><stop offset="0.967" stop-color="#0061ff" stop-opacity="0.000"/><stop offset="1.000" stop-color="#004aff" stop-opacity="0.000"/></radialGradient>
<radialGradient id="pg21" cx="0.5" cy="0.5" r="0.5" fx="0.5" fy="0.5"><stop offset="0.000" stop-color="#800000" stop-opacity="1.000"/><stop offset="0.033" stop-color="#810000" stop-opacity="0.999"/><stop offset="0.067" stop-color="#870000" stop-opacity="0.997"/><stop offset="0.100" stop-color="#900000" stop-opacity="0.993"/><stop offset="0.133" stop-color="#9c0000" stop-opacity="0.987"/><stop offset="0.167" stop-color="#ac0000" stop-opacity="0.980"/><stop offset="0.200" stop-color="#c00000" stop-opacity="0.972"/><stop offset="0.233" stop-color="#d60000" stop-opacity="0.962"/><stop offset="0.267" stop-color="#ee0000" stop-opacity="0.951"/><stop offset="0.300" stop-color="#ff0b00" stop-opacity="0.939"/><stop offset="0.333" stop-color="#ff2900" stop-opacity="0.926"/><stop offset="0.367" stop-color="#ff4800" stop-opacity="0.912"/><stop offset="0.400" stop-color="#ff6900" stop-opacity="0.897"/><stop offset="0.433" stop-color="#ff8c00" stop-opacity="0.882"/><stop offset="0.467" stop-color="#ffb000" stop-opacity="0.866"/><stop offset="0.500" stop-color="#ffd400" stop-opacity="0.850"/><stop offset="0.533" stop-color="#fff900" stop-opacity="0.834"/><stop offset="0.567" stop-color="#e0ff1f" stop-opacity="0.817"/><stop offset="0.600" stop-color="#bbff44" stop-opacity="0.801"/><stop offset="0.633" stop-color="#96ff69" stop-opacity="0.785"/><stop offset="0.667" stop-color="#72ff8d" stop-opacity="0.769"/><stop offset="0.700" stop-color="#4fffb0" stop-opacity="0.753"/><stop offset="0.733" stop-color="#2cffd3" stop-opacity="0.738"/><stop offset="0.767" stop-color="#0bfff4" stop-opacity="0.724"/><stop offset="0.800" stop-color="#00eaff" stop-opacity="0.710"/><stop offset="0.833" stop-color="#00ccff" stop-opacity="0.696"/><stop offset="0.867" stop-color="#00afff" stop-opacity="0.683"/><stop offset="0.900" stop-color="#0093ff" stop-opacity="0.671"/><stop offset="0.933" stop-color="#0079ff" stop-opacity="0.440"/><stop offset="0.967" stop-color="#0061ff" stop-opacity="0.216"/><stop offset="1.000" stop-color="#004aff" stop-opacity="0.000"/></radialGradient>
<radialGradient id="pgL" cx="0.5" cy="0.5" r="0.5" fx="0.62" fy="0.5"><stop offset="0.000" stop-color="#800000" stop-opacity="1.000"/><stop offset="0.033" stop-color="#810000" stop-opacity="0.999"/><stop offset="0.067" stop-color="#870000" stop-opacity="0.997"/><stop offset="0.100" stop-color="#900000" stop-opacity="0.993"/><stop offset="0.133" stop-color="#9c0000" stop-opacity="0.987"/><stop offset="0.167" stop-color="#ac0000" stop-opacity="0.980"/><stop offset="0.200" stop-color="#c00000" stop-opacity="0.972"/><stop offset="0.233" stop-color="#d60000" stop-opacity="0.962"/><stop offset="0.267" stop-color="#ee0000" stop-opacity="0.951"/><stop offset="0.300" stop-color="#ff0b00" stop-opacity="0.939"/><stop offset="0.333" stop-color="#ff2900" stop-opacity="0.926"/><stop offset="0.367" stop-color="#ff4800" stop-opacity="0.912"/><stop offset="0.400" stop-color="#ff6900" stop-opacity="0.897"/><stop offset="0.433" stop-color="#ff8c00" stop-opacity="0.882"/><stop offset="0.467" stop-color="#ffb000" stop-opacity="0.866"/><stop offset="0.500" stop-color="#ffd400" stop-opacity="0.850"/><stop offset="0.533" stop-color="#fff900" stop-opacity="0.834"/><stop offset="0.567" stop-color="#e0ff1f" stop-opacity="0.817"/><stop offset="0.600" stop-color="#bbff44" stop-opacity="0.801"/><stop offset="0.633" stop-color="#96ff69" stop-opacity="0.785"/><stop offset="0.667" stop-color="#72ff8d" stop-opacity="0.769"/><stop offset="0.700" stop-color="#4fffb0" stop-opacity="0.753"/><stop offset="0.733" stop-color="#2cffd3" stop-opacity="0.738"/><stop offset="0.767" stop-color="#0bfff4" stop-opacity="0.724"/><stop offset="0.800" stop-color="#00eaff" stop-opacity="0.710"/><stop offset="0.833" stop-color="#00ccff" stop-opacity="0.696"/><stop offset="0.867" stop-color="#00afff" stop-opacity="0.683"/><stop offset="0.900" stop-color="#0093ff" stop-opacity="0.671"/><stop offset="0.933" stop-color="#0079ff" stop-opacity="0.440"/><stop offset="0.967" stop-color="#0061ff" stop-opacity="0.216"/><stop offset="1.000" stop-color="#004aff" stop-opacity="0.000"/></radialGradient>
<radialGradient id="core0" cx="0.5" cy="0.5" r="0.5"><stop offset="0.000" stop-color="#800000" stop-opacity="0.500"/><stop offset="0.030" stop-color="#810000" stop-opacity="0.498"/><stop offset="0.060" stop-color="#850000" stop-opacity="0.491"/><stop offset="0.090" stop-color="#8d0000" stop-opacity="0.481"/><stop offset="0.120" stop-color="#970000" stop-opacity="0.466"/><stop offset="0.150" stop-color="#a40000" stop-opacity="0.447"/><stop offset="0.180" stop-color="#b40000" stop-opacity="0.423"/><stop offset="0.210" stop-color="#c60000" stop-opacity="0.394"/><stop offset="0.240" stop-color="#da0000" stop-opacity="0.361"/><stop offset="0.270" stop-color="#f10000" stop-opacity="0.323"/><stop offset="0.300" stop-color="#ff0b00" stop-opacity="0.279"/><stop offset="0.330" stop-color="#ff2500" stop-opacity="0.228"/><stop offset="0.360" stop-color="#ff4200" stop-opacity="0.168"/><stop offset="0.390" stop-color="#ff5f00" stop-opacity="0.093"/><stop offset="0.420" stop-color="#ff7e00" stop-opacity="0.000"/><stop offset="0.450" stop-color="#ff9e00" stop-opacity="0.000"/><stop offset="0.480" stop-color="#ffbe00" stop-opacity="0.000"/><stop offset="0.510" stop-color="#ffdf00" stop-opacity="0.000"/><stop offset="0.540" stop-color="#fdff02" stop-opacity="0.000"/><stop offset="0.570" stop-color="#dcff23" stop-opacity="0.000"/><stop offset="0.600" stop-color="#bbff44" stop-opacity="0.000"/><stop offset="1" stop-color="#000" stop-opacity="0"/></radialGradient>
<radialGradient id="core1" cx="0.5" cy="0.5" r="0.5"><stop offset="0.000" stop-color="#800000" stop-opacity="0.500"/><stop offset="0.030" stop-color="#810000" stop-opacity="0.498"/><stop offset="0.060" stop-color="#850000" stop-opacity="0.491"/><stop offset="0.090" stop-color="#8d0000" stop-opacity="0.481"/><stop offset="0.120" stop-color="#970000" stop-opacity="0.466"/><stop offset="0.150" stop-color="#a40000" stop-opacity="0.446"/><stop offset="0.180" stop-color="#b40000" stop-opacity="0.423"/><stop offset="0.210" stop-color="#c60000" stop-opacity="0.394"/><stop offset="0.240" stop-color="#da0000" stop-opacity="0.361"/><stop offset="0.270" stop-color="#f10000" stop-opacity="0.323"/><stop offset="0.300" stop-color="#ff0b00" stop-opacity="0.279"/><stop offset="0.330" stop-color="#ff2500" stop-opacity="0.228"/><stop offset="0.360" stop-color="#ff4200" stop-opacity="0.168"/><stop offset="0.390" stop-color="#ff5f00" stop-opacity="0.093"/><stop offset="0.420" stop-color="#ff7e00" stop-opacity="0.000"/><stop offset="0.450" stop-color="#ff9e00" stop-opacity="0.000"/><stop offset="0.480" stop-color="#ffbe00" stop-opacity="0.000"/><stop offset="0.510" stop-color="#ffdf00" stop-opacity="0.000"/><stop offset="0.540" stop-color="#fdff02" stop-opacity="0.000"/><stop offset="0.570" stop-color="#dcff23" stop-opacity="0.000"/><stop offset="0.600" stop-color="#bbff44" stop-opacity="0.000"/><stop offset="1" stop-color="#000" stop-opacity="0"/></radialGradient>
<radialGradient id="core2" cx="0.5" cy="0.5" r="0.5"><stop offset="0.000" stop-color="#800000" stop-opacity="0.499"/><stop offset="0.030" stop-color="#810000" stop-opacity="0.497"/><stop offset="0.060" stop-color="#850000" stop-opacity="0.491"/><stop offset="0.090" stop-color="#8d0000" stop-opacity="0.480"/><stop offset="0.120" stop-color="#970000" stop-opacity="0.465"/><stop offset="0.150" stop-color="#a40000" stop-opacity="0.446"/><stop offset="0.180" stop-color="#b40000" stop-opacity="0.422"/><stop offset="0.210" stop-color="#c60000" stop-opacity="0.394"/><stop offset="0.240" stop-color="#da0000" stop-opacity="0.361"/><stop offset="0.270" stop-color="#f10000" stop-opacity="0.323"/><stop offset="0.300" stop-color="#ff0b00" stop-opacity="0.279"/><stop offset="0.330" stop-color="#ff2500" stop-opacity="0.228"/><stop offset="0.360" stop-color="#ff4200" stop-opacity="0.168"/><stop offset="0.390" stop-color="#ff5f00" stop-opacity="0.093"/><stop offset="0.420" stop-color="#ff7e00" stop-opacity="0.000"/><stop offset="0.450" stop-color="#ff9e00" stop-opacity="0.000"/><stop offset="0.480" stop-color="#ffbe00" stop-opacity="0.000"/><stop offset="0.510" stop-color="#ffdf00" stop-opacity="0.000"/><stop offset="0.540" stop-color="#fdff02" stop-opacity="0.000"/><stop offset="0.570" stop-color="#dcff23" stop-opacity="0.000"/><stop offset="0.600" stop-color="#bbff44" stop-opacity="0.000"/><stop offset="1" stop-color="#000" stop-opacity="0"/></radialGradient>
<radialGradient id="core3" cx="0.5" cy="0.5" r="0.5"><stop offset="0.000" stop-color="#800000" stop-opacity="0.498"/><stop offset="0.030" stop-color="#810000" stop-opacity="0.496"/><stop offset="0.060" stop-color="#850000" stop-opacity="0.490"/><stop offset="0.090" stop-color="#8d0000" stop-opacity="0.479"/><stop offset="0.120" stop-color="#970000" stop-opacity="0.464"/><stop offset="0.150" stop-color="#a40000" stop-opacity="0.445"/><stop offset="0.180" stop-color="#b40000" stop-opacity="0.421"/><stop offset="0.210" stop-color="#c60000" stop-opacity="0.393"/><stop offset="0.240" stop-color="#da0000" stop-opacity="0.360"/><stop offset="0.270" stop-color="#f10000" stop-opacity="0.322"/><stop offset="0.300" stop-color="#ff0b00" stop-opacity="0.278"/><stop offset="0.330" stop-color="#ff2500" stop-opacity="0.227"/><stop offset="0.360" stop-color="#ff4200" stop-opacity="0.168"/><stop offset="0.390" stop-color="#ff5f00" stop-opacity="0.092"/><stop offset="0.420" stop-color="#ff7e00" stop-opacity="0.000"/><stop offset="0.450" stop-color="#ff9e00" stop-opacity="0.000"/><stop offset="0.480" stop-color="#ffbe00" stop-opacity="0.000"/><stop offset="0.510" stop-color="#ffdf00" stop-opacity="0.000"/><stop offset="0.540" stop-color="#fdff02" stop-opacity="0.000"/><stop offset="0.570" stop-color="#dcff23" stop-opacity="0.000"/><stop offset="0.600" stop-color="#bbff44" stop-opacity="0.000"/><stop offset="1" stop-color="#000" stop-opacity="0"/></radialGradient>
<radialGradient id="core4" cx="0.5" cy="0.5" r="0.5"><stop offset="0.000" stop-color="#800000" stop-opacity="0.497"/><stop offset="0.030" stop-color="#810000" stop-opacity="0.494"/><stop offset="0.060" stop-color="#850000" stop-opacity="0.488"/><stop offset="0.090" stop-color="#8d0000" stop-opacity="0.478"/><stop offset="0.120" stop-color="#970000" stop-opacity="0.463"/><stop offset="0.150" stop-color="#a40000" stop-opacity="0.443"/><stop offset="0.180" stop-color="#b40000" stop-opacity="0.420"/><stop offset="0.210" stop-color="#c60000" stop-opacity="0.392"/><stop offset="0.240" stop-color="#da0000" stop-opacity="0.359"/><stop offset="0.270" stop-color="#f10000" stop-opacity="0.321"/><stop offset="0.300" stop-color="#ff0b00" stop-opacity="0.277"/><stop offset="0.330" stop-color="#ff2500" stop-opacity="0.227"/><stop offset="0.360" stop-color="#ff4200" stop-opacity="0.167"/><stop offset="0.390" stop-color="#ff5f00" stop-opacity="0.092"/><stop offset="0.420" stop-color="#ff7e00" stop-opacity="0.000"/><stop offset="0.450" stop-color="#ff9e00" stop-opacity="0.000"/><stop offset="0.480" stop-color="#ffbe00" stop-opacity="0.000"/><stop offset="0.510" stop-color="#ffdf00" stop-opacity="0.000"/><stop offset="0.540" stop-color="#fdff02" stop-opacity="0.000"/><stop offset="0.570" stop-color="#dcff23" stop-opacity="0.000"/><stop offset="0.600" stop-color="#bbff44" stop-opacity="0.000"/><stop offset="1" stop-color="#000" stop-opacity="0"/></radialGradient>
<radialGradient id="core5" cx="0.5" cy="0.5" r="0.5"><stop offset="0.000" stop-color="#800000" stop-opacity="0.492"/><stop offset="0.030" stop-color="#810000" stop-opacity="0.490"/><stop offset="0.060" stop-color="#850000" stop-opacity="0.483"/><stop offset="0.090" stop-color="#8d0000" stop-opacity="0.473"/><stop offset="0.120" stop-color="#970000" stop-opacity="0.458"/><stop offset="0.150" stop-color="#a40000" stop-opacity="0.439"/><stop offset="0.180" stop-color="#b40000" stop-opacity="0.416"/><stop offset="0.210" stop-color="#c60000" stop-opacity="0.388"/><stop offset="0.240" stop-color="#da0000" stop-opacity="0.355"/><stop offset="0.270" stop-color="#f10000" stop-opacity="0.318"/><stop offset="0.300" stop-color="#ff0b00" stop-opacity="0.274"/><stop offset="0.330" stop-color="#ff2500" stop-opacity="0.224"/><stop offset="0.360" stop-color="#ff4200" stop-opacity="0.165"/><stop offset="0.390" stop-color="#ff5f00" stop-opacity="0.091"/><stop offset="0.420" stop-color="#ff7e00" stop-opacity="0.000"/><stop offset="0.450" stop-color="#ff9e00" stop-opacity="0.000"/><stop offset="0.480" stop-color="#ffbe00" stop-opacity="0.000"/><stop offset="0.510" stop-color="#ffdf00" stop-opacity="0.000"/><stop offset="0.540" stop-color="#fdff02" stop-opacity="0.000"/><stop offset="0.570" stop-color="#dcff23" stop-opacity="0.000"/><stop offset="0.600" stop-color="#bbff44" stop-opacity="0.000"/><stop offset="1" stop-color="#000" stop-opacity="0"/></radialGradient>
<radialGradient id="core6" cx="0.5" cy="0.5" r="0.5"><stop offset="0.000" stop-color="#800000" stop-opacity="0.484"/><stop offset="0.030" stop-color="#810000" stop-opacity="0.482"/><stop offset="0.060" stop-color="#850000" stop-opacity="0.476"/><stop offset="0.090" stop-color="#8d0000" stop-opacity="0.465"/><stop offset="0.120" stop-color="#970000" stop-opacity="0.451"/><stop offset="0.150" stop-color="#a40000" stop-opacity="0.432"/><stop offset="0.180" stop-color="#b40000" stop-opacity="0.409"/><stop offset="0.210" stop-color="#c60000" stop-opacity="0.382"/><stop offset="0.240" stop-color="#da0000" stop-opacity="0.350"/><stop offset="0.270" stop-color="#f10000" stop-opacity="0.313"/><stop offset="0.300" stop-color="#ff0b00" stop-opacity="0.270"/><stop offset="0.330" stop-color="#ff2500" stop-opacity="0.221"/><stop offset="0.360" stop-color="#ff4200" stop-opacity="0.163"/><stop offset="0.390" stop-color="#ff5f00" stop-opacity="0.090"/><stop offset="0.420" stop-color="#ff7e00" stop-opacity="0.000"/><stop offset="0.450" stop-color="#ff9e00" stop-opacity="0.000"/><stop offset="0.480" stop-color="#ffbe00" stop-opacity="0.000"/><stop offset="0.510" stop-color="#ffdf00" stop-opacity="0.000"/><stop offset="0.540" stop-color="#fdff02" stop-opacity="0.000"/><stop offset="0.570" stop-color="#dcff23" stop-opacity="0.000"/><stop offset="0.600" stop-color="#bbff44" stop-opacity="0.000"/><stop offset="1" stop-color="#000" stop-opacity="0"/></radialGradient>
<radialGradient id="core7" cx="0.5" cy="0.5" r="0.5"><stop offset="0.000" stop-color="#800000" stop-opacity="0.473"/><stop offset="0.030" stop-color="#810000" stop-opacity="0.471"/><stop offset="0.060" stop-color="#850000" stop-opacity="0.465"/><stop offset="0.090" stop-color="#8d0000" stop-opacity="0.455"/><stop offset="0.120" stop-color="#970000" stop-opacity="0.441"/><stop offset="0.150" stop-color="#a40000" stop-opacity="0.422"/><stop offset="0.180" stop-color="#b40000" stop-opacity="0.400"/><stop offset="0.210" stop-color="#c60000" stop-opacity="0.373"/><stop offset="0.240" stop-color="#da0000" stop-opacity="0.342"/><stop offset="0.270" stop-color="#f10000" stop-opacity="0.306"/><stop offset="0.300" stop-color="#ff0b00" stop-opacity="0.264"/><stop offset="0.330" stop-color="#ff2500" stop-opacity="0.216"/><stop offset="0.360" stop-color="#ff4200" stop-opacity="0.159"/><stop offset="0.390" stop-color="#ff5f00" stop-opacity="0.088"/><stop offset="0.420" stop-color="#ff7e00" stop-opacity="0.000"/><stop offset="0.450" stop-color="#ff9e00" stop-opacity="0.000"/><stop offset="0.480" stop-color="#ffbe00" stop-opacity="0.000"/><stop offset="0.510" stop-color="#ffdf00" stop-opacity="0.000"/><stop offset="0.540" stop-color="#fdff02" stop-opacity="0.000"/><stop offset="0.570" stop-color="#dcff23" stop-opacity="0.000"/><stop offset="0.600" stop-color="#bbff44" stop-opacity="0.000"/><stop offset="1" stop-color="#000" stop-opacity="0"/></radialGradient>
<radialGradient id="core8" cx="0.5" cy="0.5" r="0.5"><stop offset="0.000" stop-color="#800000" stop-opacity="0.459"/><stop offset="0.030" stop-color="#810000" stop-opacity="0.457"/><stop offset="0.060" stop-color="#850000" stop-opacity="0.451"/><stop offset="0.090" stop-color="#8d0000" stop-opacity="0.441"/><stop offset="0.120" stop-color="#970000" stop-opacity="0.427"/><stop offset="0.150" stop-color="#a40000" stop-opacity="0.410"/><stop offset="0.180" stop-color="#b40000" stop-opacity="0.388"/><stop offset="0.210" stop-color="#c60000" stop-opacity="0.362"/><stop offset="0.240" stop-color="#da0000" stop-opacity="0.332"/><stop offset="0.270" stop-color="#f10000" stop-opacity="0.296"/><stop offset="0.300" stop-color="#ff0b00" stop-opacity="0.256"/><stop offset="0.330" stop-color="#ff2500" stop-opacity="0.209"/><stop offset="0.360" stop-color="#ff4200" stop-opacity="0.154"/><stop offset="0.390" stop-color="#ff5f00" stop-opacity="0.085"/><stop offset="0.420" stop-color="#ff7e00" stop-opacity="0.000"/><stop offset="0.450" stop-color="#ff9e00" stop-opacity="0.000"/><stop offset="0.480" stop-color="#ffbe00" stop-opacity="0.000"/><stop offset="0.510" stop-color="#ffdf00" stop-opacity="0.000"/><stop offset="0.540" stop-color="#fdff02" stop-opacity="0.000"/><stop offset="0.570" stop-color="#dcff23" stop-opacity="0.000"/><stop offset="0.600" stop-color="#bbff44" stop-opacity="0.000"/><stop offset="1" stop-color="#000" stop-opacity="0"/></radialGradient>
<radialGradient id="core9" cx="0.5" cy="0.5" r="0.5"><stop offset="0.000" stop-color="#800000" stop-opacity="0.441"/><stop offset="0.030" stop-color="#810000" stop-opacity="0.439"/><stop offset="0.060" stop-color="#850000" stop-opacity="0.433"/><stop offset="0.090" stop-color="#8d0000" stop-opacity="0.424"/><stop offset="0.120" stop-color="#970000" stop-opacity="0.411"/><stop offset="0.150" stop-color="#a40000" stop-opacity="0.394"/><stop offset="0.180" stop-color="#b40000" stop-opacity="0.373"/><stop offset="0.210" stop-color="#c60000" stop-opacity="0.348"/><stop offset="0.240" stop-color="#da0000" stop-opacity="0.318"/><stop offset="0.270" stop-color="#f10000" stop-opacity="0.285"/><stop offset="0.300" stop-color="#ff0b00" stop-opacity="0.246"/><stop offset="0.330" stop-color="#ff2500" stop-opacity="0.201"/><stop offset="0.360" stop-color="#ff4200" stop-opacity="0.148"/><stop offset="0.390" stop-color="#ff5f00" stop-opacity="0.082"/><stop offset="0.420" stop-color="#ff7e00" stop-opacity="0.000"/><stop offset="0.450" stop-color="#ff9e00" stop-opacity="0.000"/><stop offset="0.480" stop-color="#ffbe00" stop-opacity="0.000"/><stop offset="0.510" stop-color="#ffdf00" stop-opacity="0.000"/><stop offset="0.540" stop-color="#fdff02" stop-opacity="0.000"/><stop offset="0.570" stop-color="#dcff23" stop-opacity="0.000"/><stop offset="0.600" stop-color="#bbff44" stop-opacity="0.000"/><stop offset="1" stop-color="#000" stop-opacity="0"/></radialGradient>
<radialGradient id="core10" cx="0.5" cy="0.5" r="0.5"><stop offset="0.000" stop-color="#800000" stop-opacity="0.418"/><stop offset="0.030" stop-color="#810000" stop-opacity="0.416"/><stop offset="0.060" stop-color="#850000" stop-opacity="0.411"/><stop offset="0.090" stop-color="#8d0000" stop-opacity="0.402"/><stop offset="0.120" stop-color="#970000" stop-opacity="0.390"/><stop offset="0.150" stop-color="#a40000" stop-opacity="0.373"/><stop offset="0.180" stop-color="#b40000" stop-opacity="0.354"/><stop offset="0.210" stop-color="#c60000" stop-opacity="0.330"/><stop offset="0.240" stop-color="#da0000" stop-opacity="0.302"/><stop offset="0.270" stop-color="#f10000" stop-opacity="0.270"/><stop offset="0.300" stop-color="#ff0b00" stop-opacity="0.233"/><stop offset="0.330" stop-color="#ff2500" stop-opacity="0.191"/><stop offset="0.360" stop-color="#ff4200" stop-opacity="0.141"/><stop offset="0.390" stop-color="#ff5f00" stop-opacity="0.078"/><stop offset="0.420" stop-color="#ff7e00" stop-opacity="0.000"/><stop offset="0.450" stop-color="#ff9e00" stop-opacity="0.000"/><stop offset="0.480" stop-color="#ffbe00" stop-opacity="0.000"/><stop offset="0.510" stop-color="#ffdf00" stop-opacity="0.000"/><stop offset="0.540" stop-color="#fdff02" stop-opacity="0.000"/><stop offset="0.570" stop-color="#dcff23" stop-opacity="0.000"/><stop offset="0.600" stop-color="#bbff44" stop-opacity="0.000"/><stop offset="1" stop-color="#000" stop-opacity="0"/></radialGradient>
<radialGradient id="core11" cx="0.5" cy="0.5" r="0.5"><stop offset="0.000" stop-color="#800000" stop-opacity="0.391"/><stop offset="0.030" stop-color="#810000" stop-opacity="0.389"/><stop offset="0.060" stop-color="#850000" stop-opacity="0.384"/><stop offset="0.090" stop-color="#8d0000" stop-opacity="0.376"/><stop offset="0.120" stop-color="#970000" stop-opacity="0.364"/><stop offset="0.150" stop-color="#a40000" stop-opacity="0.349"/><stop offset="0.180" stop-color="#b40000" stop-opacity="0.331"/><stop offset="0.210" stop-color="#c60000" stop-opacity="0.309"/><stop offset="0.240" stop-color="#da0000" stop-opacity="0.283"/><stop offset="0.270" stop-color="#f10000" stop-opacity="0.253"/><stop offset="0.300" stop-color="#ff0b00" stop-opacity="0.218"/><stop offset="0.330" stop-color="#ff2500" stop-opacity="0.179"/><stop offset="0.360" stop-color="#ff4200" stop-opacity="0.132"/><stop offset="0.390" stop-color="#ff5f00" stop-opacity="0.073"/><stop offset="0.420" stop-color="#ff7e00" stop-opacity="0.000"/><stop offset="0.450" stop-color="#ff9e00" stop-opacity="0.000"/><stop offset="0.480" stop-color="#ffbe00" stop-opacity="0.000"/><stop offset="0.510" stop-color="#ffdf00" stop-opacity="0.000"/><stop offset="0.540" stop-color="#fdff02" stop-opacity="0.000"/><stop offset="0.570" stop-color="#dcff23" stop-opacity="0.000"/><stop offset="0.600" stop-color="#bbff44" stop-opacity="0.000"/><stop offset="1" stop-color="#000" stop-opacity="0"/></radialGradient>
<radialGradient id="core12" cx="0.5" cy="0.5" r="0.5"><stop offset="0.000" stop-color="#800000" stop-opacity="0.372"/><stop offset="0.030" stop-color="#810000" stop-opacity="0.371"/><stop offset="0.060" stop-color="#850000" stop-opacity="0.366"/><stop offset="0.090" stop-color="#8d0000" stop-opacity="0.358"/><stop offset="0.120" stop-color="#970000" stop-opacity="0.347"/><stop offset="0.150" stop-color="#a40000" stop-opacity="0.332"/><stop offset="0.180" stop-color="#b40000" stop-opacity="0.315"/><stop offset="0.210" stop-color="#c60000" stop-opacity="0.294"/><stop offset="0.240" stop-color="#da0000" stop-opacity="0.269"/><stop offset="0.270" stop-color="#f10000" stop-opacity="0.240"/><stop offset="0.300" stop-color="#ff0b00" stop-opacity="0.208"/><stop offset="0.330" stop-color="#ff2500" stop-opacity="0.170"/><stop offset="0.360" stop-color="#ff4200" stop-opacity="0.125"/><stop offset="0.390" stop-color="#ff5f00" stop-opacity="0.069"/><stop offset="0.420" stop-color="#ff7e00" stop-opacity="0.000"/><stop offset="0.450" stop-color="#ff9e00" stop-opacity="0.000"/><stop offset="0.480" stop-color="#ffbe00" stop-opacity="0.000"/><stop offset="0.510" stop-color="#ffdf00" stop-opacity="0.000"/><stop offset="0.540" stop-color="#fdff02" stop-opacity="0.000"/><stop offset="0.570" stop-color="#dcff23" stop-opacity="0.000"/><stop offset="0.600" stop-color="#bbff44" stop-opacity="0.000"/><stop offset="1" stop-color="#000" stop-opacity="0"/></radialGradient>
<radialGradient id="core13" cx="0.5" cy="0.5" r="0.5"><stop offset="0.000" stop-color="#800000" stop-opacity="0.334"/><stop offset="0.030" stop-color="#810000" stop-opacity="0.333"/><stop offset="0.060" stop-color="#850000" stop-opacity="0.329"/><stop offset="0.090" stop-color="#8d0000" stop-opacity="0.321"/><stop offset="0.120" stop-color="#970000" stop-opacity="0.311"/><stop offset="0.150" stop-color="#a40000" stop-opacity="0.299"/><stop offset="0.180" stop-color="#b40000" stop-opacity="0.283"/><stop offset="0.210" stop-color="#c60000" stop-opacity="0.264"/><stop offset="0.240" stop-color="#da0000" stop-opacity="0.242"/><stop offset="0.270" stop-color="#f10000" stop-opacity="0.216"/><stop offset="0.300" stop-color="#ff0b00" stop-opacity="0.187"/><stop offset="0.330" stop-color="#ff2500" stop-opacity="0.153"/><stop offset="0.360" stop-color="#ff4200" stop-opacity="0.112"/><stop offset="0.390" stop-color="#ff5f00" stop-opacity="0.062"/><stop offset="0.420" stop-color="#ff7e00" stop-opacity="0.000"/><stop offset="0.450" stop-color="#ff9e00" stop-opacity="0.000"/><stop offset="0.480" stop-color="#ffbe00" stop-opacity="0.000"/><stop offset="0.510" stop-color="#ffdf00" stop-opacity="0.000"/><stop offset="0.540" stop-color="#fdff02" stop-opacity="0.000"/><stop offset="0.570" stop-color="#dcff23" stop-opacity="0.000"/><stop offset="0.600" stop-color="#bbff44" stop-opacity="0.000"/><stop offset="1" stop-color="#000" stop-opacity="0"/></radialGradient>
<radialGradient id="core14" cx="0.5" cy="0.5" r="0.5"><stop offset="0.000" stop-color="#800000" stop-opacity="0.306"/><stop offset="0.030" stop-color="#810000" stop-opacity="0.305"/><stop offset="0.060" stop-color="#850000" stop-opacity="0.301"/><stop offset="0.090" stop-color="#8d0000" stop-opacity="0.294"/><stop offset="0.120" stop-color="#970000" stop-opacity="0.285"/><stop offset="0.150" stop-color="#a40000" stop-opacity="0.273"/><stop offset="0.180" stop-color="#b40000" stop-opacity="0.259"/><stop offset="0.210" stop-color="#c60000" stop-opacity="0.242"/><stop offset="0.240" stop-color="#da0000" stop-opacity="0.221"/><stop offset="0.270" stop-color="#f10000" stop-opacity="0.198"/><stop offset="0.300" stop-color="#ff0b00" stop-opacity="0.171"/><stop offset="0.330" stop-color="#ff2500" stop-opacity="0.140"/><stop offset="0.360" stop-color="#ff4200" stop-opacity="0.103"/><stop offset="0.390" stop-color="#ff5f00" stop-opacity="0.057"/><stop offset="0.420" stop-color="#ff7e00" stop-opacity="0.000"/><stop offset="0.450" stop-color="#ff9e00" stop-opacity="0.000"/><stop offset="0.480" stop-color="#ffbe00" stop-opacity="0.000"/><stop offset="0.510" stop-color="#ffdf00" stop-opacity="0.000"/><stop offset="0.540" stop-color="#fdff02" stop-opacity="0.000"/><stop offset="0.570" stop-color="#dcff23" stop-opacity="0.000"/><stop offset="0.600" stop-color="#bbff44" stop-opacity="0.000"/><stop offset="1" stop-color="#000" stop-opacity="0"/></radialGradient>
<radialGradient id="core15" cx="0.5" cy="0.5" r="0.5"><stop offset="0.000" stop-color="#800000" stop-opacity="0.266"/><stop offset="0.030" stop-color="#810000" stop-opacity="0.265"/><stop offset="0.060" stop-color="#850000" stop-opacity="0.262"/><stop offset="0.090" stop-color="#8d0000" stop-opacity="0.256"/><stop offset="0.120" stop-color="#970000" stop-opacity="0.248"/><stop offset="0.150" stop-color="#a40000" stop-opacity="0.238"/><stop offset="0.180" stop-color="#b40000" stop-opacity="0.225"/><stop offset="0.210" stop-color="#c60000" stop-opacity="0.210"/><stop offset="0.240" stop-color="#da0000" stop-opacity="0.192"/><stop offset="0.270" stop-color="#f10000" stop-opacity="0.172"/><stop offset="0.300" stop-color="#ff0b00" stop-opacity="0.149"/><stop offset="0.330" stop-color="#ff2500" stop-opacity="0.122"/><stop offset="0.360" stop-color="#ff4200" stop-opacity="0.090"/><stop offset="0.390" stop-color="#ff5f00" stop-opacity="0.049"/><stop offset="0.420" stop-color="#ff7e00" stop-opacity="0.000"/><stop offset="0.450" stop-color="#ff9e00" stop-opacity="0.000"/><stop offset="0.480" stop-color="#ffbe00" stop-opacity="0.000"/><stop offset="0.510" stop-color="#ffdf00" stop-opacity="0.000"/><stop offset="0.540" stop-color="#fdff02" stop-opacity="0.000"/><stop offset="0.570" stop-color="#dcff23" stop-opacity="0.000"/><stop offset="0.600" stop-color="#bbff44" stop-opacity="0.000"/><stop offset="1" stop-color="#000" stop-opacity="0"/></radialGradient>
<radialGradient id="core16" cx="0.5" cy="0.5" r="0.5"><stop offset="0.000" stop-color="#800000" stop-opacity="0.206"/><stop offset="0.030" stop-color="#810000" stop-opacity="0.205"/><stop offset="0.060" stop-color="#850000" stop-opacity="0.203"/><stop offset="0.090" stop-color="#8d0000" stop-opacity="0.198"/><stop offset="0.120" stop-color="#970000" stop-opacity="0.192"/><stop offset="0.150" stop-color="#a40000" stop-opacity="0.184"/><stop offset="0.180" stop-color="#b40000" stop-opacity="0.174"/><stop offset="0.210" stop-color="#c60000" stop-opacity="0.163"/><stop offset="0.240" stop-color="#da0000" stop-opacity="0.149"/><stop offset="0.270" stop-color="#f10000" stop-opacity="0.133"/><stop offset="0.300" stop-color="#ff0b00" stop-opacity="0.115"/><stop offset="0.330" stop-color="#ff2500" stop-opacity="0.094"/><stop offset="0.360" stop-color="#ff4200" stop-opacity="0.069"/><stop offset="0.390" stop-color="#ff5f00" stop-opacity="0.038"/><stop offset="0.420" stop-color="#ff7e00" stop-opacity="0.000"/><stop offset="0.450" stop-color="#ff9e00" stop-opacity="0.000"/><stop offset="0.480" stop-color="#ffbe00" stop-opacity="0.000"/><stop offset="0.510" stop-color="#ffdf00" stop-opacity="0.000"/><stop offset="0.540" stop-color="#fdff02" stop-opacity="0.000"/><stop offset="0.570" stop-color="#dcff23" stop-opacity="0.000"/><stop offset="0.600" stop-color="#bbff44" stop-opacity="0.000"/><stop offset="1" stop-color="#000" stop-opacity="0"/></radialGradient>
<radialGradient id="core17" cx="0.5" cy="0.5" r="0.5"><stop offset="0.000" stop-color="#800000" stop-opacity="0.174"/><stop offset="0.030" stop-color="#810000" stop-opacity="0.174"/><stop offset="0.060" stop-color="#850000" stop-opacity="0.172"/><stop offset="0.090" stop-color="#8d0000" stop-opacity="0.168"/><stop offset="0.120" stop-color="#970000" stop-opacity="0.163"/><stop offset="0.150" stop-color="#a40000" stop-opacity="0.156"/><stop offset="0.180" stop-color="#b40000" stop-opacity="0.148"/><stop offset="0.210" stop-color="#c60000" stop-opacity="0.138"/><stop offset="0.240" stop-color="#da0000" stop-opacity="0.126"/><stop offset="0.270" stop-color="#f10000" stop-opacity="0.113"/><stop offset="0.300" stop-color="#ff0b00" stop-opacity="0.097"/><stop offset="0.330" stop-color="#ff2500" stop-opacity="0.080"/><stop offset="0.360" stop-color="#ff4200" stop-opacity="0.059"/><stop offset="0.390" stop-color="#ff5f00" stop-opacity="0.032"/><stop offset="0.420" stop-color="#ff7e00" stop-opacity="0.000"/><stop offset="0.450" stop-color="#ff9e00" stop-opacity="0.000"/><stop offset="0.480" stop-color="#ffbe00" stop-opacity="0.000"/><stop offset="0.510" stop-color="#ffdf00" stop-opacity="0.000"/><stop offset="0.540" stop-color="#fdff02" stop-opacity="0.000"/><stop offset="0.570" stop-color="#dcff23" stop-opacity="0.000"/><stop offset="0.600" stop-color="#bbff44" stop-opacity="0.000"/><stop offset="1" stop-color="#000" stop-opacity="0"/></radialGradient>
<radialGradient id="core18" cx="0.5" cy="0.5" r="0.5"><stop offset="0.000" stop-color="#800000" stop-opacity="0.120"/><stop offset="0.030" stop-color="#810000" stop-opacity="0.120"/><stop offset="0.060" stop-color="#850000" stop-opacity="0.118"/><stop offset="0.090" stop-color="#8d0000" stop-opacity="0.115"/><stop offset="0.120" stop-color="#970000" stop-opacity="0.112"/><stop offset="0.150" stop-color="#a40000" stop-opacity="0.107"/><stop offset="0.180" stop-color="#b40000" stop-opacity="0.102"/><stop offset="0.210" stop-color="#c60000" stop-opacity="0.095"/><stop offset="0.240" stop-color="#da0000" stop-opacity="0.087"/><stop offset="0.270" stop-color="#f10000" stop-opacity="0.078"/><stop offset="0.300" stop-color="#ff0b00" stop-opacity="0.067"/><stop offset="0.330" stop-color="#ff2500" stop-opacity="0.055"/><stop offset="0.360" stop-color="#ff4200" stop-opacity="0.040"/><stop offset="0.390" stop-color="#ff5f00" stop-opacity="0.022"/><stop offset="0.420" stop-color="#ff7e00" stop-opacity="0.000"/><stop offset="0.450" stop-color="#ff9e00" stop-opacity="0.000"/><stop offset="0.480" stop-color="#ffbe00" stop-opacity="0.000"/><stop offset="0.510" stop-color="#ffdf00" stop-opacity="0.000"/><stop offset="0.540" stop-color="#fdff02" stop-opacity="0.000"/><stop offset="0.570" stop-color="#dcff23" stop-opacity="0.000"/><stop offset="0.600" stop-color="#bbff44" stop-opacity="0.000"/><stop offset="1" stop-color="#000" stop-opacity="0"/></radialGradient>
<radialGradient id="core19" cx="0.5" cy="0.5" r="0.5"><stop offset="0.000" stop-color="#800000" stop-opacity="0.062"/><stop offset="0.030" stop-color="#810000" stop-opacity="0.062"/><stop offset="0.060" stop-color="#850000" stop-opacity="0.061"/><stop offset="0.090" stop-color="#8d0000" stop-opacity="0.060"/><stop offset="0.120" stop-color="#970000" stop-opacity="0.058"/><stop offset="0.150" stop-color="#a40000" stop-opacity="0.055"/><stop offset="0.180" stop-color="#b40000" stop-opacity="0.052"/><stop offset="0.210" stop-color="#c60000" stop-opacity="0.049"/><stop offset="0.240" stop-color="#da0000" stop-opacity="0.045"/><stop offset="0.270" stop-color="#f10000" stop-opacity="0.040"/><stop offset="0.300" stop-color="#ff0b00" stop-opacity="0.035"/><stop offset="0.330" stop-color="#ff2500" stop-opacity="0.028"/><stop offset="0.360" stop-color="#ff4200" stop-opacity="0.021"/><stop offset="0.390" stop-color="#ff5f00" stop-opacity="0.011"/><stop offset="0.420" stop-color="#ff7e00" stop-opacity="0.000"/><stop offset="0.450" stop-color="#ff9e00" stop-opacity="0.000"/><stop offset="0.480" stop-color="#ffbe00" stop-opacity="0.000"/><stop offset="0.510" stop-color="#ffdf00" stop-opacity="0.000"/><stop offset="0.540" stop-color="#fdff02" stop-opacity="0.000"/><stop offset="0.570" stop-color="#dcff23" stop-opacity="0.000"/><stop offset="0.600" stop-color="#bbff44" stop-opacity="0.000"/><stop offset="1" stop-color="#000" stop-opacity="0"/></radialGradient>
<radialGradient id="core20" cx="0.5" cy="0.5" r="0.5"><stop offset="0.000" stop-color="#800000" stop-opacity="0.031"/><stop offset="0.030" stop-color="#810000" stop-opacity="0.031"/><stop offset="0.060" stop-color="#850000" stop-opacity="0.030"/><stop offset="0.090" stop-color="#8d0000" stop-opacity="0.030"/><stop offset="0.120" stop-color="#970000" stop-opacity="0.029"/><stop offset="0.150" stop-color="#a40000" stop-opacity="0.028"/><stop offset="0.180" stop-color="#b40000" stop-opacity="0.026"/><stop offset="0.210" stop-color="#c60000" stop-opacity="0.024"/><stop offset="0.240" stop-color="#da0000" stop-opacity="0.022"/><stop offset="0.270" stop-color="#f10000" stop-opacity="0.020"/><stop offset="0.300" stop-color="#ff0b00" stop-opacity="0.017"/><stop offset="0.330" stop-color="#ff2500" stop-opacity="0.014"/><stop offset="0.360" stop-color="#ff4200" stop-opacity="0.010"/><stop offset="0.390" stop-color="#ff5f00" stop-opacity="0.006"/><stop offset="0.420" stop-color="#ff7e00" stop-opacity="0.000"/><stop offset="0.450" stop-color="#ff9e00" stop-opacity="0.000"/><stop offset="0.480" stop-color="#ffbe00" stop-opacity="0.000"/><stop offset="0.510" stop-color="#ffdf00" stop-opacity="0.000"/><stop offset="0.540" stop-color="#fdff02" stop-opacity="0.000"/><stop offset="0.570" stop-color="#dcff23" stop-opacity="0.000"/><stop offset="0.600" stop-color="#bbff44" stop-opacity="0.000"/><stop offset="1" stop-color="#000" stop-opacity="0"/></radialGradient>
<radialGradient id="core21" cx="0.5" cy="0.5" r="0.5"><stop offset="0.000" stop-color="#800000" stop-opacity="0.850"/><stop offset="0.030" stop-color="#810000" stop-opacity="0.846"/><stop offset="0.060" stop-color="#850000" stop-opacity="0.836"/><stop offset="0.090" stop-color="#8d0000" stop-opacity="0.817"/><stop offset="0.120" stop-color="#970000" stop-opacity="0.792"/><stop offset="0.150" stop-color="#a40000" stop-opacity="0.759"/><stop offset="0.180" stop-color="#b40000" stop-opacity="0.719"/><stop offset="0.210" stop-color="#c60000" stop-opacity="0.671"/><stop offset="0.240" stop-color="#da0000" stop-opacity="0.614"/><stop offset="0.270" stop-color="#f10000" stop-opacity="0.549"/><stop offset="0.300" stop-color="#ff0b00" stop-opacity="0.474"/><stop offset="0.330" stop-color="#ff2500" stop-opacity="0.388"/><stop offset="0.360" stop-color="#ff4200" stop-opacity="0.286"/><stop offset="0.390" stop-color="#ff5f00" stop-opacity="0.158"/><stop offset="0.420" stop-color="#ff7e00" stop-opacity="0.000"/><stop offset="0.450" stop-color="#ff9e00" stop-opacity="0.000"/><stop offset="0.480" stop-color="#ffbe00" stop-opacity="0.000"/><stop offset="0.510" stop-color="#ffdf00" stop-opacity="0.000"/><stop offset="0.540" stop-color="#fdff02" stop-opacity="0.000"/><stop offset="0.570" stop-color="#dcff23" stop-opacity="0.000"/><stop offset="0.600" stop-color="#bbff44" stop-opacity="0.000"/><stop offset="1" stop-color="#000" stop-opacity="0"/></radialGradient>
<radialGradient id="glow" cx="0.5" cy="0.5" r="0.5"><stop offset="0.72" stop-color="#0818a8" stop-opacity="0.55"/><stop offset="0.85" stop-color="#06128a" stop-opacity="0.25"/><stop offset="1" stop-color="#000042" stop-opacity="0"/></radialGradient>
</defs>
<rect x="41" y="598" width="893" height="467" fill="#000042"/>
<ellipse cx="728" cy="831" rx="100" ry="195" fill="url(#glow)"/>
<path d="M310,700 L775,684 L696,986 L215,970 Z" fill="#a8a8d0" fill-opacity="0.130"/>
<path d="M178,747 L663,737 L802,916 L341,909 Z" fill="#b8b8d8" fill-opacity="0.167"/>
<ellipse cx="264.0" cy="831" rx="45.2" ry="77.9" fill="url(#pg0)"/>
<ellipse cx="285.9" cy="831" rx="39.6" ry="69.0" fill="url(#pg1)"/>
<ellipse cx="297.1" cy="831" rx="37.0" ry="64.8" fill="url(#pg2)"/>
<ellipse cx="309.6" cy="831" rx="34.1" ry="60.2" fill="url(#pg3)"/>
<ellipse cx="322.6" cy="831" rx="31.4" ry="55.8" fill="url(#pg4)"/>
<ellipse cx="348.4" cy="831" rx="26.9" ry="48.3" fill="url(#pg5)"/>
<ellipse cx="374.3" cy="831" rx="23.8" ry="43.4" fill="url(#pg6)"/>
<ellipse cx="400.3" cy="831" rx="22.7" ry="41.8" fill="url(#pg7)"/>
<ellipse cx="426.5" cy="831" rx="23.7" ry="44.2" fill="url(#pg8)"/>
<ellipse cx="453.1" cy="831" rx="26.4" ry="50.0" fill="url(#pg9)"/>
<ellipse cx="480.4" cy="831" rx="30.5" ry="58.4" fill="url(#pg10)"/>
<ellipse cx="507.9" cy="831" rx="35.3" ry="68.6" fill="url(#pg11)"/>
<ellipse cx="525.0" cy="831" rx="38.5" ry="75.5" fill="url(#pg12)"/>
<ellipse cx="555.4" cy="831" rx="44.4" ry="88.4" fill="url(#pg13)"/>
<ellipse cx="575.4" cy="831" rx="48.4" ry="97.2" fill="url(#pg14)"/>
<ellipse cx="601.4" cy="831" rx="53.6" ry="109.0" fill="url(#pg15)"/>
<ellipse cx="636.2" cy="831" rx="60.4" ry="125.1" fill="url(#pg16)"/>
<ellipse cx="653.0" cy="831" rx="63.7" ry="133.0" fill="url(#pg17)"/>
<ellipse cx="679.9" cy="831" rx="68.8" ry="145.7" fill="url(#pg18)"/>
<ellipse cx="706.5" cy="831" rx="73.8" ry="158.3" fill="url(#pg19)"/>
<ellipse cx="719.8" cy="831" rx="76.3" ry="164.7" fill="url(#pg20)"/>
<ellipse cx="733.0" cy="831" rx="66.0" ry="171.1" fill="url(#pg21)"/>
<path d="M310,700 L775,684 L696,986 L215,970 Z" fill="#a8a8d0" fill-opacity="0.080"/>
<path d="M178,747 L663,737 L802,916 L341,909 Z" fill="#b8b8d8" fill-opacity="0.160"/>
<clipPath id="bigclip"><ellipse cx="720" cy="831" rx="79" ry="171"/></clipPath>
<g clip-path="url(#bigclip)"><path d="M310,700 L775,684 L696,986 L215,970 Z" fill="#6a8090" fill-opacity="0.25"/><path d="M178,747 L663,737 L802,916 L341,909 Z" fill="#304a58" fill-opacity="0.5"/></g>
<clipPath id="leftclip"><path d="M41,598 L330,598 L310,700 L293.5,747 L178,747 L264,832 L215,970 L41,1065 Z"/></clipPath>
<ellipse cx="268.5" cy="831" rx="41.0" ry="77.9" fill="url(#pgL)" clip-path="url(#leftclip)"/>
<ellipse cx="264.0" cy="831" rx="27.1" ry="77.9" fill="url(#core0)"/>
<ellipse cx="285.9" cy="831" rx="23.8" ry="69.0" fill="url(#core1)"/>
<ellipse cx="297.1" cy="831" rx="22.2" ry="64.8" fill="url(#core2)"/>
<ellipse cx="309.6" cy="831" rx="20.5" ry="60.2" fill="url(#core3)"/>
<ellipse cx="322.6" cy="831" rx="18.9" ry="55.8" fill="url(#core4)"/>
<ellipse cx="348.4" cy="831" rx="16.1" ry="48.3" fill="url(#core5)"/>
<ellipse cx="374.3" cy="831" rx="14.3" ry="43.4" fill="url(#core6)"/>
<ellipse cx="400.3" cy="831" rx="13.6" ry="41.8" fill="url(#core7)"/>
<ellipse cx="426.5" cy="831" rx="14.2" ry="44.2" fill="url(#core8)"/>
<ellipse cx="453.1" cy="831" rx="15.9" ry="50.0" fill="url(#core9)"/>
<ellipse cx="480.4" cy="831" rx="18.3" ry="58.4" fill="url(#core10)"/>
<ellipse cx="507.9" cy="831" rx="21.2" ry="68.6" fill="url(#core11)"/>
<ellipse cx="525.0" cy="831" rx="23.1" ry="75.5" fill="url(#core12)"/>
<ellipse cx="555.4" cy="831" rx="26.7" ry="88.4" fill="url(#core13)"/>
<ellipse cx="575.4" cy="831" rx="29.0" ry="97.2" fill="url(#core14)"/>
<ellipse cx="601.4" cy="831" rx="32.1" ry="109.0" fill="url(#core15)"/>
<ellipse cx="636.2" cy="831" rx="36.3" ry="125.1" fill="url(#core16)"/>
<ellipse cx="653.0" cy="831" rx="38.2" ry="133.0" fill="url(#core17)"/>
<ellipse cx="679.9" cy="831" rx="41.3" ry="145.7" fill="url(#core18)"/>
<ellipse cx="706.5" cy="831" rx="44.3" ry="158.3" fill="url(#core19)"/>
<ellipse cx="719.8" cy="831" rx="45.8" ry="164.7" fill="url(#core20)"/>
<ellipse cx="731" cy="831" rx="58" ry="180" fill="url(#core21)"/>
<polyline points="258.1,790.4 269.1,792.7 280.1,794.9 291.1,797.1 302.2,799.2 313.2,801.1 324.3,803.0 335.4,804.7 346.4,806.1 357.4,807.4 368.4,808.3 379.3,809.0 390.1,809.2 400.8,809.1 411.4,808.6 421.9,807.8 432.4,806.6 442.8,805.1 453.1,803.4 463.4,801.4 473.7,799.3 484.1,797.1 494.4,794.7 504.7,792.2 515.1,789.6 525.4,787.0 535.8,784.3 546.3,781.5 556.7,778.7 567.2,775.8 577.8,772.9 588.4,770.0 599.0,767.0 609.7,764.0 620.4,760.9 631.1,757.8 641.9,754.7 652.8,751.6 663.7,748.5 674.6,745.3 685.6,742.1" fill="none" stroke="#202030" stroke-opacity="0.7" stroke-width="1"/>
<polyline points="258.1,879.4 269.1,876.7 280.1,874.0 291.1,871.4 302.2,869.0 313.2,866.6 324.3,864.4 335.4,862.4 346.4,860.6 357.4,859.2 368.4,858.0 379.3,857.3 390.1,856.9 400.8,857.1 411.4,857.7 421.9,858.7 432.4,860.1 442.8,861.9 453.1,863.9 463.4,866.3 473.7,868.8 484.1,871.5 494.4,874.3 504.7,877.3 515.1,880.3 525.4,883.5 535.8,886.7 546.3,890.0 556.7,893.4 567.2,896.8 577.8,900.3 588.4,903.8 599.0,907.3 609.7,910.9 620.4,914.6 631.1,918.2 641.9,921.9 652.8,925.6 663.7,929.4 674.6,933.2 685.6,937.0" fill="none" stroke="#202030" stroke-opacity="0.7" stroke-width="1"/>
<polyline points="281.5,770.1 291.2,773.6 300.9,776.9 310.7,780.1 320.5,783.2 330.5,786.2 340.5,789.0 350.6,791.5 360.8,793.7 371.1,795.6 381.5,797.0 392.0,798.0 402.6,798.4 413.4,798.2 424.3,797.4 435.3,796.2 446.4,794.4 457.7,792.1 469.0,789.6 480.5,786.6 492.0,783.5 503.6,780.1 515.3,776.5 527.1,772.8 538.9,768.9 550.8,765.0 562.8,760.9 574.8,756.7 586.9,752.5 599.1,748.2 611.3,743.8 623.6,739.4 635.9,735.0 648.3,730.4 660.8,725.9 673.3,721.3 685.9,716.6 698.6,711.9 711.3,707.2 724.0,702.5 736.8,697.7" fill="none" stroke="#1a2a80" stroke-opacity="0.7" stroke-width="1"/>
<polyline points="281.5,897.3 291.2,893.6 300.9,890.0 310.7,886.5 320.5,883.1 330.5,879.8 340.5,876.8 350.6,874.1 360.8,871.6 371.1,869.6 381.5,868.0 392.0,867.0 402.6,866.6 413.4,866.8 424.3,867.6 435.3,869.0 446.4,870.9 457.7,873.3 469.0,876.2 480.5,879.3 492.0,882.8 503.6,886.5 515.3,890.4 527.1,894.4 538.9,898.6 550.8,903.0 562.8,907.4 574.8,911.9 586.9,916.5 599.1,921.2 611.3,926.0 623.6,930.8 635.9,935.7 648.3,940.6 660.8,945.6 673.3,950.6 685.9,955.6 698.6,960.8 711.3,965.9 724.0,971.1 736.8,976.3" fill="none" stroke="#1a2a80" stroke-opacity="0.7" stroke-width="1"/>
<ellipse cx="274.0" cy="831" rx="45.2" ry="77.9" fill="none" stroke="#e03030" stroke-width="1" stroke-opacity="0.85"/>
<ellipse cx="294.8" cy="831" rx="39.6" ry="69.0" fill="none" stroke="#e03030" stroke-width="1" stroke-opacity="0.85"/>
<ellipse cx="305.3" cy="831" rx="37.0" ry="64.8" fill="none" stroke="#e03030" stroke-width="1" stroke-opacity="0.85"/>
<ellipse cx="317.2" cy="831" rx="34.1" ry="60.2" fill="none" stroke="#e03030" stroke-width="1" stroke-opacity="0.85"/>
<ellipse cx="329.5" cy="831" rx="31.4" ry="55.8" fill="none" stroke="#e03030" stroke-width="1" stroke-opacity="0.85"/>
<ellipse cx="353.9" cy="831" rx="26.9" ry="48.3" fill="none" stroke="#e03030" stroke-width="1" stroke-opacity="0.85"/>
<ellipse cx="378.5" cy="831" rx="23.8" ry="43.4" fill="none" stroke="#e03030" stroke-width="1" stroke-opacity="0.85"/>
<ellipse cx="403.2" cy="831" rx="22.7" ry="41.8" fill="none" stroke="#e03030" stroke-width="1" stroke-opacity="0.85"/>
<ellipse cx="428.0" cy="831" rx="23.7" ry="44.2" fill="none" stroke="#e03030" stroke-width="1" stroke-opacity="0.85"/>
<ellipse cx="453.3" cy="831" rx="26.4" ry="50.0" fill="none" stroke="#e03030" stroke-width="1" stroke-opacity="0.85"/>
<ellipse cx="479.2" cy="831" rx="30.5" ry="58.4" fill="none" stroke="#e03030" stroke-width="1" stroke-opacity="0.85"/>
<ellipse cx="505.4" cy="831" rx="35.3" ry="68.6" fill="none" stroke="#e03030" stroke-width="1" stroke-opacity="0.85"/>
<ellipse cx="521.7" cy="831" rx="38.5" ry="75.5" fill="none" stroke="#e03030" stroke-width="1" stroke-opacity="0.85"/>
<ellipse cx="550.6" cy="831" rx="44.4" ry="88.4" fill="none" stroke="#e03030" stroke-width="1" stroke-opacity="0.85"/>
<ellipse cx="569.7" cy="831" rx="48.4" ry="97.2" fill="none" stroke="#e03030" stroke-width="1" stroke-opacity="0.85"/>
<ellipse cx="594.4" cy="831" rx="53.6" ry="109.0" fill="none" stroke="#e03030" stroke-width="1" stroke-opacity="0.85"/>
<ellipse cx="627.6" cy="831" rx="60.4" ry="125.1" fill="none" stroke="#e03030" stroke-width="1" stroke-opacity="0.85"/>
<ellipse cx="643.6" cy="831" rx="63.7" ry="133.0" fill="none" stroke="#e03030" stroke-width="1" stroke-opacity="0.85"/>
<ellipse cx="669.3" cy="831" rx="68.8" ry="145.7" fill="none" stroke="#e03030" stroke-width="1" stroke-opacity="0.85"/>
<ellipse cx="694.7" cy="831" rx="73.8" ry="158.3" fill="none" stroke="#e03030" stroke-width="1" stroke-opacity="0.85"/>
<ellipse cx="707.4" cy="831" rx="76.3" ry="164.7" fill="none" stroke="#e03030" stroke-width="1" stroke-opacity="0.85"/>
<ellipse cx="720.0" cy="831" rx="78.7" ry="171.1" fill="none" stroke="#e03030" stroke-width="1" stroke-opacity="0.85"/>
<path d="M600,752 L776,684 M600,872 L802,916 M664,737 L802,916" stroke="#101828" stroke-opacity="0.75" stroke-width="1"/>
<path d="M757,699 L714,918 M703,711 L660,930" stroke="#e02020" stroke-opacity="0.8" stroke-width="1" stroke-dasharray="2,2"/>
<ellipse cx="720" cy="831" rx="79" ry="171" fill="none" stroke="#000" stroke-width="2.6" stroke-dasharray="9,4"/>
<line x1="320" y1="831" x2="738" y2="831" stroke="#d8f0ff" stroke-width="1" stroke-opacity="0.8"/>
<path d="M733,827.5 L746,831 L733,834.5 Z" fill="#fff"/>
<text x="360.0" y="852" text-anchor="middle" font-family="Liberation Sans" font-size="17" fill="#c8d8f0" fill-opacity="0.35">360</text>
<text x="402.4" y="852" text-anchor="middle" font-family="Liberation Sans" font-size="17" fill="#c8d8f0" fill-opacity="0.35">400</text>
<text x="445.8" y="852" text-anchor="middle" font-family="Liberation Sans" font-size="17" fill="#c8d8f0" fill-opacity="0.35">440</text>
<text x="489.9" y="852" text-anchor="middle" font-family="Liberation Sans" font-size="17" fill="#c8d8f0" fill-opacity="0.35">480</text>
<text x="535.0" y="852" text-anchor="middle" font-family="Liberation Sans" font-size="17" fill="#c8d8f0" fill-opacity="0.35">520</text>
<text x="580.9" y="852" text-anchor="middle" font-family="Liberation Sans" font-size="17" fill="#c8d8f0" fill-opacity="0.35">560</text>
<text x="724" y="859" font-family="Liberation Sans" font-size="17" fill="#fff">[mm]</text>
<line x1="202" y1="697" x2="320.4" y2="952.9" stroke="#e8e8f0" stroke-width="1.2"/>
<path d="M199.5,692.5 L207,703 L201.5,702 Z" fill="#fff"/>
<path d="M210.5,723.5 L216.5,720.5" stroke="#ddd" stroke-width="1"/>
<path d="M240.5,788.5 L246.5,785.5" stroke="#ddd" stroke-width="1"/>
<path d="M289,891.5 L295,888.5" stroke="#ddd" stroke-width="1"/>
<path d="M304.5,925.5 L310.5,922.5" stroke="#ddd" stroke-width="1"/>
<path d="M321,753 L325,757" stroke="#ddd" stroke-width="1"/>
<path d="M298,782 L302,786" stroke="#ddd" stroke-width="1"/>
<path d="M238,860 L242,864" stroke="#ddd" stroke-width="1"/>
<path d="M212,894 L216,898" stroke="#ddd" stroke-width="1"/>
<line x1="339.5" y1="733.5" x2="186.7" y2="931.7" stroke="#e8e8f0" stroke-width="1.2"/>
<path d="M341,732 L333,737 L337,741 Z" fill="#fff"/>
<text x="221" y="712" font-family="Liberation Sans" font-size="17" fill="#fff" fill-opacity="1">Y [mm]</text>
<text x="352" y="746" font-family="Liberation Sans" font-size="17" fill="#fff" fill-opacity="1">X [mm]</text>
<text x="176" y="734" font-family="Liberation Sans" font-size="17" fill="#fff" fill-opacity="1">0.4</text>
<text x="201.5" y="786" font-family="Liberation Sans" font-size="17" fill="#fff" fill-opacity="1">0.2</text>
<text x="188" y="878" font-family="Liberation Sans" font-size="17" fill="#fff" fill-opacity="1">-0.2</text>
<text x="156" y="921" font-family="Liberation Sans" font-size="17" fill="#fff" fill-opacity="1">-0.4</text>
<text x="287" y="760" font-family="Liberation Sans" font-size="17" fill="#fff" fill-opacity="1">0.4</text>
<text x="268.6" y="938" font-family="Liberation Sans" font-size="17" fill="#fff" fill-opacity="1">-0.4</text>
<text x="245" y="889" font-family="Liberation Sans" font-size="17" fill="#fff" fill-opacity="0.85">-0.2</text>
<text x="257" y="797" font-family="Liberation Sans" font-size="17" fill="#fff" fill-opacity="0.45">0.2</text>
</svg>
<div class="a" style="left:939px;top:596px;width:897px;height:469px;background:#fff;border-style:solid;border-width:2px 1px 2px 2px;border-color:#a0a0a0 #777 #777 #a0a0a0;box-shadow:1px 1px 0 #fff"></div>
<div class="a" style="left:940px;top:597px;width:894px;height:1px;background:#696969"></div>
<div class="a" style="left:940px;top:597px;width:1px;height:466px;background:#696969"></div>
<div class="a" style="left:1807px;top:598px;width:27px;height:465px;background:#f0f0f0"></div>
<div class="a" style="left:1816px;top:627px;width:6px;height:205px;background:#858585;border-radius:3px"></div>
<div class="a" style="left:1138px;top:601px;width:1px;height:31px;background:#e5e5e5"></div>
<div class="a" style="left:1221px;top:601px;width:1px;height:31px;background:#e5e5e5"></div>
<div class="a" style="left:1356px;top:601px;width:1px;height:31px;background:#e5e5e5"></div>
<div class="a" style="left:1401px;top:601px;width:1px;height:31px;background:#e5e5e5"></div>
<div class="a" style="left:1506px;top:601px;width:1px;height:31px;background:#e5e5e5"></div>
<div class="a" style="left:1611px;top:601px;width:1px;height:31px;background:#e5e5e5"></div>
<div class="t" style="left:950.00px;top:608.99px;font-size:18.2px;line-height:18.2px;color:#000;transform:scaleX(0.9212);transform-origin:0.50px 0;">Parameter</div>
<div class="t" style="left:1309.60px;top:608.99px;font-size:18.2px;line-height:18.2px;color:#000;transform:scaleX(0.9156);transform-origin:-0.30px 0;">Value</div>
<div class="t" style="left:1411.39px;top:608.99px;font-size:18.2px;line-height:18.2px;color:#000;transform:scaleX(0.9703);transform-origin:0.81px 0;">Uncertainty</div>
<div class="t" style="left:1512.60px;top:608.99px;font-size:18.2px;line-height:18.2px;color:#000;transform:scaleX(0.9844);transform-origin:0.70px 0;">Unit</div>
<div class="t" style="left:956.19px;top:638.09px;font-size:18.2px;line-height:18.2px;color:#2350ae;transform:scaleX(0.9221);transform-origin:0.41px 0;">Current Plane</div>
<div class="a" style="left:1066px;top:646px;width:707px;height:1px;background:#9ab0dc"></div>
<svg class="a" style="left:1780px;top:638px" width="20" height="17"><path d="M4.199999999999999,5.5 L9.7,11.0 L15.2,5.5" fill="none" stroke="#0a2d8c" stroke-width="2.6"/></svg>
<div class="t" style="left:956.19px;top:669.09px;font-size:18.2px;line-height:18.2px;color:#2350ae;transform:scaleX(0.8818);transform-origin:0.41px 0;">General</div>
<div class="a" style="left:1019px;top:677px;width:754px;height:1px;background:#9ab0dc"></div>
<svg class="a" style="left:1780px;top:669px" width="20" height="17"><path d="M4.199999999999999,11.5 L9.7,6.0 L15.2,11.5" fill="none" stroke="#0a2d8c" stroke-width="2.6"/></svg>
<div class="t" style="left:956.19px;top:792.79px;font-size:18.2px;line-height:18.2px;color:#2350ae;transform:scaleX(0.9789);transform-origin:0.41px 0;">Torsion</div>
<div class="a" style="left:1017px;top:801px;width:756px;height:1px;background:#9ab0dc"></div>
<svg class="a" style="left:1780px;top:793px" width="20" height="17"><path d="M4.199999999999999,5.5 L9.7,11.0 L15.2,5.5" fill="none" stroke="#0a2d8c" stroke-width="2.6"/></svg>
<div class="t" style="left:956.19px;top:824.29px;font-size:18.2px;line-height:18.2px;color:#2350ae;transform:scaleX(0.9025);transform-origin:0.41px 0;">Caustic U</div>
<div class="a" style="left:1033px;top:832px;width:740px;height:1px;background:#9ab0dc"></div>
<svg class="a" style="left:1780px;top:824px" width="20" height="17"><path d="M4.199999999999999,11.5 L9.7,6.0 L15.2,11.5" fill="none" stroke="#0a2d8c" stroke-width="2.6"/></svg>
<div class="a" style="left:946px;top:818px;width:8px;height:31px;background:#ff0000"></div>
<div class="t" style="left:950.00px;top:700.59px;font-size:18.2px;line-height:18.2px;color:#000;transform:scaleX(0.9920);transform-origin:0.50px 0;">Number of Positions</div>
<div class="t" style="left:1330.39px;top:700.59px;font-size:18.2px;line-height:18.2px;color:#000;transform:scaleX(1.0158);transform-origin:0.81px 0;">22</div>
<div class="t" style="left:950.00px;top:730.59px;font-size:18.2px;line-height:18.2px;color:#000;transform:scaleX(0.9500);transform-origin:0.50px 0;">Geometric Beam Type</div>
<div class="t" style="left:1224.00px;top:730.59px;font-size:18.2px;line-height:18.2px;color:#000;transform:scaleX(1.0178);transform-origin:0.50px 0;">probably stigmatic</div>
<div class="t" style="left:950.00px;top:760.59px;font-size:18.2px;line-height:18.2px;color:#000;transform:scaleX(0.9017);transform-origin:0.50px 0;">Results</div>
<div class="t" style="left:1279.00px;top:760.59px;font-size:18.2px;line-height:18.2px;color:#000;transform:scaleX(0.9533);transform-origin:0.00px 0;">after lens</div>
<div class="a" style="left:948px;top:1029px;width:664px;height:29px;background:#e1e100"></div>
<div class="t" style="left:949.39px;top:855.59px;font-size:18.2px;line-height:18.2px;color:#000;transform:scaleX(1.0081);transform-origin:0.81px 0;">ISO 11146-1</div>
<div class="t" style="left:1279.60px;top:855.59px;font-size:18.2px;line-height:18.2px;color:#000;transform:scaleX(1.0145);transform-origin:0.70px 0;">Conform</div>
<div class="t" style="left:949.39px;top:885.59px;font-size:18.2px;line-height:18.2px;color:#000;transform:scaleX(0.9574);transform-origin:0.81px 0;">Caustic Position</div>
<div class="t" style="left:1145.00px;top:885.59px;font-size:18.2px;line-height:18.2px;color:#000;transform:scaleX(0.9211);transform-origin:0.00px 0;">z0</div>
<div class="t" style="left:1287.60px;top:885.59px;font-size:18.2px;line-height:18.2px;color:#000;transform:scaleX(0.9545);transform-origin:-0.30px 0;">403.451</div>
<div class="t" style="left:1385.00px;top:885.59px;font-size:18.2px;line-height:18.2px;color:#000;transform:scaleX(0.9600);transform-origin:0.00px 0;">±</div>
<div class="t" style="left:1456.39px;top:885.59px;font-size:18.2px;line-height:18.2px;color:#000;transform:scaleX(0.9733);transform-origin:0.31px 0;">0.440</div>
<div class="t" style="left:1512.79px;top:885.59px;font-size:18.2px;line-height:18.2px;color:#000;transform:scaleX(1.0759);transform-origin:0.61px 0;">mm</div>
<div class="t" style="left:949.39px;top:915.59px;font-size:18.2px;line-height:18.2px;color:#000;transform:scaleX(0.9574);transform-origin:0.81px 0;">Beam Waist Diameter</div>
<div class="t" style="left:1145.00px;top:915.59px;font-size:18.2px;line-height:18.2px;color:#000;transform:scaleX(1.0250);transform-origin:0.00px 0;">d0</div>
<div class="t" style="left:1297.00px;top:915.59px;font-size:18.2px;line-height:18.2px;color:#000;transform:scaleX(0.9518);transform-origin:0.00px 0;">0.2494</div>
<div class="t" style="left:1385.00px;top:915.59px;font-size:18.2px;line-height:18.2px;color:#000;transform:scaleX(0.9600);transform-origin:0.00px 0;">±</div>
<div class="t" style="left:1426.79px;top:915.59px;font-size:18.2px;line-height:18.2px;color:#000;transform:scaleX(0.9684);transform-origin:0.11px 0;">0.001732</div>
<div class="t" style="left:1512.79px;top:915.59px;font-size:18.2px;line-height:18.2px;color:#000;transform:scaleX(1.0759);transform-origin:0.61px 0;">mm</div>
<div class="t" style="left:949.39px;top:945.59px;font-size:18.2px;line-height:18.2px;color:#000;transform:scaleX(0.9654);transform-origin:0.81px 0;">Rayleigh Length</div>
<div class="t" style="left:1145.00px;top:945.59px;font-size:18.2px;line-height:18.2px;color:#000;transform:scaleX(0.8500);transform-origin:0.00px 0;">zR</div>
<div class="t" style="left:1297.00px;top:945.59px;font-size:18.2px;line-height:18.2px;color:#000;transform:scaleX(0.9691);transform-origin:0.00px 0;">75.042</div>
<div class="t" style="left:1385.00px;top:945.59px;font-size:18.2px;line-height:18.2px;color:#000;transform:scaleX(0.9600);transform-origin:0.00px 0;">±</div>
<div class="t" style="left:1456.39px;top:945.59px;font-size:18.2px;line-height:18.2px;color:#000;transform:scaleX(0.9733);transform-origin:0.31px 0;">0.709</div>
<div class="t" style="left:1512.79px;top:945.59px;font-size:18.2px;line-height:18.2px;color:#000;transform:scaleX(1.0759);transform-origin:0.61px 0;">mm</div>
<div class="t" style="left:949.39px;top:975.59px;font-size:18.2px;line-height:18.2px;color:#000;transform:scaleX(0.9670);transform-origin:0.81px 0;">Divergence</div>
<div class="t" style="left:1145.00px;top:975.59px;font-size:18.2px;line-height:18.2px;color:#000;transform:scaleX(0.9585);transform-origin:0.00px 0;">theta</div>
<div class="t" style="left:1306.19px;top:975.59px;font-size:18.2px;line-height:18.2px;color:#000;transform:scaleX(0.9711);transform-origin:0.41px 0;">3.323</div>
<div class="t" style="left:1385.00px;top:975.59px;font-size:18.2px;line-height:18.2px;color:#000;transform:scaleX(0.9600);transform-origin:0.00px 0;">±</div>
<div class="t" style="left:1456.39px;top:975.59px;font-size:18.2px;line-height:18.2px;color:#000;transform:scaleX(0.9733);transform-origin:0.31px 0;">0.012</div>
<div class="t" style="left:1512.79px;top:975.59px;font-size:18.2px;line-height:18.2px;color:#000;transform:scaleX(1.0250);transform-origin:0.61px 0;">mrad</div>
<div class="t" style="left:949.39px;top:1005.59px;font-size:18.2px;line-height:18.2px;color:#000;transform:scaleX(0.9274);transform-origin:0.81px 0;">Beam Parameter Prod...</div>
<div class="t" style="left:1146.00px;top:1005.59px;font-size:18.2px;line-height:18.2px;color:#000;transform:scaleX(0.8054);transform-origin:-1.00px 0;">BPP</div>
<div class="t" style="left:1306.19px;top:1005.59px;font-size:18.2px;line-height:18.2px;color:#000;transform:scaleX(0.9711);transform-origin:0.41px 0;">0.207</div>
<div class="t" style="left:1385.00px;top:1005.59px;font-size:18.2px;line-height:18.2px;color:#000;transform:scaleX(0.9600);transform-origin:0.00px 0;">±</div>
<div class="t" style="left:1456.39px;top:1005.59px;font-size:18.2px;line-height:18.2px;color:#000;transform:scaleX(0.9733);transform-origin:0.31px 0;">0.001</div>
<div class="t" style="left:1512.79px;top:1005.59px;font-size:18.2px;line-height:18.2px;color:#000;transform:scaleX(1.0237);transform-origin:0.61px 0;">mm mrad</div>
<div class="t" style="left:948.39px;top:1035.59px;font-size:18.2px;line-height:18.2px;color:#000;transform:scaleX(0.9602);transform-origin:1.81px 0;">Beam Propagation Ra...</div>
<div class="t" style="left:1306.60px;top:1035.59px;font-size:18.2px;line-height:18.2px;color:#000;transform:scaleX(0.9659);transform-origin:1.20px 0;">1.028</div>
<div class="t" style="left:1385.00px;top:1035.59px;font-size:18.2px;line-height:18.2px;color:#000;transform:scaleX(0.9600);transform-origin:0.00px 0;">±</div>
<div class="t" style="left:1456.39px;top:1035.59px;font-size:18.2px;line-height:18.2px;color:#000;transform:scaleX(0.9733);transform-origin:0.31px 0;">0.006</div>
<div class="t" style="left:1144.00px;top:1035.59px;font-size:18.2px;line-height:18.2px;color:#000;transform:scaleX(1.1923);transform-origin:1.00px 0;">M</div>
<div class="t" style="left:1161.5px;top:1035px;font-size:11px;line-height:11px">2</div>
<div class="a" style="left:1846px;top:135px;width:20px;height:20px;border:1px solid #333;border-radius:4px;background:#f3f3f3"></div>
<div class="t" style="left:1871.60px;top:137.78px;font-size:16.8px;line-height:16.8px;color:#000;transform:scaleX(0.9314);transform-origin:-0.80px 0;">Auto</div>
<div class="a" style="left:1843px;top:166px;width:28px;height:1px;background:#a0a0a0"></div>
<div class="a" style="left:1839px;top:168px;width:37px;height:1.6px;background:#000"></div>
<div class="a" style="left:1845px;top:170px;width:25px;height:873px;background:linear-gradient(0deg,#000080 0.0%,#000099 2.5%,#0000b2 5.0%,#0000cc 7.5%,#0000e6 10.0%,#0000ff 12.5%,#001aff 15.0%,#0033ff 17.5%,#004dff 20.0%,#0066ff 22.5%,#0080ff 25.0%,#0099ff 27.5%,#00b2ff 30.0%,#00ccff 32.5%,#00e5ff 35.0%,#00ffff 37.5%,#1affe5 40.0%,#33ffcc 42.5%,#4dffb2 45.0%,#66ff99 47.5%,#80ff80 50.0%,#99ff66 52.5%,#b3ff4c 55.0%,#ccff33 57.5%,#e5ff1a 60.0%,#ffff00 62.5%,#ffe500 65.0%,#ffcc00 67.5%,#ffb300 70.0%,#ff9900 72.5%,#ff8000 75.0%,#ff6600 77.5%,#ff4c00 80.0%,#ff3300 82.5%,#ff1a00 85.0%,#ff0000 87.5%,#e50000 90.0%,#cc0000 92.5%,#b30000 95.0%,#990000 97.5%,#800000 100.0%)"></div>
<div class="a" style="left:1843px;top:170px;width:2px;height:873px;background:#a8a8a8"></div>
<div class="a" style="left:1839px;top:1043.3px;width:37px;height:1.6px;background:#000"></div>
<div class="a" style="left:1870px;top:1034px;width:8px;height:1.5px;background:#000"></div>
<div class="t" style="left:1880.79px;top:1025.66px;font-size:18px;line-height:18px;color:#000;transform:scaleX(0.8800);transform-origin:0.11px 0;">0</div>
<div class="a" style="left:1870px;top:898px;width:8px;height:1.5px;background:#000"></div>
<div class="t" style="left:1880.79px;top:890.06px;font-size:18px;line-height:18px;color:#000;transform:scaleX(0.9160);transform-origin:0.11px 0;">0.1</div>
<div class="a" style="left:1870px;top:763px;width:8px;height:1.5px;background:#000"></div>
<div class="t" style="left:1880.79px;top:754.46px;font-size:18px;line-height:18px;color:#000;transform:scaleX(0.9160);transform-origin:0.11px 0;">0.2</div>
<div class="a" style="left:1870px;top:627px;width:8px;height:1.5px;background:#000"></div>
<div class="t" style="left:1880.79px;top:618.86px;font-size:18px;line-height:18px;color:#000;transform:scaleX(0.9160);transform-origin:0.11px 0;">0.3</div>
<div class="a" style="left:1870px;top:491px;width:8px;height:1.5px;background:#000"></div>
<div class="t" style="left:1880.79px;top:483.26px;font-size:18px;line-height:18px;color:#000;transform:scaleX(0.9160);transform-origin:0.11px 0;">0.4</div>
<div class="a" style="left:1870px;top:356px;width:8px;height:1.5px;background:#000"></div>
<div class="t" style="left:1880.79px;top:347.66px;font-size:18px;line-height:18px;color:#000;transform:scaleX(0.9160);transform-origin:0.11px 0;">0.5</div>
<div class="a" style="left:1870px;top:220px;width:8px;height:1.5px;background:#000"></div>
<div class="t" style="left:1880.79px;top:212.06px;font-size:18px;line-height:18px;color:#000;transform:scaleX(0.9160);transform-origin:0.11px 0;">0.6</div>
<div class="a" style="left:5px;top:1074px;width:30px;height:24px;background:#fbfbfb;border:1px solid #d4d4d4;border-radius:3px"></div>
<div class="a" style="left:45px;top:1074px;width:31px;height:24px;background:#fbfbfb;border:1px solid #d4d4d4;border-radius:3px"></div>
<div class="a" style="left:86px;top:1073px;width:31px;height:25px;background:#cce4f7;border:1px solid #2a7ad8;border-radius:3px"></div>
<div class="a" style="left:127px;top:1074px;width:30px;height:24px;background:#fbfbfb;border:1px solid #d4d4d4;border-radius:3px"></div>
<svg class="a" style="left:0;top:1068px" width="170" height="34"><circle cx="19.5" cy="17.5" r="8" fill="none" stroke="#333" stroke-width="1"/><circle cx="19.5" cy="17.5" r="5" fill="none" stroke="#777" stroke-width="0.8"/><path d="M7,17.5 H32 M19.5,5 V30" stroke="#000" stroke-width="1.8"/><rect x="50.5" y="10.5" width="22" height="15" fill="none" stroke="#000" stroke-width="2"/><ellipse cx="101.5" cy="17.5" rx="11" ry="7.5" fill="none" stroke="#000" stroke-width="2"/><path d="M137,25 A8,8 0 1 1 149,22" fill="none" stroke="#2a6ad0" stroke-width="4.5"/><path d="M144,18 L152,27 L143,28 Z" fill="#2a6ad0"/></svg>
<div class="a" style="left:177px;top:1069px;width:1px;height:31px;background:#a8a8a8"></div>
<div class="a" style="left:777px;top:1069px;width:1px;height:31px;background:#a8a8a8"></div>
<div class="a" style="left:310px;top:1074px;width:31px;height:24px;background:#fbfbfb;border:1px solid #d4d4d4;border-radius:3px"></div>
<div class="a" style="left:367px;top:1074px;width:31px;height:24px;background:#fbfbfb;border:1px solid #d4d4d4;border-radius:3px"></div>
<div class="a" style="left:557px;top:1074px;width:31px;height:24px;border:1px solid #e4e4e4;border-radius:3px"></div>
<div class="a" style="left:614px;top:1074px;width:31px;height:24px;border:1px solid #e4e4e4;border-radius:3px"></div>
<svg class="a" style="left:300px;top:1068px" width="360" height="34"><rect x="18" y="9" width="4" height="17" fill="#2a5ac8"/><path d="M33,9 V26 L22,17.5 Z" fill="#2a5ac8"/><path d="M87,9 V26 L76,17.5 Z" fill="#2a5ac8"/><path d="M269,10 V25 L279,17.5 Z" fill="#8ab0e8"/><path d="M325,10 V25 L335,17.5 Z" fill="#8ab0e8"/><rect x="335" y="9" width="4" height="17" fill="#8ab0e8"/></svg>
<div class="a" style="left:423px;top:1074px;width:109px;height:24px;background:#fff"></div>
<div class="t" style="left:456.19px;top:1076.61px;font-size:17px;line-height:17px;color:#000;transform:scaleX(0.9714);transform-origin:0.41px 0;">22/22</div>
<div class="a" style="left:932px;top:1076px;width:19px;height:19px;border:1px solid #c8c8c8;border-radius:3px;background:#f3f3f3"></div>
<div class="t" style="left:955.00px;top:1077.50px;font-size:16.3px;line-height:16.3px;color:#6d6d6d;transform:scaleX(0.9765);transform-origin:1.00px 0;">Background</div>
<div class="a" style="left:1195px;top:1076px;width:19px;height:19px;border-radius:3px;background:#c4c4c4"></div>
<svg class="a" style="left:1195px;top:1076px" width="19" height="19"><path d="M5,10 L8,13 L14,6" fill="none" stroke="#f4f4f4" stroke-width="1.3"/></svg>
<div class="t" style="left:1218.00px;top:1077.50px;font-size:16.3px;line-height:16.3px;color:#6d6d6d;transform:scaleX(0.9295);transform-origin:1.00px 0;">Baseline</div>
<div class="a" style="left:0;top:1103px;width:1914px;height:1px;background:#dcdcdc"></div>
<div class="a" style="left:0;top:1128px;width:1914px;height:3px;background:linear-gradient(90deg,#e2d6cc,#dcd8d8 50%,#c8d6dc)"></div>
<div class="a" style="left:545px;top:1105px;width:1px;height:23px;background:#d4d4d4"></div>
<div class="a" style="left:979px;top:1105px;width:1px;height:23px;background:#d4d4d4"></div>
<div class="a" style="left:1155px;top:1105px;width:1px;height:23px;background:#d4d4d4"></div>
<div class="a" style="left:1331px;top:1105px;width:1px;height:23px;background:#d4d4d4"></div>
<div class="a" style="left:1515px;top:1105px;width:1px;height:23px;background:#d4d4d4"></div>
<div class="a" style="left:1754px;top:1105px;width:1px;height:23px;background:#d4d4d4"></div>
<div class="t" style="left:0.00px;top:1110.39px;font-size:17.5px;line-height:17.5px;color:#000;transform:scaleX(0.9320);transform-origin:1.00px 0;">Ready</div>
<div class="t" style="left:181.39px;top:1110.39px;font-size:17.5px;line-height:17.5px;color:#000;transform:scaleX(0.9815);transform-origin:0.81px 0;">CinSquare | 0021</div>
<div class="t" style="left:550.39px;top:1110.39px;font-size:17.5px;line-height:17.5px;color:#000;transform:scaleX(1.0021);transform-origin:0.81px 0;">1260 x 1024</div>
<div class="t" style="left:983.79px;top:1110.39px;font-size:17.5px;line-height:17.5px;color:#000;transform:scaleX(1.0250);transform-origin:0.61px 0;">Min: -0.006289</div>
<div class="t" style="left:1159.39px;top:1110.39px;font-size:17.5px;line-height:17.5px;color:#000;transform:scaleX(0.9937);transform-origin:1.31px 0;">Max: 0.6382</div>
<div class="t" style="left:1519.79px;top:1110.39px;font-size:17.5px;line-height:17.5px;color:#000;transform:scaleX(1.0131);transform-origin:1.11px 0;">Mem: 353.8 MB</div>
<div class="t" style="left:1759.00px;top:1110.39px;font-size:17.5px;line-height:17.5px;color:#000;transform:scaleX(0.9355);transform-origin:0.50px 0;">CPU:&nbsp; 5%</div>
</body></html>
